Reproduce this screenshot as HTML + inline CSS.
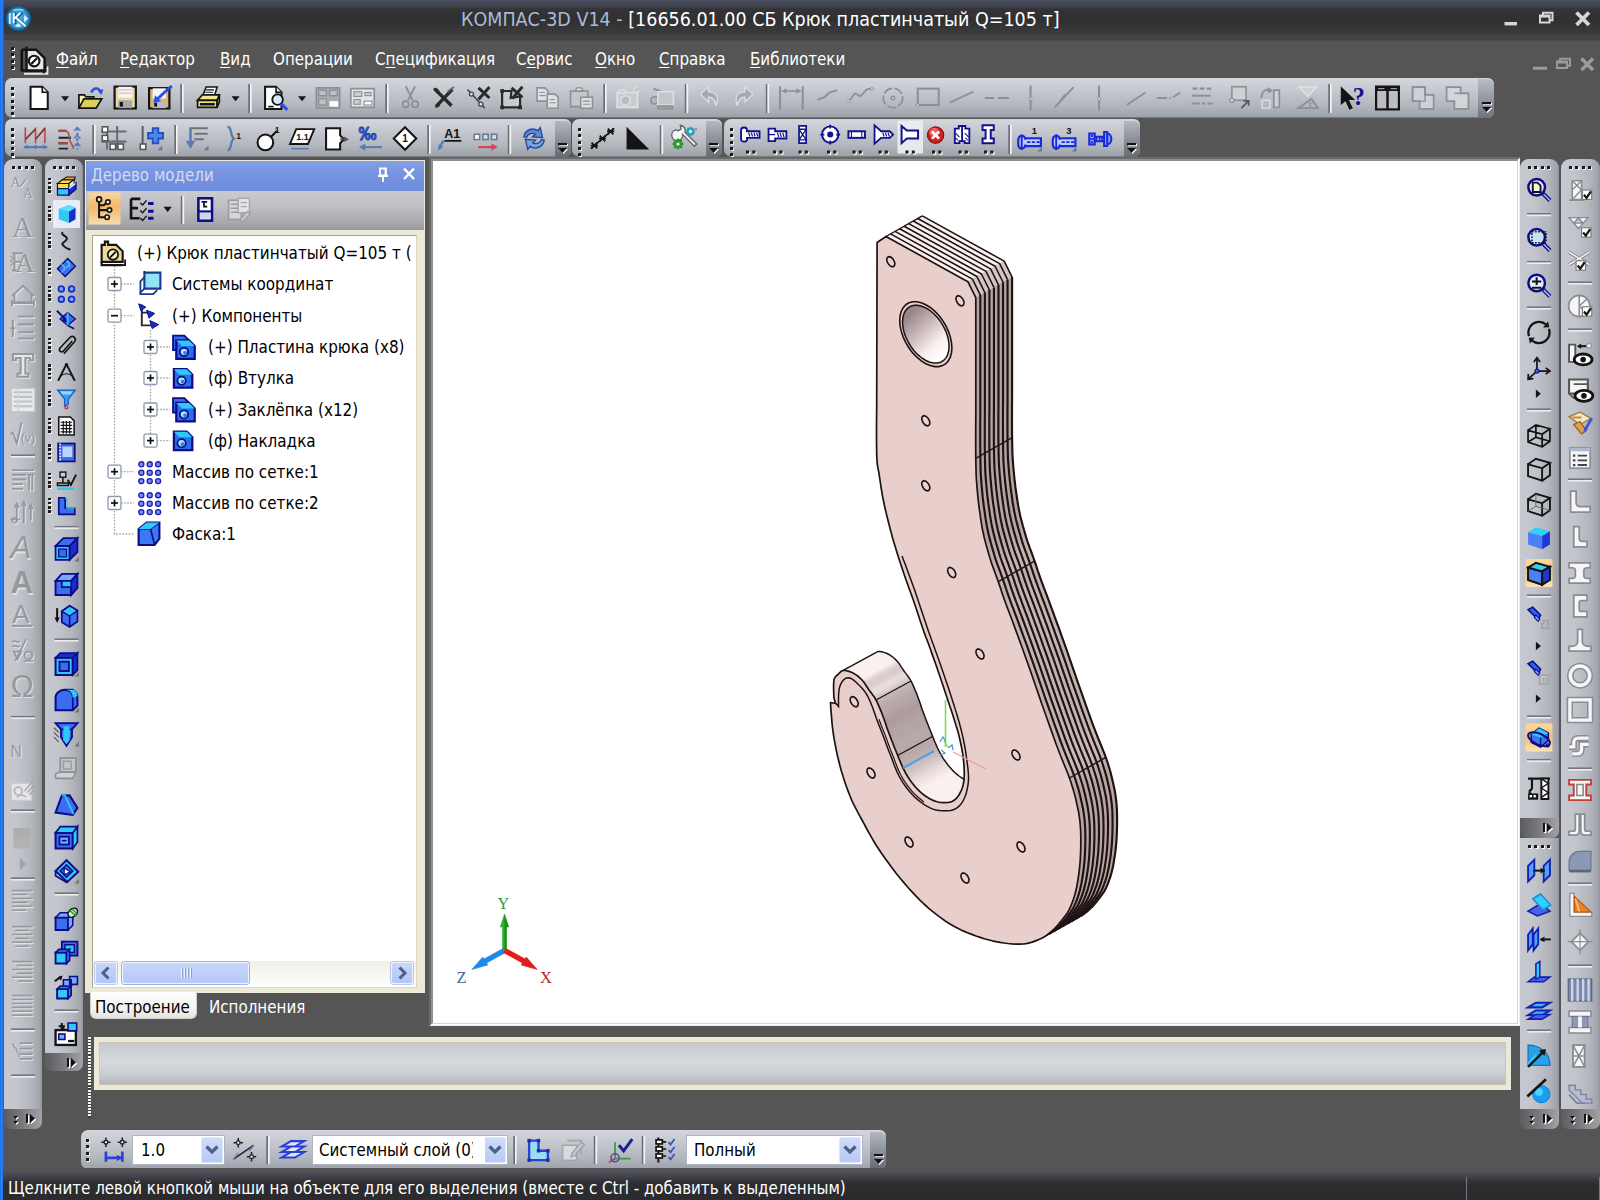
<!DOCTYPE html>
<html lang="ru"><head><meta charset="utf-8"><title>КОМПАС-3D V14</title>
<style>
html,body{margin:0;padding:0;background:#555;}
body{width:1600px;height:1200px;position:relative;overflow:hidden;font-family:'DejaVu Sans Condensed','Liberation Sans',sans-serif;}
div{position:absolute;box-sizing:border-box;}
svg{position:absolute;overflow:visible;}
.t{white-space:nowrap;line-height:1;}
u{text-decoration:underline;text-underline-offset:2px;}
</style></head>
<body>
<div style="left:0px;top:0px;width:1600px;height:1200px;background:#555555"></div>
<div style="left:0px;top:0px;width:1600px;height:41px;background:linear-gradient(to bottom,#4a4e60 0,#40444f 6px,#343436 9px,#303032 20px,#3b3b3c 34px,#474748 37px,#3c3c3c 39px,#555 41px)"></div>
<div style="left:0px;top:0px;width:3.2px;height:1200px;background:linear-gradient(to right,#1a6ae8,#2a86f4 60%,#1e72e6)"></div>
<div style="left:3.2px;top:0px;width:1.6px;height:1200px;background:linear-gradient(to right,#2a5ab0,rgba(60,80,120,0))"></div>
<svg style="left:0;top:0" width="40" height="40" viewBox="0 0 40 40"><defs><radialGradient id="lg" cx="0.5" cy="0.5" r="0.5"><stop offset="0" stop-color="#48b4ec"/><stop offset="0.72" stop-color="#3494d0"/><stop offset="0.9" stop-color="#1f6496"/><stop offset="1" stop-color="#17486e"/></radialGradient></defs><circle cx="18.400" cy="18.400" r="12.700" fill="url(#lg)"/><path d="M13 9.800q5.500-2.200 11 0l-1 1.300q-4.500-1.600-9 0z" fill="#7fdcfa"/><path d="M8.800 13.500l1.900-.8v11.500l-1.900-.8z" fill="#c4f0ff"/><path d="M24 14.800l4.300 3.800-4.300 3.800z" fill="#c4f0ff"/><path d="M14.600 26.300l3.600-3.400 3.400 3.400q-3.500 1.200-7 0z" fill="#d4f4ff"/><path d="M15.500 12.500v11.500M16.500 18.800l6-6M16.500 17l10 9.500" stroke="#185a8c" stroke-width="1.900" fill="none"/><path d="M13.700 13v10.300M14.300 18.600l6.200-5.800M15.500 17.300l10.300 8.900" stroke="#fff" stroke-width="1.800" fill="none"/></svg>
<div class="t" style="left:461px;top:9.5px;font-size:19.5px;color:#fff;letter-spacing:0.0px"><span style="color:#a9bbd6">КОМПАС-3D V14 - </span>[16656.01.00 СБ Крюк пластинчатый Q=105 т]</div>
<svg style="left:0;top:0" width="1600" height="80" viewBox="0 0 1600 80" fill="none"><g stroke="#d6d6da"><path d="M1504.500 23.700h12.500" stroke-width="3.400"/><path d="M1543 15v-2.200h9.500v7.500h-2.500M1540 15.500h9.500v7h-9.500z" stroke-width="2"/><path d="M1540 16.300h9.500" stroke-width="2.600"/><path d="M1576.500 12.500l12.500 12.500M1589 12.500l-12.500 12.500" stroke-width="3.800"/></g><g stroke="#9c9ca0"><path d="M1533 68.200h14" stroke-width="3"/><path d="M1560 61v-2.200h10v7h-2.500M1557 61.500h10v6.500h-10z" stroke-width="1.900"/><path d="M1557 62.300h10" stroke-width="2.400"/><path d="M1581.500 58.500l11.500 11.500M1593 58.500l-11.500 11.500" stroke-width="3.400"/></g></svg>
<div style="left:11.8px;top:48.3px;width:3px;height:3px;background:#f4f4f4"></div><div style="left:10.5px;top:47.0px;width:3px;height:3px;background:#1a1a1a"></div><div style="left:11.8px;top:54.599999999999994px;width:3px;height:3px;background:#f4f4f4"></div><div style="left:10.5px;top:53.3px;width:3px;height:3px;background:#1a1a1a"></div><div style="left:11.8px;top:60.9px;width:3px;height:3px;background:#f4f4f4"></div><div style="left:10.5px;top:59.6px;width:3px;height:3px;background:#1a1a1a"></div><div style="left:11.8px;top:67.2px;width:3px;height:3px;background:#f4f4f4"></div><div style="left:10.5px;top:65.9px;width:3px;height:3px;background:#1a1a1a"></div>
<div class="t" style="left:56px;top:50.5px;font-size:16.8px;color:#fff;"><u>Ф</u>айл</div>
<div class="t" style="left:120px;top:50.5px;font-size:16.8px;color:#fff;"><u>Р</u>едактор</div>
<div class="t" style="left:220px;top:50.5px;font-size:16.8px;color:#fff;"><u>В</u>ид</div>
<div class="t" style="left:273px;top:50.5px;font-size:16.8px;color:#fff;">Операции</div>
<div class="t" style="left:375px;top:50.5px;font-size:16.8px;color:#fff;">С<u>п</u>ецификация</div>
<div class="t" style="left:516px;top:50.5px;font-size:16.8px;color:#fff;">С<u>е</u>рвис</div>
<div class="t" style="left:595px;top:50.5px;font-size:16.8px;color:#fff;"><u>О</u>кно</div>
<div class="t" style="left:659px;top:50.5px;font-size:16.8px;color:#fff;"><u>С</u>правка</div>
<div class="t" style="left:750px;top:50.5px;font-size:16.8px;color:#fff;"><u>Б</u>иблиотеки</div>
<div style="left:4.5px;top:77.5px;width:1489.5px;height:40px;background:linear-gradient(to bottom,#d3d6db 0%,#c6c9cf 30%,#b3b7be 70%,#9da1a9 100%);border-radius:7px 6px 6px 7px;border-bottom:1px solid #77797f"></div>
<div style="left:1478px;top:79px;width:16px;height:38.5px;background:linear-gradient(to bottom,#b9bdc5,#6f737b);border-radius:0 6px 6px 0"></div>
<svg style="left:1481.5px;top:102px" width="12" height="14" viewBox="0 0 12 14"><rect x="1" y="1" width="9" height="2.2" fill="#fff"/><rect x="0" y="0" width="9" height="2.2" fill="#111"/><path d="M1 6h9l-4.5 5z" fill="#fff"/><path d="M0 5h9l-4.5 5z" fill="#111"/></svg>
<div style="left:11.8px;top:88.3px;width:3px;height:3px;background:#f4f4f4"></div><div style="left:10.5px;top:87.0px;width:3px;height:3px;background:#1a1a1a"></div><div style="left:11.8px;top:94.6px;width:3px;height:3px;background:#f4f4f4"></div><div style="left:10.5px;top:93.3px;width:3px;height:3px;background:#1a1a1a"></div><div style="left:11.8px;top:100.89999999999999px;width:3px;height:3px;background:#f4f4f4"></div><div style="left:10.5px;top:99.6px;width:3px;height:3px;background:#1a1a1a"></div><div style="left:11.8px;top:107.2px;width:3px;height:3px;background:#f4f4f4"></div><div style="left:10.5px;top:105.9px;width:3px;height:3px;background:#1a1a1a"></div><div style="left:11.8px;top:113.5px;width:3px;height:3px;background:#f4f4f4"></div><div style="left:10.5px;top:112.2px;width:3px;height:3px;background:#1a1a1a"></div>
<div style="left:4.5px;top:119px;width:566px;height:37.5px;background:linear-gradient(to bottom,#d3d6db 0%,#c6c9cf 30%,#b3b7be 70%,#9da1a9 100%);border-radius:7px 6px 6px 7px;border-bottom:1px solid #77797f"></div>
<div style="left:554.5px;top:120.5px;width:16px;height:36.0px;background:linear-gradient(to bottom,#b3b7bf,#666a72);border-radius:0 6px 6px 0"></div>
<svg style="left:558.0px;top:143px" width="12" height="14" viewBox="0 0 12 14"><rect x="1" y="1" width="9" height="2.2" fill="#fff"/><rect x="0" y="0" width="9" height="2.2" fill="#111"/><path d="M1 6h9l-4.5 5z" fill="#fff"/><path d="M0 5h9l-4.5 5z" fill="#111"/></svg>
<div style="left:11.8px;top:129.3px;width:3px;height:3px;background:#f4f4f4"></div><div style="left:10.5px;top:128.0px;width:3px;height:3px;background:#1a1a1a"></div><div style="left:11.8px;top:135.60000000000002px;width:3px;height:3px;background:#f4f4f4"></div><div style="left:10.5px;top:134.3px;width:3px;height:3px;background:#1a1a1a"></div><div style="left:11.8px;top:141.9px;width:3px;height:3px;background:#f4f4f4"></div><div style="left:10.5px;top:140.6px;width:3px;height:3px;background:#1a1a1a"></div><div style="left:11.8px;top:148.20000000000002px;width:3px;height:3px;background:#f4f4f4"></div><div style="left:10.5px;top:146.9px;width:3px;height:3px;background:#1a1a1a"></div><div style="left:11.8px;top:154.5px;width:3px;height:3px;background:#f4f4f4"></div><div style="left:10.5px;top:153.2px;width:3px;height:3px;background:#1a1a1a"></div>
<div style="left:571.5px;top:119px;width:150px;height:37.5px;background:linear-gradient(to bottom,#d3d6db 0%,#c6c9cf 30%,#b3b7be 70%,#9da1a9 100%);border-radius:7px 6px 6px 7px;border-bottom:1px solid #77797f"></div>
<div style="left:705.5px;top:120.5px;width:16px;height:36.0px;background:linear-gradient(to bottom,#b3b7bf,#666a72);border-radius:0 6px 6px 0"></div>
<svg style="left:709.0px;top:143px" width="12" height="14" viewBox="0 0 12 14"><rect x="1" y="1" width="9" height="2.2" fill="#fff"/><rect x="0" y="0" width="9" height="2.2" fill="#111"/><path d="M1 6h9l-4.5 5z" fill="#fff"/><path d="M0 5h9l-4.5 5z" fill="#111"/></svg>
<div style="left:578.8px;top:129.3px;width:3px;height:3px;background:#f4f4f4"></div><div style="left:577.5px;top:128.0px;width:3px;height:3px;background:#1a1a1a"></div><div style="left:578.8px;top:135.60000000000002px;width:3px;height:3px;background:#f4f4f4"></div><div style="left:577.5px;top:134.3px;width:3px;height:3px;background:#1a1a1a"></div><div style="left:578.8px;top:141.9px;width:3px;height:3px;background:#f4f4f4"></div><div style="left:577.5px;top:140.6px;width:3px;height:3px;background:#1a1a1a"></div><div style="left:578.8px;top:148.20000000000002px;width:3px;height:3px;background:#f4f4f4"></div><div style="left:577.5px;top:146.9px;width:3px;height:3px;background:#1a1a1a"></div><div style="left:578.8px;top:154.5px;width:3px;height:3px;background:#f4f4f4"></div><div style="left:577.5px;top:153.2px;width:3px;height:3px;background:#1a1a1a"></div>
<div style="left:723.5px;top:119px;width:416px;height:37.5px;background:linear-gradient(to bottom,#d3d6db 0%,#c6c9cf 30%,#b3b7be 70%,#9da1a9 100%);border-radius:7px 6px 6px 7px;border-bottom:1px solid #77797f"></div>
<div style="left:1123.5px;top:120.5px;width:16px;height:36.0px;background:linear-gradient(to bottom,#b3b7bf,#666a72);border-radius:0 6px 6px 0"></div>
<svg style="left:1127.0px;top:143px" width="12" height="14" viewBox="0 0 12 14"><rect x="1" y="1" width="9" height="2.2" fill="#fff"/><rect x="0" y="0" width="9" height="2.2" fill="#111"/><path d="M1 6h9l-4.5 5z" fill="#fff"/><path d="M0 5h9l-4.5 5z" fill="#111"/></svg>
<div style="left:730.8px;top:129.3px;width:3px;height:3px;background:#f4f4f4"></div><div style="left:729.5px;top:128.0px;width:3px;height:3px;background:#1a1a1a"></div><div style="left:730.8px;top:135.60000000000002px;width:3px;height:3px;background:#f4f4f4"></div><div style="left:729.5px;top:134.3px;width:3px;height:3px;background:#1a1a1a"></div><div style="left:730.8px;top:141.9px;width:3px;height:3px;background:#f4f4f4"></div><div style="left:729.5px;top:140.6px;width:3px;height:3px;background:#1a1a1a"></div><div style="left:730.8px;top:148.20000000000002px;width:3px;height:3px;background:#f4f4f4"></div><div style="left:729.5px;top:146.9px;width:3px;height:3px;background:#1a1a1a"></div><div style="left:730.8px;top:154.5px;width:3px;height:3px;background:#f4f4f4"></div><div style="left:729.5px;top:153.2px;width:3px;height:3px;background:#1a1a1a"></div>
<svg style="left:0;top:0" width="1600" height="1200" viewBox="0 0 1600 1200" shape-rendering="auto">
<g transform="translate(29.0,85.5) scale(1.5625)"><path d="M1 .8h7.500l3.500 3.500v10.700h-11z" fill="#fff" stroke="#141414" stroke-width="1.3" /><path d="M8.500 .8v3.500h3.500" fill="#dfe0e3" stroke="#141414" stroke-width="1" /></g>
<g transform="translate(78.0,85.5) scale(1.5625)"><path d="M.6 14.500v-8.500h3.500l1 1.300h5v2" fill="#f4f0a8" stroke="#141414" stroke-width="1.1" /><path d="M.6 14.500l3.200-6h11.400l-3.600 6z" fill="#d8d060" stroke="#141414" stroke-width="1.1" /><path d="M8.500 4.500c1.500-3.500 5-3.500 6 .2" fill="none" stroke="#2a50e8" stroke-width="1.7" /><path d="M12.800 3l2.200 3 1.200-3.600z" fill="#2a50e8" /></g>
<g transform="translate(113.5,85.5) scale(1.5625)"><rect x="0.7" y="0.7" width="13.6" height="14" fill="#e6d9a2" stroke="#141414" stroke-width="1.4" /><rect x="3" y="0.8" width="9" height="7" fill="#f4f4f4" /><path d="M3.500 2.800h8M3.500 4.800h8" fill="none" stroke="#e0b8b8" stroke-width="0.8" /><rect x="3" y="9.5" width="9" height="5" fill="#a8a8a8" /><rect x="4" y="10.5" width="2" height="3" fill="#141414" /></g>
<g transform="translate(148.0,85.5) scale(1.5625)"><rect x="0.7" y="1.7" width="13" height="13" fill="#d9b870" stroke="#141414" stroke-width="1.4" /><rect x="3" y="1.8" width="8.5" height="6.5" fill="#f4f4f4" /><rect x="3" y="10" width="8.5" height="4.5" fill="#b8b8c8" /><rect x="4" y="11" width="1.8" height="2.5" fill="#141414" /><path d="M14.500 .8L5 9.500" fill="none" stroke="#2a50e8" stroke-width="1.8" /><path d="M3.500 11l1-4.800 3.800 3.800z" fill="#2a50e8" /><circle cx="14.6" cy="0.9" r="1" fill="#2a50e8" /></g>
<g transform="translate(196.0,85.5) scale(1.5625)"><path d="M4.500 6l2-5h7l-1.500 5z" fill="#fff" stroke="#141414" stroke-width="1" /><path d="M6.500 2.800h5M6 4.300h5" fill="none" stroke="#141414" stroke-width="0.7" /><path d="M1 9.500l3-3.500h11l-1.500 3.500z" fill="#f0e890" stroke="#141414" stroke-width="1" /><path d="M1 9.500h12.500v4.500h-12.500z" fill="#e8e080" stroke="#141414" stroke-width="1.1" /><path d="M13.500 9.500l1.500-3.500v4.500l-1.500 3.500z" fill="#b8b050" stroke="#141414" stroke-width="1" /><path d="M2.500 12h9.500" fill="none" stroke="#141414" stroke-width="1.6" /></g>
<g transform="translate(263.5,85.5) scale(1.5625)"><path d="M1 .8h7l3.500 3.500v10.700h-10.500z" fill="#fff" stroke="#141414" stroke-width="1.3" /><path d="M8 .8v3.500h3.500" fill="#dfe0e3" stroke="#141414" stroke-width="1" /><circle cx="9" cy="9" r="3.4" fill="#d8e8ff" stroke="#141414" stroke-width="1.2" /><path d="M11.300 11.600l4 4" fill="none" stroke="#2a50e8" stroke-width="2" /><path d="M3 13.500h3.500" fill="none" stroke="#141414" stroke-width="1" /></g>
<g transform="translate(315.5,85.5) scale(1.5625)"><rect x="0.5" y="1.5" width="15" height="13" fill="#a9abb0" stroke="#8d8f95" stroke-width="1" /><rect x="2" y="3" width="5" height="3.5" fill="#bdbfc4" stroke="#8d8f95" stroke-width="0.8" /><rect x="9" y="3" width="5" height="3.5" fill="#bdbfc4" stroke="#8d8f95" stroke-width="0.8" /><rect x="2" y="8.5" width="5" height="4" fill="#bdbfc4" stroke="#8d8f95" stroke-width="0.8" /><rect x="9" y="10" width="5.5" height="3.5" fill="#fff" /></g>
<g transform="translate(350.0,85.5) scale(1.5625)"><rect x="0.5" y="2" width="15" height="12" fill="#e4e5e8" stroke="#8d8f95" stroke-width="1.1" /><rect x="2.5" y="4" width="5" height="3" fill="#cfd0d4" stroke="#8d8f95" stroke-width="0.7" /><rect x="9.5" y="4.5" width="4" height="2" fill="#cfd0d4" stroke="#8d8f95" stroke-width="0.7" /><rect x="2.5" y="9" width="4" height="3" fill="#cfd0d4" stroke="#8d8f95" stroke-width="0.7" /><rect x="9" y="10" width="5" height="2.5" fill="#fff" stroke="#8d8f95" stroke-width="0.7" /></g>
<g transform="translate(401.0,85.5) scale(1.5625)"><path d="M3 .5l4.500 9M9 .5l-4.500 9" fill="none" stroke="#8d8f95" stroke-width="1.2" /><circle cx="3" cy="12" r="2" fill="none" stroke="#8d8f95" stroke-width="1.1" /><circle cx="9" cy="12" r="2" fill="none" stroke="#8d8f95" stroke-width="1.1" /></g>
<g transform="translate(432.0,85.5) scale(1.5625)"><path d="M1.500 2l11 11M13 2.500l-10.500 11" fill="none" stroke="#2a2a2a" stroke-width="2.2" /><path d="M.8 1.500l3 .5 1.500 2.500-2 1z" fill="#2a2a2a" /><path d="M2 14.500l1-3 2.500 1.500z" fill="#2a2a2a" /><path d="M10 4l4-3" fill="none" stroke="#666" stroke-width="1.2" /></g>
<g transform="translate(466.0,85.5) scale(1.5625)"><path d="M1 2.500l11 12" fill="none" stroke="#444" stroke-width="1" /><circle cx="3.5" cy="5.5" r="1.3" fill="#dfe0e3" stroke="#444" stroke-width="0.8" /><circle cx="9.5" cy="12" r="1.3" fill="#dfe0e3" stroke="#444" stroke-width="0.8" /><path d="M8 1.500l7 6.500M15 1l-7 8" fill="none" stroke="#2a2a2a" stroke-width="1.9" /></g>
<g transform="translate(499.0,85.5) scale(1.5625)"><path d="M2 3.500h6l-.5 4.500 6-1v7h-11.500z" fill="#c8cad0" stroke="#2a2a2a" stroke-width="1.4" /><rect x="0.8" y="2.3" width="2.4" height="2.4" fill="#2a2a2a" /><rect x="0.8" y="12.8" width="2.4" height="2.4" fill="#2a2a2a" /><rect x="12.3" y="12.8" width="2.4" height="2.4" fill="#2a2a2a" /><path d="M8 1.500l7 6M15 .8l-6.500 7.500" fill="none" stroke="#2a2a2a" stroke-width="1.8" /></g>
<g transform="translate(535.5,85.5) scale(1.5625)"><path d="M1 1.500h5l2 2v6.500h-7z" fill="#dfe0e3" stroke="#8d8f95" stroke-width="1" /><path d="M2.500 4.500h3.500M2.500 6.500h4" fill="none" stroke="#8d8f95" stroke-width="0.7" /><path d="M7.500 5.500h5l2 2v7h-7z" fill="#dfe0e3" stroke="#8d8f95" stroke-width="1" /><path d="M9 9h3.500M9 11h4" fill="none" stroke="#8d8f95" stroke-width="0.7" /></g>
<g transform="translate(569.0,85.5) scale(1.5625)"><path d="M1 3.500h11v10h-11z" fill="#c4c6ca" stroke="#8d8f95" stroke-width="1" /><path d="M4 3.500l1-2h3l1 2z" fill="#dfe0e3" stroke="#8d8f95" stroke-width="0.9" /><path d="M7.500 7.500h7.500v7h-7.500z" fill="#dfe0e3" stroke="#8d8f95" stroke-width="1" /><path d="M9 10h4.500M9 12h4.500" fill="none" stroke="#8d8f95" stroke-width="0.7" /></g>
<g transform="translate(616.0,85.5) scale(1.5625)"><rect x="0.8" y="4.5" width="13" height="9.5" fill="#c9cbd0" stroke="#dfe0e3" stroke-width="1.2" /><circle cx="6" cy="9.5" r="3" fill="#b9bbc0" stroke="#dfe0e3" stroke-width="1" /><path d="M11 3l2-2.500M13 4.500l2.500-.8M10 1l.3-1" fill="none" stroke="#dfe0e3" stroke-width="1" /><rect x="2" y="2.8" width="4" height="2" fill="#c9cbd0" stroke="#dfe0e3" stroke-width="0.8" /></g>
<g transform="translate(650.0,85.5) scale(1.5625)"><path d="M2 2l7 2.500M9 4.500l4 5.500" fill="none" stroke="#8d8f95" stroke-width="1.3" /><circle cx="2.8" cy="9.5" r="2.3" fill="#b4b6bb" stroke="#8d8f95" stroke-width="1" /><rect x="5" y="4" width="10" height="8.5" fill="#c4c6cb" stroke="#dfe0e3" stroke-width="1" /><rect x="5" y="13" width="9.5" height="2" fill="#9c9ea4" stroke="#8d8f95" stroke-width="0.8" /></g>
<g transform="translate(699.0,85.5) scale(1.5625)"><path d="M1 5.500l5-4.500v3c5 0 7 3.500 5 9-.500-4-2-5.500-5-5.500v3z" fill="#a6a8ae" stroke="#dfe0e3" stroke-width="0.8" /></g>
<g transform="translate(731.0,85.5) scale(1.5625)"><path d="M14 5.500l-5-4.500v3c-5 0-7 3.500-5 9 .5-4 2-5.500 5-5.500v3z" fill="#a6a8ae" stroke="#dfe0e3" stroke-width="0.8" /></g>
<g transform="translate(778.5,85.5) scale(1.5625)"><path d="M1 .5v15M15.500 .5v15" fill="none" stroke="#8d8f95" stroke-width="1.3" /><path d="M2.500 3.500h11.500" fill="none" stroke="#8d8f95" stroke-width="1" /><path d="M2 3.500l3-1.800v3.600zM14.500 3.500l-3-1.800v3.600z" fill="#8d8f95" /></g>
<g transform="translate(816.0,85.5) scale(1.5625)"><path d="M1 9l4.500-1.500 3-3 5-1.500" fill="none" stroke="#8d8f95" stroke-width="1.2" /></g>
<g transform="translate(848.0,85.5) scale(1.5625)"><path d="M.5 10l4-5 3.500 2 4-4.500 3.500-.5" fill="none" stroke="#8d8f95" stroke-width="1.1" /><circle cx="0.8" cy="10" r="0.9" fill="#dfe0e3" stroke="#8d8f95" stroke-width="0.6" /><circle cx="15.3" cy="2.2" r="0.9" fill="#dfe0e3" stroke="#8d8f95" stroke-width="0.6" /></g>
<g transform="translate(882.0,85.5) scale(1.5625)"><circle cx="7" cy="8" r="6.2" fill="none" stroke="#8d8f95" stroke-width="1.1" stroke-dasharray="6 1.500"/><circle cx="7" cy="8" r="1.2" fill="none" stroke="#8d8f95" stroke-width="0.8" /></g>
<g transform="translate(916.5,85.5) scale(1.5625)"><rect x="0.8" y="2" width="13.4" height="10.5" fill="none" stroke="#8d8f95" stroke-width="1.3" /><circle cx="0.8" cy="12.5" r="0.9" fill="#dfe0e3" stroke="#8d8f95" stroke-width="0.6" /></g>
<g transform="translate(949.0,85.5) scale(1.5625)"><path d="M.5 11l15-7" fill="none" stroke="#8d8f95" stroke-width="1.2" /></g>
<g transform="translate(984.0,85.5) scale(1.5625)"><path d="M.5 8h6M9 8h7" fill="none" stroke="#8d8f95" stroke-width="1.3" /></g>
<g transform="translate(1029.0,85.5) scale(1.5625)"><path d="M1 0v16" fill="none" stroke="#8d8f95" stroke-width="1.3" /><circle cx="1" cy="8.5" r="1" fill="#dfe0e3" stroke="#8d8f95" stroke-width="0.6" /></g>
<g transform="translate(1054.0,85.5) scale(1.5625)"><path d="M.5 14l12-13" fill="none" stroke="#8d8f95" stroke-width="1.2" /><path d="M7 5.500l-4 6" fill="none" stroke="#8d8f95" stroke-width="0.8" /></g>
<g transform="translate(1097.5,85.5) scale(1.5625)"><path d="M1 0v16" fill="none" stroke="#8d8f95" stroke-width="1.3" /><circle cx="1" cy="8.5" r="1" fill="#dfe0e3" stroke="#8d8f95" stroke-width="0.6" /></g>
<g transform="translate(1126.0,85.5) scale(1.5625)"><path d="M.5 12.500l12-8" fill="none" stroke="#8d8f95" stroke-width="1.2" /></g>
<g transform="translate(1156.0,85.5) scale(1.5625)"><path d="M.5 8h6.500M8.500 8h1M11 7.500l4.500-3" fill="none" stroke="#8d8f95" stroke-width="1.2" /></g>
<g transform="translate(1191.0,85.5) scale(1.5625)"><path d="M1 2h3M5.500 2h3M10 2h3M.5 6.500h12M.5 11.500h5M7 11.500h2M10.500 11.500h3.500" fill="none" stroke="#8d8f95" stroke-width="1.3" /></g>
<g transform="translate(1228.0,85.5) scale(1.5625)"><rect x="2.5" y="0.8" width="9" height="8.5" fill="#cfd1d6" stroke="#8d8f95" stroke-width="1" /><circle cx="2.5" cy="9.5" r="1.3" fill="#dfe0e3" stroke="#8d8f95" stroke-width="0.8" /><path d="M8.500 14.500l4.500-4.500M10 9.800h3.200v3.200" fill="none" stroke="#55575c" stroke-width="1.1" /></g>
<g transform="translate(1259.0,85.5) scale(1.5625)"><path d="M1.500 8c0-4 3-6.500 6-5" fill="none" stroke="#8d8f95" stroke-width="1.2" /><path d="M6 1l3 2.500-3.500 1.500z" fill="#8d8f95" /><rect x="9.5" y="3" width="3.5" height="11" fill="#cfd1d6" stroke="#8d8f95" stroke-width="1.1" /><path d="M2 9.500h5v5h-5z" fill="none" stroke="#dfe0e3" stroke-width="0.9" /></g>
<g transform="translate(1296.0,85.5) scale(1.5625)"><path d="M2 1h11l-5.500 6z" fill="#cfd1d6" stroke="#dfe0e3" stroke-width="1" /><path d="M1.500 14.500h12.500l-4-6z" fill="none" stroke="#8d8f95" stroke-width="1.2" /><path d="M9 14v-3h3" fill="none" stroke="#8d8f95" stroke-width="0.7" /></g>
<g transform="translate(1340.0,85.5) scale(1.5625)"><path d="M.5 .5v12l3-2.500 2.500 5.500 2.200-1-2.500-5.300h4z" fill="#141414" /><text x="8.200" y="12.500" font-size="15.500" font-weight="bold" fill="#12128c" font-family="'Liberation Serif',serif">?</text></g>
<g transform="translate(1375.0,85.5) scale(1.5625)"><rect x="0.7" y="0.7" width="14.6" height="14.6" fill="#bcbec4" stroke="#141414" stroke-width="1.4" /><rect x="0.7" y="0.7" width="14.6" height="2.8" fill="#141414" /><path d="M8 2v13.500" fill="none" stroke="#141414" stroke-width="1.6" /><path d="M2 2h4M10 2h4" fill="none" stroke="#999" stroke-width="0.8" /></g>
<g transform="translate(1411.0,85.5) scale(1.5625)"><path d="M1 1h8v5h5.500v9h-9v-5h-4.500z" fill="#cdd0d5" stroke="#8d8f95" stroke-width="1.1" /><path d="M1 1h8v9h-8z" fill="none" stroke="#8d8f95" stroke-width="0.9" /></g>
<g transform="translate(1445.0,85.5) scale(1.5625)"><path d="M1 1h9v4h5v10h-9v-5h-5z" fill="#d3d5da" stroke="#8d8f95" stroke-width="1.1" /><path d="M6 5h9" fill="none" stroke="#8d8f95" stroke-width="0.9" /></g>
<g transform="translate(61.0,96.3) scale(1.5625)"><path d="M0 0h5.200l-2.600 3.200z" fill="#141414" /></g>
<g transform="translate(231.5,96.3) scale(1.5625)"><path d="M0 0h5.200l-2.600 3.200z" fill="#141414" /></g>
<g transform="translate(298.0,96.3) scale(1.5625)"><path d="M0 0h5.200l-2.600 3.200z" fill="#141414" /></g>
<rect x="180.3" y="84" width="1.700" height="29" fill="#6c6e74"/><rect x="182" y="84" width="1.700" height="29" fill="#f2f3f5"/>
<rect x="248.3" y="84" width="1.700" height="29" fill="#6c6e74"/><rect x="250" y="84" width="1.700" height="29" fill="#f2f3f5"/>
<rect x="385.3" y="84" width="1.700" height="29" fill="#6c6e74"/><rect x="387" y="84" width="1.700" height="29" fill="#f2f3f5"/>
<rect x="603.3" y="84" width="1.700" height="29" fill="#6c6e74"/><rect x="605" y="84" width="1.700" height="29" fill="#f2f3f5"/>
<rect x="684.8" y="84" width="1.700" height="29" fill="#6c6e74"/><rect x="686.5" y="84" width="1.700" height="29" fill="#f2f3f5"/>
<rect x="765.8" y="84" width="1.700" height="29" fill="#6c6e74"/><rect x="767.5" y="84" width="1.700" height="29" fill="#f2f3f5"/>
<rect x="1328.3" y="84" width="1.700" height="29" fill="#6c6e74"/><rect x="1330" y="84" width="1.700" height="29" fill="#f2f3f5"/>
<g transform="translate(23.0,126.0) scale(1.5625)"><path d="M1.500 1v10M8 1v10M14 1v10" fill="none" stroke="#b04a4a" stroke-width="1" /><path d="M1.500 8.500l6.500-6.500M8 8.500l6-7" fill="none" stroke="#8a3030" stroke-width="1.1" /><path d="M.5 13.500h15" fill="none" stroke="#5a78b4" stroke-width="1.4" /><path d="M.5 13.500l2.500-1.600v3.200zM15.500 13.500l-2.500-1.600v3.200zM8 12l1.500 1.500-1.500 1.500-1.500-1.500z" fill="#5a78b4" /></g>
<g transform="translate(57.0,126.0) scale(1.5625)"><path d="M1 3h5M1 7.500h8M1 11h6M1 14.500h6" fill="none" stroke="#222" stroke-width="1.2" /><path d="M1 11h6M1 3.200h4" fill="none" stroke="#c83c3c" stroke-width="1.2" /><path d="M4.500 3c3.500 0 3 3 3.500 5.500s2 3 2.500 6" fill="none" stroke="#b04a4a" stroke-width="1" /><path d="M13 1v14" fill="none" stroke="#5a78b4" stroke-width="1.3" stroke-dasharray="2 1.300"/><path d="M11 3l2-2 2 2M11 8l2-2 2 2M11 13l2-2 2 2" fill="none" stroke="#5a78b4" stroke-width="1" /></g>
<g transform="translate(101.5,126.0) scale(1.5625)"><path d="M3.500 0v15M10 0v15M0 3.500h16M0 10h16" fill="none" stroke="#6a6c72" stroke-width="1.3" /><rect x="0.5" y="0.5" width="3.5" height="3.5" fill="#fff" stroke="#555" stroke-width="1" /><rect x="0.5" y="6" width="3.5" height="3.5" fill="#fff" stroke="#555" stroke-width="1" /><rect x="5.5" y="11.5" width="3.5" height="3.5" fill="#fff" stroke="#555" stroke-width="1" /><rect x="10.5" y="11.5" width="3.5" height="3.5" fill="#fff" stroke="#555" stroke-width="1" /></g>
<g transform="translate(139.5,126.0) scale(1.5625)"><path d="M2 0v12" fill="none" stroke="#555" stroke-width="1.2" /><rect x="0.5" y="11.5" width="3.5" height="3.5" fill="#fff" stroke="#555" stroke-width="1" /><path d="M8.500 1.500h3.500v3h3v3.500h-3v3h-3.500v-3h-3v-3.500h3z" fill="#4a8af0" stroke="#2a50c0" stroke-width="1.3" /><path d="M14.500 15.500v-3l-3 3z" fill="#777" /></g>
<g transform="translate(185.0,126.0) scale(1.5625)"><path d="M3.500 1v11" fill="none" stroke="#5a78b4" stroke-width="1.6" /><path d="M.5 9.500h6l-3 5z" fill="#5a78b4" /><path d="M3.500 1.500h11M6 5h8.500M6 8.500h6" fill="none" stroke="#707278" stroke-width="1.3" /><path d="M15 15.500v-3l-3 3z" fill="#777" /></g>
<g transform="translate(226.0,126.0) scale(1.5625)"><path d="M1 .5c3 0 1.500 6 4 7.500-2.500 1.500-1 7.500-4 7.500" fill="none" stroke="#5a78b4" stroke-width="1.5" /><text x="6.5" y="8" font-size="5.5" fill="#141414" font-family="'Liberation Sans',sans-serif" font-weight="bold" >1</text></g>
<g transform="translate(256.0,126.0) scale(1.5625)"><circle cx="6" cy="10.5" r="5" fill="#fff" stroke="#141414" stroke-width="1.3" /><path d="M9.500 7l4-4" fill="none" stroke="#141414" stroke-width="1.3" /><text x="12" y="4.5" font-size="5.5" fill="#141414" font-family="'Liberation Sans',sans-serif" font-weight="bold" >1</text></g>
<g transform="translate(290.0,126.0) scale(1.5625)"><path d="M4 2h11.500l-4 9.500h-11.500z" fill="#fff" stroke="#141414" stroke-width="1.2" /><text x="4" y="9" font-size="5.8" fill="#141414" font-family="'Liberation Sans',sans-serif" font-weight="bold" >1.1</text><path d="M1 14.500h11" fill="none" stroke="#5a78b4" stroke-width="1" /></g>
<g transform="translate(324.5,126.0) scale(1.5625)"><path d="M1 1.500h9v4.500l2.500 2.500-2.500 2.500v4h-9z" fill="#fff" stroke="#141414" stroke-width="1.3" /><path d="M10 8.500h5" fill="none" stroke="#555" stroke-width="1.1" /><path d="M15.500 8.500l-3-1.800v3.600z" fill="#555" /></g>
<g transform="translate(358.5,126.0) scale(1.5625)"><text x="0" y="9" font-size="11.500" font-weight="bold" fill="#3a6ae0" stroke="#1c3ca8" stroke-width=".5" font-family="'Liberation Sans',sans-serif">‰</text><path d="M2 13.500h13" fill="none" stroke="#5a78b4" stroke-width="1.3" /><path d="M.3 13.500l4-2.300v4.600z" fill="#5a78b4" /></g>
<g transform="translate(392.5,126.0) scale(1.5625)"><path d="M8 .8l7.200 7.200-7.200 7.200-7.200-7.200z" fill="#fff" stroke="#141414" stroke-width="1.3" /><text x="6.3" y="10.3" font-size="6.5" fill="#141414" font-family="'Liberation Sans',sans-serif" font-weight="bold" >1</text></g>
<g transform="translate(438.0,126.0) scale(1.5625)"><text x="4" y="7.5" font-size="8" fill="#141414" font-family="'Liberation Sans',sans-serif" font-weight="bold" >A1</text><path d="M4.500 9.500h10.500" fill="none" stroke="#141414" stroke-width="1.1" /><path d="M4.500 9.500c-1.500 0-2.500 1.500-3 4.500" fill="none" stroke="#5a78b4" stroke-width="1.4" /><path d="M0 16l.5-4.500 2.800 1.800z" fill="#5a78b4" /></g>
<g transform="translate(473.5,126.0) scale(1.5625)"><rect x="0.5" y="5.3" width="3.4" height="3.4" fill="#fff" stroke="#6a7a94" stroke-width="1" /><rect x="6" y="5.3" width="3.4" height="3.4" fill="#c8e0e8" stroke="#6a7a94" stroke-width="1" /><rect x="11.5" y="5.3" width="3.4" height="3.4" fill="#c8e0e8" stroke="#6a7a94" stroke-width="1" /><path d="M3 13.500h10" fill="none" stroke="#d84060" stroke-width="1.4" /><path d="M15.500 13.500l-4-2.300v4.600z" fill="#d84060" /></g>
<g transform="translate(521.5,126.0) scale(1.5625)"><path d="M1.500 7c.5-4 5-6.500 9-4l1.500-2 1.500 6.500-6.500-.5 1.800-1.800c-2.500-1.200-5 0-5.500 2z" fill="#5a8ad8" stroke="#2a4a9a" stroke-width="0.9" /><path d="M14.500 9c-.5 4-5 6.500-9 4l-1.500 2-1.500-6.500 6.500 .5-1.800 1.800c2.500 1.200 5 0 5.500-2z" fill="#7aa6e8" stroke="#2a4a9a" stroke-width="0.9" /></g>
<g transform="translate(590.0,126.0) scale(1.5625)"><path d="M.5 14.500l15-13" fill="none" stroke="#141414" stroke-width="1" /><path d="M0.9999999999999998 10.7l3.600 3.600M4.6 10.7l-3.600 3.600M0.5 12.5h4.600" fill="none" stroke="#141414" stroke-width="1.1" /><path d="M6.2 6.2l3.600 3.600M9.8 6.2l-3.600 3.600M5.7 8h4.600" fill="none" stroke="#141414" stroke-width="1.1" /><path d="M11.399999999999999 1.7l3.600 3.600M15.0 1.7l-3.600 3.600M10.899999999999999 3.5h4.600" fill="none" stroke="#141414" stroke-width="1.1" /></g>
<g transform="translate(625.0,126.0) scale(1.5625)"><path d="M1 .5l14.500 14.500h-14.500z" fill="#141414" /></g>
<g transform="translate(672.5,126.0) scale(1.5625)"><path d="M2 2.500a3.500 3.500 0 1 0 4.500 3l7.500 7.500 1.500-1.500-7.500-7.500a3.500 3.500 0 0 0-3-4.500l.5 2.500-2 1z" fill="#f4f4f4" stroke="#666" stroke-width="0.9" /><g fill="#28b428" stroke="#127a12" stroke-width=".6"><circle cx="3.5" cy="11.5" r="2.6" fill="none" /></g><path d="M3.500 8v7M0 11.500h7M1 9l5 5M6 9l-5 5" fill="none" stroke="#1e9a1e" stroke-width="1.2" /><circle cx="3.5" cy="11.5" r="1" fill="#fff" /><g><circle cx="11.5" cy="3.5" r="2.4" fill="#30b8d8" stroke="#1a7a98" stroke-width="0.6" /></g><path d="M11.500 .5v6M8.500 3.500h6M9.400 1.400l4.200 4.200M13.600 1.400l-4.200 4.200" fill="none" stroke="#30a8c8" stroke-width="1.1" /><circle cx="11.5" cy="3.5" r="0.9" fill="#fff" /><circle cx="15" cy="2" r="0.6" fill="#e04040" /></g>
<rect x="92.3" y="125" width="1.700" height="29" fill="#6c6e74"/><rect x="94" y="125" width="1.700" height="29" fill="#f2f3f5"/>
<rect x="174.3" y="125" width="1.700" height="29" fill="#6c6e74"/><rect x="176" y="125" width="1.700" height="29" fill="#f2f3f5"/>
<rect x="427.3" y="125" width="1.700" height="29" fill="#6c6e74"/><rect x="429" y="125" width="1.700" height="29" fill="#f2f3f5"/>
<rect x="507.8" y="125" width="1.700" height="29" fill="#6c6e74"/><rect x="509.5" y="125" width="1.700" height="29" fill="#f2f3f5"/>
<rect x="659.8" y="125" width="1.700" height="29" fill="#6c6e74"/><rect x="661.5" y="125" width="1.700" height="29" fill="#f2f3f5"/>
<rect x="1008.3" y="125" width="1.700" height="29" fill="#6c6e74"/><rect x="1010" y="125" width="1.700" height="29" fill="#f2f3f5"/>
<rect x="897.5" y="120.500" width="25.500" height="33" fill="#eceef2" opacity=".9"/>
<g transform="translate(740.0,124.0) scale(1.32)"><path d="M.8 4.500c0-2.500 4.500-2.500 4.500 0v1h9.500v5h-9.500v1c0 2.500-4.500 2.500-4.500 0z" fill="#fff" stroke="#12128c" stroke-width="1.4" /><path d="M6.500 6.500l1 3M8.500 6.500l1 3M10.500 6.500l1 3M12.500 6.500l1 3" fill="none" stroke="#12128c" stroke-width="0.9" /></g>
<g transform="translate(767.5,124.0) scale(1.32)"><path d="M.8 3.500h5v2h8.500v5.500h-8.500v2h-5z" fill="#fff" stroke="#12128c" stroke-width="1.4" /><path d="M.8 8h5" fill="none" stroke="#12128c" stroke-width="1" /><path d="M7.500 6.500l1 3.500M9.500 6.500l1 3.500M11.500 6.500l1 3.500" fill="none" stroke="#12128c" stroke-width="0.9" /></g>
<g transform="translate(798.0,124.0) scale(1.32)"><path d="M.8 1.500h5.400v13h-5.400z" fill="#fff" stroke="#12128c" stroke-width="1.3" /><path d="M.8 4h5.400M.8 12h5.400M.8 4l5.400 8M6.200 4l-5.400 8" fill="none" stroke="#12128c" stroke-width="1" /></g>
<g transform="translate(821.0,124.0) scale(1.32)"><circle cx="7" cy="8" r="6.2" fill="#fff" stroke="#12128c" stroke-width="1.5" /><circle cx="7" cy="8" r="2.3" fill="#12128c" /><path d="M7 .5v3M7 12.500v3M-.5 8h3M11.500 8h3" fill="none" stroke="#12128c" stroke-width="1.3" /></g>
<g transform="translate(847.5,124.0) scale(1.32)"><rect x="0.7" y="5.5" width="12.5" height="5" fill="#fff" stroke="#12128c" stroke-width="1.5" /><path d="M3 5.500v5M10.800 5.500v5" fill="none" stroke="#12128c" stroke-width="0.8" /></g>
<g transform="translate(873.5,124.0) scale(1.32)"><path d="M.8 1l5 4.500h6.500l2.500 2.500-2.500 2.500h-6.500l-5 4.500z" fill="#fff" stroke="#12128c" stroke-width="1.4" /><path d="M7 6.500l1 3M9 6.500l1 3M11 6.500l1 3" fill="none" stroke="#12128c" stroke-width="0.9" /></g>
<g transform="translate(900.5,124.0) scale(1.32)"><path d="M.8 1.500l4 3.500h8.500v6h-8.500l-4 3.500z" fill="#fff" stroke="#12128c" stroke-width="1.5" /></g>
<g transform="translate(927.0,124.5) scale(1.32)"><circle cx="6.5" cy="8" r="6.2" fill="#d42020" stroke="#8a0c0c" stroke-width="0.8" /><circle cx="5" cy="5.5" r="3.5" fill="#f06060" /><circle cx="6.5" cy="8" r="6" fill="none" stroke="#a01010" stroke-width="0.6" /><path d="M3.800 5.300l5.400 5.400M9.200 5.300l-5.400 5.400" fill="none" stroke="#fff" stroke-width="2.1" /></g>
<g transform="translate(953.5,124.0) scale(1.32)"><path d="M1 3.500h3v-2h5v2h3v11h-3.500v-1.500h-4v1.500h-3.500z" fill="#fff" stroke="#12128c" stroke-width="1.4" /><path d="M6.500 1.500v11.500" fill="none" stroke="#12128c" stroke-width="1.4" /><path d="M1.500 7l3 3M8.500 7l3 3M1.500 10.500l2 2M9 10.500l2 2" fill="none" stroke="#12128c" stroke-width="0.8" /></g>
<g transform="translate(981.5,124.0) scale(1.32)"><path d="M.8 1h8.500v3.500h-2.300v6.500h2.300v3.500h-8.500v-3.500h2.300v-6.500h-2.300z" fill="#fff" stroke="#12128c" stroke-width="1.5" /></g>
<rect x="747.3" y="151.8" width="3" height="3" fill="#f4f4f4"/><rect x="746.0" y="150.5" width="3" height="3" fill="#1a1a1a"/><rect x="753.5999999999999" y="151.8" width="3" height="3" fill="#f4f4f4"/><rect x="752.3" y="150.5" width="3" height="3" fill="#1a1a1a"/>
<rect x="774.3" y="151.8" width="3" height="3" fill="#f4f4f4"/><rect x="773.0" y="150.5" width="3" height="3" fill="#1a1a1a"/><rect x="780.5999999999999" y="151.8" width="3" height="3" fill="#f4f4f4"/><rect x="779.3" y="150.5" width="3" height="3" fill="#1a1a1a"/>
<rect x="799.8" y="151.8" width="3" height="3" fill="#f4f4f4"/><rect x="798.5" y="150.5" width="3" height="3" fill="#1a1a1a"/><rect x="806.0999999999999" y="151.8" width="3" height="3" fill="#f4f4f4"/><rect x="804.8" y="150.5" width="3" height="3" fill="#1a1a1a"/>
<rect x="828.3" y="151.8" width="3" height="3" fill="#f4f4f4"/><rect x="827.0" y="150.5" width="3" height="3" fill="#1a1a1a"/><rect x="834.5999999999999" y="151.8" width="3" height="3" fill="#f4f4f4"/><rect x="833.3" y="150.5" width="3" height="3" fill="#1a1a1a"/>
<rect x="853.8" y="151.8" width="3" height="3" fill="#f4f4f4"/><rect x="852.5" y="150.5" width="3" height="3" fill="#1a1a1a"/><rect x="860.0999999999999" y="151.8" width="3" height="3" fill="#f4f4f4"/><rect x="858.8" y="150.5" width="3" height="3" fill="#1a1a1a"/>
<rect x="879.8" y="151.8" width="3" height="3" fill="#f4f4f4"/><rect x="878.5" y="150.5" width="3" height="3" fill="#1a1a1a"/><rect x="886.0999999999999" y="151.8" width="3" height="3" fill="#f4f4f4"/><rect x="884.8" y="150.5" width="3" height="3" fill="#1a1a1a"/>
<rect x="906.8" y="151.8" width="3" height="3" fill="#f4f4f4"/><rect x="905.5" y="150.5" width="3" height="3" fill="#1a1a1a"/><rect x="913.0999999999999" y="151.8" width="3" height="3" fill="#f4f4f4"/><rect x="911.8" y="150.5" width="3" height="3" fill="#1a1a1a"/>
<rect x="933.3" y="151.8" width="3" height="3" fill="#f4f4f4"/><rect x="932.0" y="150.5" width="3" height="3" fill="#1a1a1a"/><rect x="939.5999999999999" y="151.8" width="3" height="3" fill="#f4f4f4"/><rect x="938.3" y="150.5" width="3" height="3" fill="#1a1a1a"/>
<rect x="959.8" y="151.8" width="3" height="3" fill="#f4f4f4"/><rect x="958.5" y="150.5" width="3" height="3" fill="#1a1a1a"/><rect x="966.0999999999999" y="151.8" width="3" height="3" fill="#f4f4f4"/><rect x="964.8" y="150.5" width="3" height="3" fill="#1a1a1a"/>
<rect x="985.3" y="151.8" width="3" height="3" fill="#f4f4f4"/><rect x="984.0" y="150.5" width="3" height="3" fill="#1a1a1a"/><rect x="991.5999999999999" y="151.8" width="3" height="3" fill="#f4f4f4"/><rect x="990.3" y="150.5" width="3" height="3" fill="#1a1a1a"/>
<g transform="translate(1017.0,126.5) scale(1.5625)"><path d="M.8 9c0-4 4.500-4 4.500-.5v-1h10v5h-10v-1c0 3.500-4.500 3.500-4.500-.5z" fill="#b8ccf8" stroke="#1a28d8" stroke-width="1.4" /><path d="M3 5v10" fill="none" stroke="#1a28d8" stroke-width="1.2" /><path d="M6.500 10h8" fill="none" stroke="#1a28d8" stroke-width="1" stroke-dasharray="2 1"/><text x="9.5" y="4.5" font-size="6" fill="#141414" font-family="'Liberation Sans',sans-serif" font-weight="bold" >1</text><path d="M16 16v-3l-3 3z" fill="#777" /></g>
<g transform="translate(1051.5,126.5) scale(1.5625)"><path d="M.8 9c0-4 4.500-4 4.500-.5v-1h10v5h-10v-1c0 3.500-4.500 3.500-4.500-.5z" fill="#b8ccf8" stroke="#1a28d8" stroke-width="1.4" /><path d="M3 5v10" fill="none" stroke="#1a28d8" stroke-width="1.2" /><path d="M6.500 10h8" fill="none" stroke="#1a28d8" stroke-width="1" stroke-dasharray="2 1"/><text x="9.5" y="4.5" font-size="6" fill="#141414" font-family="'Liberation Sans',sans-serif" font-weight="bold" >3</text><path d="M16 16v-3l-3 3z" fill="#777" /></g>
<g transform="translate(1088.0,126.5) scale(1.5625)"><path d="M.8 4.500h3.500v7h-3.500zM4.300 6.500h6v3h-6zM10.300 3.500h2v9h-2zM12.300 4.500c3.500 0 3.500 7 0 7z" fill="#88a8f8" stroke="#1a28d8" stroke-width="1.3" /><path d="M.8 8h3.500M5.500 6.500v3M7.500 6.500v3M9 6.500v3" fill="none" stroke="#1a28d8" stroke-width="0.9" /><circle cx="2.5" cy="6" r="0.7" fill="#1a28d8" /><circle cx="2.5" cy="10" r="0.7" fill="#1a28d8" /></g>
</svg>
<div style="left:4px;top:159px;width:38px;height:950px;background:linear-gradient(to right,#c6c9cf 0%,#c2c5cb 35%,#b3b6bd 72%,#a1a4ac 94%,#90939b 100%);border-radius:9px 9px 0 0"></div>
<div style="left:4px;top:1109px;width:38px;height:20px;background:linear-gradient(to right,#5c5c60 0%,#77777c 45%,#a2a2a8 100%);border-radius:0 0 7px 7px"></div>
<div style="left:13.3px;top:167.3px;width:3px;height:3px;background:#f4f4f4"></div><div style="left:12.0px;top:166px;width:3px;height:3px;background:#1a1a1a"></div><div style="left:19.6px;top:167.3px;width:3px;height:3px;background:#f4f4f4"></div><div style="left:18.3px;top:166px;width:3px;height:3px;background:#1a1a1a"></div><div style="left:25.900000000000002px;top:167.3px;width:3px;height:3px;background:#f4f4f4"></div><div style="left:24.6px;top:166px;width:3px;height:3px;background:#1a1a1a"></div><div style="left:32.199999999999996px;top:167.3px;width:3px;height:3px;background:#f4f4f4"></div><div style="left:30.9px;top:166px;width:3px;height:3px;background:#1a1a1a"></div>
<svg style="left:12px;top:1115px" width="8" height="12" viewBox="0 0 8 12"><path d="M1 1h5l-2.500 3zM1 6h5l-2.500 3z" fill="#fff" transform="translate(1,1)"/><path d="M1 1h5l-2.500 3zM1 6h5l-2.500 3z" fill="#111"/></svg>
<svg style="left:26px;top:1114px" width="13" height="12" viewBox="0 0 13 12"><g transform="translate(1.200,1.200)" fill="#fff"><rect x="0" y="0" width="2" height="9"/><path d="M4 0l5 4.500-5 4.500z"/></g><rect x="0" y="0" width="2" height="9" fill="#111"/><path d="M4 0l5 4.500-5 4.500z" fill="#111"/></svg>
<div style="left:45px;top:159px;width:38px;height:894px;background:linear-gradient(to right,#c6c9cf 0%,#c2c5cb 35%,#b3b6bd 72%,#a1a4ac 94%,#90939b 100%);border-radius:9px 9px 0 0"></div>
<div style="left:45px;top:1053px;width:38px;height:18px;background:linear-gradient(to right,#5c5c60 0%,#77777c 45%,#a2a2a8 100%);border-radius:0 0 7px 7px"></div>
<div style="left:54.3px;top:167.3px;width:3px;height:3px;background:#f4f4f4"></div><div style="left:53.0px;top:166px;width:3px;height:3px;background:#1a1a1a"></div><div style="left:60.599999999999994px;top:167.3px;width:3px;height:3px;background:#f4f4f4"></div><div style="left:59.3px;top:166px;width:3px;height:3px;background:#1a1a1a"></div><div style="left:66.89999999999999px;top:167.3px;width:3px;height:3px;background:#f4f4f4"></div><div style="left:65.6px;top:166px;width:3px;height:3px;background:#1a1a1a"></div><div style="left:73.2px;top:167.3px;width:3px;height:3px;background:#f4f4f4"></div><div style="left:71.9px;top:166px;width:3px;height:3px;background:#1a1a1a"></div>
<svg style="left:67px;top:1058px" width="13" height="12" viewBox="0 0 13 12"><g transform="translate(1.200,1.200)" fill="#fff"><rect x="0" y="0" width="2" height="9"/><path d="M4 0l5 4.500-5 4.500z"/></g><rect x="0" y="0" width="2" height="9" fill="#111"/><path d="M4 0l5 4.500-5 4.500z" fill="#111"/></svg>
<div style="left:49.3px;top:178.79999999999998px;width:2.6px;height:2.6px;background:#f6f6f6"></div>
<div style="left:48.2px;top:177.6px;width:2.6px;height:2.6px;background:#1c1c1c"></div>
<div style="left:49.3px;top:183.04999999999998px;width:2.6px;height:2.6px;background:#f6f6f6"></div>
<div style="left:48.2px;top:181.85px;width:2.6px;height:2.6px;background:#1c1c1c"></div>
<div style="left:49.3px;top:187.29999999999998px;width:2.6px;height:2.6px;background:#f6f6f6"></div>
<div style="left:48.2px;top:186.1px;width:2.6px;height:2.6px;background:#1c1c1c"></div>
<div style="left:49.3px;top:191.54999999999998px;width:2.6px;height:2.6px;background:#f6f6f6"></div>
<div style="left:48.2px;top:190.35px;width:2.6px;height:2.6px;background:#1c1c1c"></div>
<div style="left:49.3px;top:206.79999999999998px;width:2.6px;height:2.6px;background:#f6f6f6"></div>
<div style="left:48.2px;top:205.6px;width:2.6px;height:2.6px;background:#1c1c1c"></div>
<div style="left:49.3px;top:211.04999999999998px;width:2.6px;height:2.6px;background:#f6f6f6"></div>
<div style="left:48.2px;top:209.85px;width:2.6px;height:2.6px;background:#1c1c1c"></div>
<div style="left:49.3px;top:215.29999999999998px;width:2.6px;height:2.6px;background:#f6f6f6"></div>
<div style="left:48.2px;top:214.1px;width:2.6px;height:2.6px;background:#1c1c1c"></div>
<div style="left:49.3px;top:219.54999999999998px;width:2.6px;height:2.6px;background:#f6f6f6"></div>
<div style="left:48.2px;top:218.35px;width:2.6px;height:2.6px;background:#1c1c1c"></div>
<div style="left:49.3px;top:233.79999999999998px;width:2.6px;height:2.6px;background:#f6f6f6"></div>
<div style="left:48.2px;top:232.6px;width:2.6px;height:2.6px;background:#1c1c1c"></div>
<div style="left:49.3px;top:238.04999999999998px;width:2.6px;height:2.6px;background:#f6f6f6"></div>
<div style="left:48.2px;top:236.85px;width:2.6px;height:2.6px;background:#1c1c1c"></div>
<div style="left:49.3px;top:242.29999999999998px;width:2.6px;height:2.6px;background:#f6f6f6"></div>
<div style="left:48.2px;top:241.1px;width:2.6px;height:2.6px;background:#1c1c1c"></div>
<div style="left:49.3px;top:246.54999999999998px;width:2.6px;height:2.6px;background:#f6f6f6"></div>
<div style="left:48.2px;top:245.35px;width:2.6px;height:2.6px;background:#1c1c1c"></div>
<div style="left:49.3px;top:260.3px;width:2.6px;height:2.6px;background:#f6f6f6"></div>
<div style="left:48.2px;top:259.1px;width:2.6px;height:2.6px;background:#1c1c1c"></div>
<div style="left:49.3px;top:264.55px;width:2.6px;height:2.6px;background:#f6f6f6"></div>
<div style="left:48.2px;top:263.35px;width:2.6px;height:2.6px;background:#1c1c1c"></div>
<div style="left:49.3px;top:268.8px;width:2.6px;height:2.6px;background:#f6f6f6"></div>
<div style="left:48.2px;top:267.6px;width:2.6px;height:2.6px;background:#1c1c1c"></div>
<div style="left:49.3px;top:273.05px;width:2.6px;height:2.6px;background:#f6f6f6"></div>
<div style="left:48.2px;top:271.85px;width:2.6px;height:2.6px;background:#1c1c1c"></div>
<div style="left:49.3px;top:286.8px;width:2.6px;height:2.6px;background:#f6f6f6"></div>
<div style="left:48.2px;top:285.6px;width:2.6px;height:2.6px;background:#1c1c1c"></div>
<div style="left:49.3px;top:291.05px;width:2.6px;height:2.6px;background:#f6f6f6"></div>
<div style="left:48.2px;top:289.85px;width:2.6px;height:2.6px;background:#1c1c1c"></div>
<div style="left:49.3px;top:295.3px;width:2.6px;height:2.6px;background:#f6f6f6"></div>
<div style="left:48.2px;top:294.1px;width:2.6px;height:2.6px;background:#1c1c1c"></div>
<div style="left:49.3px;top:299.55px;width:2.6px;height:2.6px;background:#f6f6f6"></div>
<div style="left:48.2px;top:298.35px;width:2.6px;height:2.6px;background:#1c1c1c"></div>
<div style="left:49.3px;top:311.8px;width:2.6px;height:2.6px;background:#f6f6f6"></div>
<div style="left:48.2px;top:310.6px;width:2.6px;height:2.6px;background:#1c1c1c"></div>
<div style="left:49.3px;top:316.05px;width:2.6px;height:2.6px;background:#f6f6f6"></div>
<div style="left:48.2px;top:314.85px;width:2.6px;height:2.6px;background:#1c1c1c"></div>
<div style="left:49.3px;top:320.3px;width:2.6px;height:2.6px;background:#f6f6f6"></div>
<div style="left:48.2px;top:319.1px;width:2.6px;height:2.6px;background:#1c1c1c"></div>
<div style="left:49.3px;top:324.55px;width:2.6px;height:2.6px;background:#f6f6f6"></div>
<div style="left:48.2px;top:323.35px;width:2.6px;height:2.6px;background:#1c1c1c"></div>
<div style="left:49.3px;top:338.8px;width:2.6px;height:2.6px;background:#f6f6f6"></div>
<div style="left:48.2px;top:337.6px;width:2.6px;height:2.6px;background:#1c1c1c"></div>
<div style="left:49.3px;top:343.05px;width:2.6px;height:2.6px;background:#f6f6f6"></div>
<div style="left:48.2px;top:341.85px;width:2.6px;height:2.6px;background:#1c1c1c"></div>
<div style="left:49.3px;top:347.3px;width:2.6px;height:2.6px;background:#f6f6f6"></div>
<div style="left:48.2px;top:346.1px;width:2.6px;height:2.6px;background:#1c1c1c"></div>
<div style="left:49.3px;top:351.55px;width:2.6px;height:2.6px;background:#f6f6f6"></div>
<div style="left:48.2px;top:350.35px;width:2.6px;height:2.6px;background:#1c1c1c"></div>
<div style="left:49.3px;top:365.3px;width:2.6px;height:2.6px;background:#f6f6f6"></div>
<div style="left:48.2px;top:364.1px;width:2.6px;height:2.6px;background:#1c1c1c"></div>
<div style="left:49.3px;top:369.55px;width:2.6px;height:2.6px;background:#f6f6f6"></div>
<div style="left:48.2px;top:368.35px;width:2.6px;height:2.6px;background:#1c1c1c"></div>
<div style="left:49.3px;top:373.8px;width:2.6px;height:2.6px;background:#f6f6f6"></div>
<div style="left:48.2px;top:372.6px;width:2.6px;height:2.6px;background:#1c1c1c"></div>
<div style="left:49.3px;top:378.05px;width:2.6px;height:2.6px;background:#f6f6f6"></div>
<div style="left:48.2px;top:376.85px;width:2.6px;height:2.6px;background:#1c1c1c"></div>
<div style="left:49.3px;top:391.8px;width:2.6px;height:2.6px;background:#f6f6f6"></div>
<div style="left:48.2px;top:390.6px;width:2.6px;height:2.6px;background:#1c1c1c"></div>
<div style="left:49.3px;top:396.05px;width:2.6px;height:2.6px;background:#f6f6f6"></div>
<div style="left:48.2px;top:394.85px;width:2.6px;height:2.6px;background:#1c1c1c"></div>
<div style="left:49.3px;top:400.3px;width:2.6px;height:2.6px;background:#f6f6f6"></div>
<div style="left:48.2px;top:399.1px;width:2.6px;height:2.6px;background:#1c1c1c"></div>
<div style="left:49.3px;top:404.55px;width:2.6px;height:2.6px;background:#f6f6f6"></div>
<div style="left:48.2px;top:403.35px;width:2.6px;height:2.6px;background:#1c1c1c"></div>
<div style="left:49.3px;top:418.8px;width:2.6px;height:2.6px;background:#f6f6f6"></div>
<div style="left:48.2px;top:417.6px;width:2.6px;height:2.6px;background:#1c1c1c"></div>
<div style="left:49.3px;top:423.05px;width:2.6px;height:2.6px;background:#f6f6f6"></div>
<div style="left:48.2px;top:421.85px;width:2.6px;height:2.6px;background:#1c1c1c"></div>
<div style="left:49.3px;top:427.3px;width:2.6px;height:2.6px;background:#f6f6f6"></div>
<div style="left:48.2px;top:426.1px;width:2.6px;height:2.6px;background:#1c1c1c"></div>
<div style="left:49.3px;top:431.55px;width:2.6px;height:2.6px;background:#f6f6f6"></div>
<div style="left:48.2px;top:430.35px;width:2.6px;height:2.6px;background:#1c1c1c"></div>
<div style="left:49.3px;top:445.3px;width:2.6px;height:2.6px;background:#f6f6f6"></div>
<div style="left:48.2px;top:444.1px;width:2.6px;height:2.6px;background:#1c1c1c"></div>
<div style="left:49.3px;top:449.55px;width:2.6px;height:2.6px;background:#f6f6f6"></div>
<div style="left:48.2px;top:448.35px;width:2.6px;height:2.6px;background:#1c1c1c"></div>
<div style="left:49.3px;top:453.8px;width:2.6px;height:2.6px;background:#f6f6f6"></div>
<div style="left:48.2px;top:452.6px;width:2.6px;height:2.6px;background:#1c1c1c"></div>
<div style="left:49.3px;top:458.05px;width:2.6px;height:2.6px;background:#f6f6f6"></div>
<div style="left:48.2px;top:456.85px;width:2.6px;height:2.6px;background:#1c1c1c"></div>
<div style="left:49.3px;top:473.8px;width:2.6px;height:2.6px;background:#f6f6f6"></div>
<div style="left:48.2px;top:472.6px;width:2.6px;height:2.6px;background:#1c1c1c"></div>
<div style="left:49.3px;top:478.05px;width:2.6px;height:2.6px;background:#f6f6f6"></div>
<div style="left:48.2px;top:476.85px;width:2.6px;height:2.6px;background:#1c1c1c"></div>
<div style="left:49.3px;top:482.3px;width:2.6px;height:2.6px;background:#f6f6f6"></div>
<div style="left:48.2px;top:481.1px;width:2.6px;height:2.6px;background:#1c1c1c"></div>
<div style="left:49.3px;top:486.55px;width:2.6px;height:2.6px;background:#f6f6f6"></div>
<div style="left:48.2px;top:485.35px;width:2.6px;height:2.6px;background:#1c1c1c"></div>
<div style="left:49.3px;top:498.8px;width:2.6px;height:2.6px;background:#f6f6f6"></div>
<div style="left:48.2px;top:497.6px;width:2.6px;height:2.6px;background:#1c1c1c"></div>
<div style="left:49.3px;top:503.05px;width:2.6px;height:2.6px;background:#f6f6f6"></div>
<div style="left:48.2px;top:501.85px;width:2.6px;height:2.6px;background:#1c1c1c"></div>
<div style="left:49.3px;top:507.3px;width:2.6px;height:2.6px;background:#f6f6f6"></div>
<div style="left:48.2px;top:506.1px;width:2.6px;height:2.6px;background:#1c1c1c"></div>
<div style="left:49.3px;top:511.55px;width:2.6px;height:2.6px;background:#f6f6f6"></div>
<div style="left:48.2px;top:510.35px;width:2.6px;height:2.6px;background:#1c1c1c"></div>
<div style="left:1520px;top:159px;width:39px;height:659px;background:linear-gradient(to right,#c6c9cf 0%,#c2c5cb 35%,#b3b6bd 72%,#a1a4ac 94%,#90939b 100%);border-radius:9px 9px 0 0"></div>
<div style="left:1520px;top:818px;width:39px;height:20px;background:linear-gradient(to right,#5c5c60 0%,#77777c 45%,#a2a2a8 100%);border-radius:0 0 7px 7px"></div>
<div style="left:1529.3px;top:167.3px;width:3px;height:3px;background:#f4f4f4"></div><div style="left:1528.0px;top:166px;width:3px;height:3px;background:#1a1a1a"></div><div style="left:1535.6px;top:167.3px;width:3px;height:3px;background:#f4f4f4"></div><div style="left:1534.3px;top:166px;width:3px;height:3px;background:#1a1a1a"></div><div style="left:1541.8999999999999px;top:167.3px;width:3px;height:3px;background:#f4f4f4"></div><div style="left:1540.6px;top:166px;width:3px;height:3px;background:#1a1a1a"></div><div style="left:1548.2px;top:167.3px;width:3px;height:3px;background:#f4f4f4"></div><div style="left:1546.9px;top:166px;width:3px;height:3px;background:#1a1a1a"></div>
<svg style="left:1543px;top:823px" width="13" height="12" viewBox="0 0 13 12"><g transform="translate(1.200,1.200)" fill="#fff"><rect x="0" y="0" width="2" height="9"/><path d="M4 0l5 4.500-5 4.500z"/></g><rect x="0" y="0" width="2" height="9" fill="#111"/><path d="M4 0l5 4.500-5 4.500z" fill="#111"/></svg>
<div style="left:1520px;top:838px;width:39px;height:271px;background:linear-gradient(to right,#c6c9cf 0%,#c2c5cb 35%,#b3b6bd 72%,#a1a4ac 94%,#90939b 100%);border-radius:0 0 0 0"></div>
<div style="left:1520px;top:1109px;width:39px;height:20px;background:linear-gradient(to right,#5c5c60 0%,#77777c 45%,#a2a2a8 100%);border-radius:0 0 7px 7px"></div>
<div style="left:1529.3px;top:846.3px;width:3px;height:3px;background:#f4f4f4"></div><div style="left:1528.0px;top:845px;width:3px;height:3px;background:#1a1a1a"></div><div style="left:1535.6px;top:846.3px;width:3px;height:3px;background:#f4f4f4"></div><div style="left:1534.3px;top:845px;width:3px;height:3px;background:#1a1a1a"></div><div style="left:1541.8999999999999px;top:846.3px;width:3px;height:3px;background:#f4f4f4"></div><div style="left:1540.6px;top:845px;width:3px;height:3px;background:#1a1a1a"></div><div style="left:1548.2px;top:846.3px;width:3px;height:3px;background:#f4f4f4"></div><div style="left:1546.9px;top:845px;width:3px;height:3px;background:#1a1a1a"></div>
<svg style="left:1528px;top:1115px" width="8" height="12" viewBox="0 0 8 12"><path d="M1 1h5l-2.500 3zM1 6h5l-2.500 3z" fill="#fff" transform="translate(1,1)"/><path d="M1 1h5l-2.500 3zM1 6h5l-2.500 3z" fill="#111"/></svg>
<svg style="left:1543px;top:1114px" width="13" height="12" viewBox="0 0 13 12"><g transform="translate(1.200,1.200)" fill="#fff"><rect x="0" y="0" width="2" height="9"/><path d="M4 0l5 4.500-5 4.500z"/></g><rect x="0" y="0" width="2" height="9" fill="#111"/><path d="M4 0l5 4.500-5 4.500z" fill="#111"/></svg>
<div style="left:1561px;top:159px;width:39px;height:950px;background:linear-gradient(to right,#c6c9cf 0%,#c2c5cb 35%,#b3b6bd 72%,#a1a4ac 94%,#90939b 100%);border-radius:9px 9px 0 0"></div>
<div style="left:1561px;top:1109px;width:39px;height:20px;background:linear-gradient(to right,#5c5c60 0%,#77777c 45%,#a2a2a8 100%);border-radius:0 0 7px 7px"></div>
<div style="left:1570.3px;top:167.3px;width:3px;height:3px;background:#f4f4f4"></div><div style="left:1569.0px;top:166px;width:3px;height:3px;background:#1a1a1a"></div><div style="left:1576.6px;top:167.3px;width:3px;height:3px;background:#f4f4f4"></div><div style="left:1575.3px;top:166px;width:3px;height:3px;background:#1a1a1a"></div><div style="left:1582.8999999999999px;top:167.3px;width:3px;height:3px;background:#f4f4f4"></div><div style="left:1581.6px;top:166px;width:3px;height:3px;background:#1a1a1a"></div><div style="left:1589.2px;top:167.3px;width:3px;height:3px;background:#f4f4f4"></div><div style="left:1587.9px;top:166px;width:3px;height:3px;background:#1a1a1a"></div>
<svg style="left:1569px;top:1115px" width="8" height="12" viewBox="0 0 8 12"><path d="M1 1h5l-2.500 3zM1 6h5l-2.500 3z" fill="#fff" transform="translate(1,1)"/><path d="M1 1h5l-2.500 3zM1 6h5l-2.500 3z" fill="#111"/></svg>
<svg style="left:1584px;top:1114px" width="13" height="12" viewBox="0 0 13 12"><g transform="translate(1.200,1.200)" fill="#fff"><rect x="0" y="0" width="2" height="9"/><path d="M4 0l5 4.500-5 4.500z"/></g><rect x="0" y="0" width="2" height="9" fill="#111"/><path d="M4 0l5 4.500-5 4.500z" fill="#111"/></svg>
<svg style="left:0;top:0" width="1600" height="1200" viewBox="0 0 1600 1200">
<defs><linearGradient id="selg" x1="0" y1="0" x2="0" y2="1"><stop offset="0" stop-color="#fbd9a0"/><stop offset="0.5" stop-color="#f8c070"/><stop offset="1" stop-color="#fbe2b8"/></linearGradient></defs>
<g transform="translate(10.5,174.5) scale(1.5625)"><g transform="translate(.7,.7)" opacity=".9"><text x="0" y="8" font-size="9" fill="#e6e7ea" font-family="'Liberation Serif',serif" >A</text><text x="8" y="15" font-size="9" fill="#e6e7ea" font-family="'Liberation Serif',serif" >A</text><path d="M6 8l4-5" fill="none" stroke="#e6e7ea" stroke-width="0.8" /></g><text x="0" y="8" font-size="9" fill="#96989e" font-family="'Liberation Serif',serif" >A</text><text x="8" y="15" font-size="9" fill="#96989e" font-family="'Liberation Serif',serif" >A</text><path d="M6 8l4-5" fill="none" stroke="#96989e" stroke-width="0.8" /></g>
<g transform="translate(10.5,213.5) scale(1.5625)"><g transform="translate(.7,.7)" opacity=".9"><text x="1" y="15" font-size="19" fill="#e6e7ea" font-family="'Liberation Serif',serif" >A</text></g><text x="1" y="15" font-size="19" fill="#96989e" font-family="'Liberation Serif',serif" >A</text></g>
<g transform="translate(10.5,248.5) scale(1.5625)"><g transform="translate(.7,.7)" opacity=".9"><text x="3" y="15" font-size="17" fill="#e6e7ea" font-family="'Liberation Serif',serif" >A</text><path d="M1 3h7M2.500 3v11M1 14h3M2.500 8.500h4" fill="none" stroke="#e6e7ea" stroke-width="1.3" /><path d="M0 5l2 1.500-2 1.500 2 1.500-2 1.500" fill="none" stroke="#e6e7ea" stroke-width="0.7" /></g><text x="3" y="15" font-size="17" fill="#96989e" font-family="'Liberation Serif',serif" >A</text><path d="M1 3h7M2.500 3v11M1 14h3M2.500 8.500h4" fill="none" stroke="#96989e" stroke-width="1.3" /><path d="M0 5l2 1.500-2 1.500 2 1.500-2 1.500" fill="none" stroke="#96989e" stroke-width="0.7" /></g>
<g transform="translate(10.5,283.5) scale(1.5625)"><g transform="translate(.7,.7)" opacity=".9"><path d="M1 8l7-6.500 7 6.500M2.500 7v5h11v-5M.5 12.500h15M1 10.500v4M15 10.500v4" fill="none" stroke="#e6e7ea" stroke-width="1.2" /></g><path d="M1 8l7-6.500 7 6.500M2.500 7v5h11v-5M.5 12.500h15M1 10.500v4M15 10.500v4" fill="none" stroke="#96989e" stroke-width="1.2" /></g>
<g transform="translate(10.5,315.0) scale(1.5625)"><g transform="translate(.7,.7)" opacity=".9"><path d="M5 1h10M5 6h10M5 11h10M5 15h10M1.500 3v11M0 8.500h3" fill="none" stroke="#e6e7ea" stroke-width="1.3" /></g><path d="M5 1h10M5 6h10M5 11h10M5 15h10M1.500 3v11M0 8.500h3" fill="none" stroke="#96989e" stroke-width="1.3" /></g>
<g transform="translate(10.5,352.5) scale(1.5625)"><g transform="translate(.7,.7)" opacity=".9"><path d="M1.500 1h13v4h-2v-1.500h-3v10h2v2h-7v-2h2v-10h-3v1.500h-2z" fill="#e6e7ea" stroke="#e6e7ea" stroke-width="1.3" /></g><path d="M1.500 1h13v4h-2v-1.500h-3v10h2v2h-7v-2h2v-10h-3v1.500h-2z" fill="#e6e7ea" stroke="#96989e" stroke-width="1.3" /></g>
<g transform="translate(10.5,387.5) scale(1.5625)"><rect x="0.5" y="0.5" width="15" height="15" fill="#e9eaed" stroke="#c4c6ca" stroke-width="0.8" /><path d="M2 3h12M2 6h12M2 9h12M2 12h12" fill="none" stroke="#bfc1c6" stroke-width="1.3" /><path d="M5 1v14" fill="none" stroke="#d4d5d9" stroke-width="1" /></g>
<g transform="translate(10.5,421.5) scale(1.5625)"><g transform="translate(.7,.7)" opacity=".9"><path d="M0 8l1.500-1 2.500 7 3-13" fill="none" stroke="#e6e7ea" stroke-width="1.2" /><text x="6.5" y="13" font-size="8" fill="#e6e7ea" font-family="'Liberation Sans',sans-serif" >(v)</text></g><path d="M0 8l1.500-1 2.500 7 3-13" fill="none" stroke="#96989e" stroke-width="1.2" /><text x="6.5" y="13" font-size="8" fill="#96989e" font-family="'Liberation Sans',sans-serif" >(v)</text></g>
<rect x="11" y="454.4" width="24" height="1.6" fill="#74767c"/><rect x="11" y="456.0" width="24" height="1.6" fill="#ecedf0"/>
<g transform="translate(10.5,468.5) scale(1.5625)"><g transform="translate(.7,.7)" opacity=".9"><path d="M1 1h14M1 4h9M1 7h9M1 10h7M1 13h7" fill="none" stroke="#e6e7ea" stroke-width="1.2" /><path d="M11 4h4M12 4v10M14 4v10" fill="none" stroke="#e6e7ea" stroke-width="1.1" /></g><path d="M1 1h14M1 4h9M1 7h9M1 10h7M1 13h7" fill="none" stroke="#96989e" stroke-width="1.2" /><path d="M11 4h4M12 4v10M14 4v10" fill="none" stroke="#96989e" stroke-width="1.1" /></g>
<g transform="translate(10.5,500.0) scale(1.5625)"><g transform="translate(.7,.7)" opacity=".9"><path d="M4 2v12M8.500 1v14M13 3v10" fill="none" stroke="#e6e7ea" stroke-width="1.2" /><path d="M2.500 5l1.500-3 1.500 3M7 4l1.500-3 1.500 3M11.500 6l1.500-3 1.500 3" fill="none" stroke="#e6e7ea" stroke-width="1" /><path d="M0 12.500h6" fill="none" stroke="#e6e7ea" stroke-width="1" /><circle cx="2.5" cy="13" r="1.6" fill="none" stroke="#e6e7ea" stroke-width="0.9" /></g><path d="M4 2v12M8.500 1v14M13 3v10" fill="none" stroke="#96989e" stroke-width="1.2" /><path d="M2.500 5l1.500-3 1.500 3M7 4l1.500-3 1.500 3M11.500 6l1.500-3 1.500 3" fill="none" stroke="#96989e" stroke-width="1" /><path d="M0 12.500h6" fill="none" stroke="#96989e" stroke-width="1" /><circle cx="2.5" cy="13" r="1.6" fill="none" stroke="#96989e" stroke-width="0.9" /></g>
<g transform="translate(10.5,535.0) scale(1.5625)"><g transform="translate(.7,.7)" opacity=".9"><text x="0" y="15" font-size="20" fill="#e6e7ea" font-family="'Liberation Sans',sans-serif" font-style="italic">A</text></g><text x="0" y="15" font-size="20" fill="#96989e" font-family="'Liberation Sans',sans-serif" font-style="italic">A</text></g>
<g transform="translate(10.5,570.0) scale(1.5625)"><g transform="translate(.7,.7)" opacity=".9"><text x="0" y="15" font-size="20" fill="#e6e7ea" font-family="'Liberation Sans',sans-serif" font-weight="bold">A</text></g><text x="0" y="15" font-size="20" fill="#96989e" font-family="'Liberation Sans',sans-serif" font-weight="bold">A</text></g>
<g transform="translate(10.5,602.5) scale(1.5625)"><g transform="translate(.7,.7)" opacity=".9"><text x="1" y="13" font-size="17" fill="#e6e7ea" font-family="'Liberation Sans',sans-serif" >A</text><path d="M1 15h13" fill="none" stroke="#e6e7ea" stroke-width="1.2" /></g><text x="1" y="13" font-size="17" fill="#96989e" font-family="'Liberation Sans',sans-serif" >A</text><path d="M1 15h13" fill="none" stroke="#96989e" stroke-width="1.2" /></g>
<g transform="translate(10.5,637.5) scale(1.5625)"><g transform="translate(.7,.7)" opacity=".9"><path d="M1 3c2-2 3 1 5-.5M1 6c2-2 3 1 5-.5M10 1l-7 14M2 9h5l-2.500 5z" fill="none" stroke="#e6e7ea" stroke-width="1.1" /><circle cx="11.5" cy="11.5" r="2.5" fill="none" stroke="#e6e7ea" stroke-width="1.1" /><path d="M8.500 15h6" fill="none" stroke="#e6e7ea" stroke-width="1" /></g><path d="M1 3c2-2 3 1 5-.5M1 6c2-2 3 1 5-.5M10 1l-7 14M2 9h5l-2.500 5z" fill="none" stroke="#96989e" stroke-width="1.1" /><circle cx="11.5" cy="11.5" r="2.5" fill="none" stroke="#96989e" stroke-width="1.1" /><path d="M8.500 15h6" fill="none" stroke="#96989e" stroke-width="1" /></g>
<g transform="translate(10.5,673.5) scale(1.5625)"><g transform="translate(.7,.7)" opacity=".9"><text x="0" y="15" font-size="20" fill="#e6e7ea" font-family="'Liberation Sans',sans-serif" >Ω</text></g><text x="0" y="15" font-size="20" fill="#96989e" font-family="'Liberation Sans',sans-serif" >Ω</text></g>
<rect x="11" y="715.9" width="24" height="1.6" fill="#74767c"/><rect x="11" y="717.5" width="24" height="1.6" fill="#ecedf0"/>
<g transform="translate(10.5,741.5) scale(1.5625)"><g transform="translate(.7,.7)" opacity=".9"><text x="0" y="10" font-size="10" fill="#e6e7ea" font-family="'Liberation Sans',sans-serif" >N</text></g><text x="0" y="10" font-size="10" fill="#96989e" font-family="'Liberation Sans',sans-serif" >N</text><path d="M8 3h7M8 6h7M8 9h7" fill="none" stroke="#b8babf" stroke-width="1" /></g>
<g transform="translate(10.5,778.5) scale(1.5625)"><rect x="0.5" y="3" width="13" height="11" fill="#e4e5e8" stroke="#c9cbd0" stroke-width="0.8" /><circle cx="5" cy="8" r="2.5" fill="none" stroke="#b0b2b8" stroke-width="1" /><path d="M4 12c2-2 4-2 6 0" fill="none" stroke="#b0b2b8" stroke-width="1" /><path d="M9 8l6-7M11 9l4-5M12 10.500l3-3" fill="none" stroke="#a4a6ac" stroke-width="0.9" /></g>
<rect x="11" y="809.4" width="24" height="1.6" fill="#74767c"/><rect x="11" y="811.0" width="24" height="1.6" fill="#ecedf0"/>
<g transform="translate(10.5,826.5) scale(1.5625)"><rect x="2" y="1" width="11" height="13" fill="#b4b2ae" stroke="none" stroke-width="1" /><rect x="2" y="1" width="11" height="6" fill="#aeaeb0" /></g>
<g transform="translate(10.5,851.5) scale(1.5625)"><path d="M6 4l4 4-4 4z" fill="#a2a4aa" /></g>
<rect x="11" y="877.4" width="24" height="1.6" fill="#74767c"/><rect x="11" y="879.0" width="24" height="1.6" fill="#ecedf0"/>
<g transform="translate(10.5,887.5) scale(1.5625)"><g transform="translate(.7,.7)" opacity=".9"><path d="M1 2h13M1 4.500h10M1 7h13M1 9.500h10M1 12h13M1 14.500h9" fill="none" stroke="#e6e7ea" stroke-width="1" /></g><path d="M1 2h13M1 4.500h10M1 7h13M1 9.500h10M1 12h13M1 14.500h9" fill="none" stroke="#96989e" stroke-width="1" /></g>
<g transform="translate(10.5,923.5) scale(1.5625)"><g transform="translate(.7,.7)" opacity=".9"><path d="M1 2h13M3 4.500h9M1 7h13M3 9.500h9M1 12h13M3 14.500h9" fill="none" stroke="#e6e7ea" stroke-width="1" /></g><path d="M1 2h13M3 4.500h9M1 7h13M3 9.500h9M1 12h13M3 14.500h9" fill="none" stroke="#96989e" stroke-width="1" /></g>
<g transform="translate(10.5,958.5) scale(1.5625)"><g transform="translate(.7,.7)" opacity=".9"><path d="M1 2h13M4 4.500h10M1 7h13M4 9.500h10M1 12h13M5 14.500h9" fill="none" stroke="#e6e7ea" stroke-width="1" /></g><path d="M1 2h13M4 4.500h10M1 7h13M4 9.500h10M1 12h13M5 14.500h9" fill="none" stroke="#96989e" stroke-width="1" /></g>
<g transform="translate(10.5,992.5) scale(1.5625)"><g transform="translate(.7,.7)" opacity=".9"><path d="M1 2h13M1 4.500h13M1 7h13M1 9.500h13M1 12h13M1 14.500h13" fill="none" stroke="#e6e7ea" stroke-width="1" /></g><path d="M1 2h13M1 4.500h13M1 7h13M1 9.500h13M1 12h13M1 14.500h13" fill="none" stroke="#96989e" stroke-width="1" /></g>
<rect x="11" y="1028.4" width="24" height="1.6" fill="#74767c"/><rect x="11" y="1030.0" width="24" height="1.6" fill="#ecedf0"/>
<g transform="translate(10.5,1038.5) scale(1.5625)"><g transform="translate(.7,.7)" opacity=".9"><path d="M1 3c2 1 0 2 2 3s0 2 2 3-1 2 1 3" fill="none" stroke="#e6e7ea" stroke-width="0.8" /><path d="M6 3h8M6 6.500h8M6 10h8M6 13h8" fill="none" stroke="#e6e7ea" stroke-width="1.1" /></g><path d="M1 3c2 1 0 2 2 3s0 2 2 3-1 2 1 3" fill="none" stroke="#96989e" stroke-width="0.8" /><path d="M6 3h8M6 6.500h8M6 10h8M6 13h8" fill="none" stroke="#96989e" stroke-width="1.1" /></g>
<rect x="11" y="1074.4" width="24" height="1.6" fill="#74767c"/><rect x="11" y="1076.0" width="24" height="1.6" fill="#ecedf0"/>
<g transform="translate(56.2,175.8) scale(1.28125)"><path d="M1 6l4-3h9l-4 3z" fill="#f8e040" stroke="#141414" stroke-width="0.9" /><path d="M5 3l3-2h7l-1 2z" fill="#f8a030" stroke="#141414" stroke-width="0.8" /><path d="M1 6h9v4h-9z" fill="#f8e040" stroke="#141414" stroke-width="0.9" /><path d="M10 6l4-3v4l-4 3z" fill="#f0f0f0" stroke="#141414" stroke-width="0.8" /><path d="M1 10h9v5h-9z" fill="#30c8f8" stroke="#0c0c86" stroke-width="1" /><path d="M10 10l5.500-4.500v5l-5.500 4.500z" fill="#1a2cc8" stroke="#0c0c86" stroke-width="1" /><path d="M10 10l5-4" fill="none" stroke="#fff" stroke-width="1" /></g>
<rect x="53.0" y="200" width="27" height="28" rx="1.500" fill="#e8ecf6"/>
<g transform="translate(56.2,203.8) scale(1.28125)"><path d="M2 4l8-3 5 2v9l-5 3-8-3z" fill="#30c8f8" /><path d="M10 6l5-3v9l-5 3z" fill="#1a2cc8" /><path d="M2 4l8 2 5-3-5-2z" fill="#60dcfc" /></g>
<g transform="translate(56.2,230.8) scale(1.28125)"><path d="M5 1c-2 3 5 3 3 6s-5 2-2 5 3 1 5 3" fill="none" stroke="#141414" stroke-width="1.5" /></g>
<g transform="translate(56.2,257.2) scale(1.28125)"><path d="M1 9l8-8 6 6-8 8z" fill="#3c6cf0" stroke="#0c0c86" stroke-width="1.1" /><path d="M4 6c2 0 3 2 2 4M8 3c2 1 3 3 2 5" fill="none" stroke="#30c8f8" stroke-width="1.4" /><path d="M4 12l7-7" fill="none" stroke="#7aa8fc" stroke-width="1" /></g>
<g transform="translate(56.2,283.8) scale(1.28125)"><circle cx="4" cy="4" r="2.2" fill="#7aa8fc" stroke="#1a2cc8" stroke-width="1.4" /><circle cx="12" cy="4" r="2.2" fill="#7aa8fc" stroke="#1a2cc8" stroke-width="1.4" /><circle cx="4" cy="12" r="2.2" fill="#7aa8fc" stroke="#1a2cc8" stroke-width="1.4" /><circle cx="12" cy="12" r="2.2" fill="#7aa8fc" stroke="#1a2cc8" stroke-width="1.4" /></g>
<g transform="translate(56.2,308.8) scale(1.28125)"><path d="M3 8l6-5 6 5-6 5z" fill="#3c6cf0" stroke="#0c0c86" stroke-width="1" /><path d="M9 3v10" fill="none" stroke="#30c8f8" stroke-width="1.3" /><path d="M.5 1.500l7 7" fill="none" stroke="#0c0c86" stroke-width="1.5" /><path d="M9 10.500l-4-.5.5-3.500z" fill="#0c0c86" /><path d="M9 13l5 2.500" fill="none" stroke="#0c0c86" stroke-width="1.3" /></g>
<g transform="translate(56.2,335.8) scale(1.28125)"><path d="M12.500 4l-7 8c-1.500 1.500-4-.5-2.500-2.500l7.500-8c2.500-2.500 6 .5 3.500 3.500l-8 9" fill="none" stroke="#141414" stroke-width="1.3" /></g>
<g transform="translate(56.2,362.2) scale(1.28125)"><path d="M8 1.500l-6.500 13M8 1.500l6.500 13" fill="none" stroke="#141414" stroke-width="1.5" /><path d="M3 11c3-2.500 7-2.500 10 0" fill="none" stroke="#141414" stroke-width="1.1" /><circle cx="8" cy="2" r="1.3" fill="#141414" /></g>
<g transform="translate(56.2,388.8) scale(1.28125)"><path d="M1 1h14l-5.500 7v4l-3 1.500v-5.500z" fill="#38a0f0" stroke="#1a5cc0" stroke-width="0.9" /><path d="M3 2h10l-2 2.500h-6z" fill="#90d8fc" /><circle cx="8" cy="14.5" r="1.1" fill="none" stroke="#e02020" stroke-width="0.9" /></g>
<g transform="translate(56.2,415.8) scale(1.28125)"><path d="M2 1h9l3 3v11h-12z" fill="#fff" stroke="#141414" stroke-width="1.2" /><path d="M3.500 5h9M3.500 7.500h9M3.500 10h9M3.500 12.500h9M5.500 4v10M8 4v10M10.500 4v10" fill="none" stroke="#141414" stroke-width="0.9" /></g>
<g transform="translate(56.2,442.2) scale(1.28125)"><rect x="1.5" y="1" width="13" height="14" fill="#3c6cf0" stroke="#0c0c86" stroke-width="1.3" /><rect x="4.5" y="3" width="8.5" height="9" fill="#b8d4fc" stroke="#4a6ad0" stroke-width="0.8" /><path d="M3 1v14" fill="none" stroke="#fff" stroke-width="1.2" stroke-dasharray="1.200 1.200"/></g>
<g transform="translate(56.2,470.8) scale(1.28125)"><rect x="3" y="1" width="4.5" height="4" fill="#b8d4fc" stroke="#141414" stroke-width="1.1" /><path d="M5.200 5v4M1 9.500h8.500v2h-8.500z" fill="none" stroke="#141414" stroke-width="1.2" /><path d="M9 7l2.500 4 4-8" fill="none" stroke="#141414" stroke-width="1.5" /><path d="M1 14h13" fill="none" stroke="#30c8f8" stroke-width="2" /></g>
<g transform="translate(56.2,495.8) scale(1.28125)"><path d="M2 1.500h5v8h7.500v5h-12.500z" fill="#3c6cf0" stroke="#0c0c86" stroke-width="1.3" /><path d="M7 1.500l1.500 1v7h6v0" fill="none" stroke="#30c8f8" stroke-width="1.1" /></g>
<rect x="54.5" y="525.9" width="24" height="1.6" fill="#74767c"/><rect x="54.5" y="527.5" width="24" height="1.6" fill="#ecedf0"/>
<g transform="translate(54.0,536.5) scale(1.5625)"><path d="M1 6h9v9h-9z" fill="#30c8f8" stroke="#0c0c86" stroke-width="1.1" /><path d="M1 6l5-5h9l-5 5z" fill="#3c6cf0" stroke="#0c0c86" stroke-width="1.1" /><path d="M10 6l5-5v9l-5 5z" fill="#1a2cc8" stroke="#0c0c86" stroke-width="1.1" /><path d="M3 8h5v5h-5z" fill="#3c6cf0" stroke="#0c0c86" stroke-width="0.8" /><path d="M16 16v-3l-3 3z" fill="#777" /></g>
<g transform="translate(54.0,571.5) scale(1.5625)"><path d="M1 6h10v9h-10z" fill="#3c6cf0" stroke="#0c0c86" stroke-width="1.2" /><path d="M1 6l4-4.500h10l-4 4.500z" fill="#7aa8fc" stroke="#0c0c86" stroke-width="1.2" /><path d="M11 6l4-4.500v9l-4 4.500z" fill="#1a2cc8" stroke="#0c0c86" stroke-width="1.2" /><path d="M5 6h6v4h-6z" fill="#30c8f8" stroke="#0c0c86" stroke-width="1" /></g>
<g transform="translate(54.0,603.5) scale(1.5625)"><path d="M5 5l5-3.500 5 3v7l-5 3.500-5-3z" fill="#3c6cf0" stroke="#0c0c86" stroke-width="1.1" /><path d="M5 5l5 3 5-3.500-5-3z" fill="#30c8f8" stroke="#0c0c86" stroke-width="0.9" /><path d="M10 8v7" fill="none" stroke="#0c0c86" stroke-width="1" /><path d="M2 3v8" fill="none" stroke="#141414" stroke-width="1.3" /><path d="M.3 9l1.700 3.500 1.700-3.500z" fill="#141414" /></g>
<rect x="54.5" y="638.4" width="24" height="1.6" fill="#74767c"/><rect x="54.5" y="640.0" width="24" height="1.6" fill="#ecedf0"/>
<g transform="translate(54.0,651.5) scale(1.5625)"><path d="M1 4h11v11h-11z" fill="#30c8f8" stroke="#0c0c86" stroke-width="1.3" /><path d="M1 4l3-3h11l-3 3zM12 4l3-3v11l-3 3z" fill="#1a2cc8" stroke="#0c0c86" stroke-width="1.1" /><rect x="3.5" y="6.5" width="6" height="6" fill="#3c6cf0" stroke="#0c0c86" stroke-width="1.2" /><path d="M16 16v-3l-3 3z" fill="#777" /></g>
<g transform="translate(54.0,687.5) scale(1.5625)"><path d="M1 14.500v-8c0-3 3-5 6-5l5 0c2 1 3 3 3 5v5l-3 3z" fill="#3c6cf0" stroke="#0c0c86" stroke-width="1.3" /><path d="M7 1.500c3 0 5 2 5 5v8" fill="none" stroke="#0c0c86" stroke-width="1.1" /><path d="M7 1.500c2.500 0 5 1.500 5 5l3-1c0-2-1-4-3-4z" fill="#30c8f8" /><path d="M16 16v-3l-3 3z" fill="#777" /></g>
<g transform="translate(54.0,721.5) scale(1.5625)"><path d="M1 1h14l-3.500 4v5l-3.500 5.500-3.500-5.500v-5z" fill="#3c6cf0" stroke="#0c0c86" stroke-width="1.2" /><path d="M4.500 5h7" fill="none" stroke="#0c0c86" stroke-width="1" /><path d="M6 3h4v9l-2 2.500-2-2.500z" fill="#30c8f8" /><path d="M0 4l3 3M0 7l3 3M0 10l3 3" fill="none" stroke="#555" stroke-width="0.7" /><path d="M16 16v-3l-3 3z" fill="#777" /></g>
<g transform="translate(54.0,756.5) scale(1.5625)"><path d="M4 1h10v9h-10z" fill="#c4c6ca" stroke="#8e9096" stroke-width="1.1" /><path d="M1 11l3-1h10l-2 4h-11z" fill="#d0d2d6" stroke="#8e9096" stroke-width="1" /><path d="M6 3h5v5h-5z" fill="none" stroke="#9a9ca2" stroke-width="0.9" /></g>
<g transform="translate(54.0,791.5) scale(1.5625)"><path d="M1 13.500l4-11h5l5 8-3 4.500z" fill="#3c6cf0" stroke="#0c0c86" stroke-width="1.3" /><path d="M5 2.500h5l5 8" fill="none" stroke="#0c0c86" stroke-width="1" /><path d="M5 2.500l2 0 5.500 12" fill="none" stroke="#30c8f8" stroke-width="1.2" /></g>
<g transform="translate(54.0,825.0) scale(1.5625)"><path d="M1 5h11v10h-11z" fill="#3c6cf0" stroke="#0c0c86" stroke-width="1.3" /><path d="M1 5l3-4h11l-3 4zM12 5l3-4v10l-3 4z" fill="#30c8f8" stroke="#0c0c86" stroke-width="1.1" /><rect x="3.5" y="7.5" width="6" height="5" fill="#7aa8fc" stroke="#0c0c86" stroke-width="1.1" /><path d="M5 10h3" fill="none" stroke="#0c0c86" stroke-width="1" /></g>
<g transform="translate(54.0,858.5) scale(1.5625)"><path d="M1 8l7-7 7.500 7.500-7 6.500z" fill="#30c8f8" stroke="#0c0c86" stroke-width="1.3" /><path d="M4 8l4-4 4 4-4 4z" fill="#3c6cf0" stroke="#0c0c86" stroke-width="1" /><path d="M6.500 6v4.500l4-2z" fill="#fff" stroke="#0c0c86" stroke-width="0.8" /><path d="M1 8v3l7.500 4.500" fill="none" stroke="#0c0c86" stroke-width="1.1" /><path d="M16 16v-3l-3 3z" fill="#777" /></g>
<rect x="54.5" y="892.4" width="24" height="1.6" fill="#74767c"/><rect x="54.5" y="894.0" width="24" height="1.6" fill="#ecedf0"/>
<g transform="translate(54.0,906.5) scale(1.5625)"><path d="M1 7h8v8h-8z" fill="#3c6cf0" stroke="#0c0c86" stroke-width="1.2" /><path d="M1 7l3-3h8l-3 3zM9 7l3-3v8l-3 3z" fill="#7aa8fc" stroke="#0c0c86" stroke-width="1" /><ellipse cx="12" cy="4" rx="3.4" ry="2.4" fill="#d8f0d8" stroke="#141414" stroke-width="1" transform="rotate(-40 12 4)"/><path d="M10 2.500l4 3.500M11.500 1.500l3 3" fill="none" stroke="#30a040" stroke-width="1" /></g>
<g transform="translate(54.0,940.0) scale(1.5625)"><path d="M5 1h10v9h-10z" fill="#3c6cf0" stroke="#0c0c86" stroke-width="1.2" /><path d="M5 1l2-0M7 3h6v5h-6z" fill="#30c8f8" stroke="#0c0c86" stroke-width="0.9" /><path d="M1 8h7v7h-7z" fill="#30c8f8" stroke="#0c0c86" stroke-width="1.2" /><path d="M1 8l2-2h7l-2 2zM8 8l2-2v7l-2 2z" fill="#3c6cf0" stroke="#0c0c86" stroke-width="1" /></g>
<g transform="translate(54.0,975.0) scale(1.5625)"><path d="M6 3h5v5h-5zM10 1h5v5h-5z" fill="#7aa8fc" stroke="#0c0c86" stroke-width="1" /><path d="M2 9h7v6h-7z" fill="#30c8f8" stroke="#0c0c86" stroke-width="1.2" /><path d="M2 9l2-2h7l-2 2zM9 9l2-2v6l-2 2z" fill="#3c6cf0" stroke="#0c0c86" stroke-width="1" /><path d="M.5 4l4-3" fill="none" stroke="#141414" stroke-width="1.3" /><path d="M5.500 .3l-1 3.200-2.200-2z" fill="#141414" /></g>
<rect x="54.5" y="1009.4" width="24" height="1.6" fill="#74767c"/><rect x="54.5" y="1011.0" width="24" height="1.6" fill="#ecedf0"/>
<g transform="translate(54.0,1021.5) scale(1.5625)"><rect x="1" y="5.5" width="13" height="9.5" fill="#fff" stroke="#141414" stroke-width="1.5" /><rect x="3" y="8" width="4" height="3.5" fill="#7aa8fc" stroke="#0c0c86" stroke-width="1" /><path d="M9 12.500h4" fill="none" stroke="#141414" stroke-width="1.5" /><path d="M9 1h5.500v5h-5.500z" fill="#30c8f8" stroke="#0c0c86" stroke-width="1" /><path d="M3 3h4M5 1v4" fill="none" stroke="#141414" stroke-width="1.3" /><path d="M7 5l-3-0 2-2z" fill="#141414" /></g>
<g transform="translate(1526.5,177.1) scale(1.5625)"><circle cx="6.5" cy="6.5" r="5.3" fill="#e8eeff" stroke="#0c0c86" stroke-width="1.6" /><path d="M4 3.500h3l2 2v4h-5z" fill="#f8f8e8" stroke="#141414" stroke-width="1.2" /><path d="M10.500 10.500l4.500 4.500" fill="none" stroke="#0c0c86" stroke-width="2.6" /><path d="M11 11l4 4" fill="none" stroke="#a8b8f0" stroke-width="1" /></g>
<rect x="1527" y="213.0" width="24" height="1.6" fill="#74767c"/><rect x="1527" y="214.6" width="24" height="1.6" fill="#ecedf0"/>
<g transform="translate(1526.5,227.1) scale(1.5625)"><circle cx="6.5" cy="6.5" r="5.3" fill="#c8e4f4" stroke="#0c0c86" stroke-width="1.6" /><rect x="3.5" y="3" width="9" height="7" fill="none" stroke="#141414" stroke-width="1" stroke-dasharray="1 1"/><path d="M10.500 10.500l4.500 4.500" fill="none" stroke="#0c0c86" stroke-width="2.6" /><path d="M11 11l4 4" fill="none" stroke="#a8b8f0" stroke-width="1" /></g>
<rect x="1527" y="260.9" width="24" height="1.6" fill="#74767c"/><rect x="1527" y="262.5" width="24" height="1.6" fill="#ecedf0"/>
<g transform="translate(1526.5,272.9) scale(1.5625)"><circle cx="6.5" cy="6.5" r="5.3" fill="#e8eeff" stroke="#0c0c86" stroke-width="1.6" /><path d="M3.500 5.500h6M6.500 2.800v5M3.500 9.500h6" fill="none" stroke="#141414" stroke-width="1.3" /><path d="M10.500 10.500l4.500 4.500" fill="none" stroke="#0c0c86" stroke-width="2.6" /><path d="M11 11l4 4" fill="none" stroke="#a8b8f0" stroke-width="1" /></g>
<rect x="1527" y="306.4" width="24" height="1.6" fill="#74767c"/><rect x="1527" y="308.0" width="24" height="1.6" fill="#ecedf0"/>
<g transform="translate(1526.5,320.0) scale(1.5625)"><path d="M1.600 10.300A6.800 6.800 0 0 1 12.400 2.800M14.400 5.700A6.800 6.800 0 0 1 3.600 13.200" fill="none" stroke="#141414" stroke-width="1.5" /><path d="M14.600 4.600L10.600 4.800 13.800 .8zM1.400 11.400L5.400 11.200 2.200 15.200z" fill="#141414" /></g>
<g transform="translate(1526.5,356.2) scale(1.5625)"><path d="M6.700 9.500V1.200M6.700 9.500H14.800M6.700 9.500L1.300 14.400" fill="none" stroke="#141414" stroke-width="1.1" /><path d="M4.700 3.700l2-2.700 2 2.700M12.300 7.500l2.700 2-2.700 2M1.200 11.300l-.2 3.400 3.400-.4" fill="none" stroke="#141414" stroke-width="1.1" /><circle cx="6.7" cy="9.5" r="1.3" fill="#4060ff" stroke="#0c0c86" stroke-width="0.7" /></g>
<g transform="translate(1526.5,381.2) scale(1.5625)"><path d="M6 5.300l3.200 2.700-3.200 2.700z" fill="#141414" /></g>
<rect x="1527" y="408.4" width="24" height="1.6" fill="#74767c"/><rect x="1527" y="410.0" width="24" height="1.6" fill="#ecedf0"/>
<g transform="translate(1526.5,422.5) scale(1.5625)"><path d="M1 5l9 2.500v8l-9-3zM1 5l5-3.500 9 2.500-5 3.500M15 4v8l-5 3.500M6 1.500v8l9 2.500M6 9.500l-5 3" fill="none" stroke="#141414" stroke-width="1.1" /></g>
<g transform="translate(1526.5,456.5) scale(1.5625)"><path d="M1 5l9 2.500v8l-9-3zM1 5l5-3.500 9 2.500-5 3.500M15 4v8l-5 3.500" fill="none" stroke="#141414" stroke-width="1.2" /></g>
<g transform="translate(1526.5,491.5) scale(1.5625)"><path d="M1 5l9 2.500v8l-9-3zM1 5l5-3.500 9 2.500-5 3.500M15 4v8l-5 3.500" fill="none" stroke="#141414" stroke-width="1.2" /><path d="M6 1.500v8l9 2.500M6 9.500l-5 3" fill="none" stroke="#666" stroke-width="0.6" /></g>
<g transform="translate(1526.5,525.0) scale(1.5625)"><path d="M1 4.500l9 2.500v8.500l-9-3z" fill="#4a80f8" /><path d="M1 4.500l5-3 9 2.500-5 3z" fill="#30d0f8" /><path d="M10 7l5-3v8.500l-5 3z" fill="#1c38d8" /></g>
<rect x="1525.5" y="559" width="27" height="28" rx="1.500" fill="url(#selg)"/>
<g transform="translate(1526.5,560.5) scale(1.5625)"><path d="M1 4.500l9 2.500v8.500l-9-3z" fill="#4a80f8" stroke="#141414" stroke-width="1.3" /><path d="M1 4.500l5-3 9 2.500-5 3z" fill="#30d0f8" stroke="#141414" stroke-width="1.3" /><path d="M10 7l5-3v8.500l-5 3z" fill="#1c38d8" stroke="#141414" stroke-width="1.3" /></g>
<rect x="1527" y="594.4" width="24" height="1.6" fill="#74767c"/><rect x="1527" y="596.0" width="24" height="1.6" fill="#ecedf0"/>
<g transform="translate(1526.5,606.5) scale(1.5625)"><path d="M1 2l3-1.500 5 5-1.500 3z" fill="#3060e8" stroke="#0c0c86" stroke-width="1" /><path d="M6 5.500l2.500 2.500-1 1.500-2.500-2.500z" fill="#80b0f8" stroke="#0c0c86" stroke-width="0.7" /><path d="M9 11h2v-2h3v2M10 11v3M14 11v3M9 14h6" fill="none" stroke="#a0a2a8" stroke-width="1" /></g>
<g transform="translate(1526.5,633.5) scale(1.5625)"><path d="M6 5.300l3.200 2.700-3.200 2.700z" fill="#141414" /></g>
<g transform="translate(1526.5,660.5) scale(1.5625)"><path d="M1 2l3-1.500 5 5-1.500 3z" fill="#3060e8" stroke="#0c0c86" stroke-width="1" /><path d="M6 5.500l2.500 2.500-1 1.500-2.500-2.500z" fill="#80b0f8" stroke="#0c0c86" stroke-width="0.7" /><rect x="8.5" y="9.5" width="5.5" height="5.5" fill="#c8cace" stroke="#a0a2a8" stroke-width="1" /><rect x="10.5" y="11.5" width="2" height="2" fill="none" stroke="#a0a2a8" stroke-width="0.8" /></g>
<g transform="translate(1526.5,686.1) scale(1.5625)"><path d="M6 5.300l3.200 2.700-3.200 2.700z" fill="#141414" /></g>
<rect x="1527" y="715.4" width="24" height="1.6" fill="#74767c"/><rect x="1527" y="717.0" width="24" height="1.6" fill="#ecedf0"/>
<rect x="1525.5" y="723.6" width="27" height="28" rx="1.500" fill="url(#selg)"/>
<g transform="translate(1526.5,725.1) scale(1.5625)"><path d="M3 6l5-4 6 3v5l-5 4-6-3z" fill="#3878f0" stroke="#0c0c86" stroke-width="1" /><path d="M8 2l6 3-5 3-6-2z" fill="#30c8f8" /><path d="M9 8v6" fill="none" stroke="#0c0c86" stroke-width="0.8" /><ellipse cx="8" cy="9" rx="7.5" ry="3.5" fill="none" stroke="#0c0c86" stroke-width="1.3" transform="rotate(25 8 9)"/><circle cx="13.5" cy="13" r="1" fill="none" stroke="#0c0c86" stroke-width="0.8" /></g>
<rect x="1527" y="758.9" width="24" height="1.6" fill="#74767c"/><rect x="1527" y="760.5" width="24" height="1.6" fill="#ecedf0"/>
<g transform="translate(1526.5,775.5) scale(1.5625)"><path d="M1 2h14M3.500 2v7M3.500 9c-2 0-2 3 0 3" fill="none" stroke="#141414" stroke-width="1.4" /><path d="M9.500 2h4.500v13h-4.500z" fill="#fff" stroke="#141414" stroke-width="1.2" /><path d="M9.500 2l4.500 3-4.500 3 4.500 3-4.500 3" fill="none" stroke="#141414" stroke-width="0.9" /><rect x="1" y="11.5" width="6.5" height="4" fill="#141414" /><rect x="2" y="12.5" width="1.5" height="1.5" fill="#fff" /><rect x="4.5" y="12.5" width="1.5" height="1.5" fill="#fff" /></g>
<g transform="translate(1526.5,858.1) scale(1.5625)"><path d="M1 5l4-4v10l-4 4zM11 5l4-4v10l-4 4z" fill="#50a0f8" stroke="#1420b4" stroke-width="1.2" /><path d="M4.500 8h7" fill="none" stroke="#141414" stroke-width="1.3" /><path d="M12 8l-3-1.800v3.600z" fill="#141414" /></g>
<g transform="translate(1526.5,892.5) scale(1.5625)"><path d="M1 12l8-5 6 5-8 3z" fill="#4860e8" stroke="#1420b4" stroke-width="1" /><path d="M4 4l5-3 6.500 7-5 3z" fill="#30d0f8" stroke="#1890d8" stroke-width="1" /></g>
<g transform="translate(1526.5,926.9) scale(1.5625)"><path d="M1 5l3-4v10l-3 4zM4.500 5l3-4v10l-3 4z" fill="#50a0f8" stroke="#1420b4" stroke-width="1.2" /><path d="M9 8h6.500" fill="none" stroke="#141414" stroke-width="1.3" /><path d="M8.500 8l3-1.800v3.600z" fill="#141414" /></g>
<g transform="translate(1526.5,961.5) scale(1.5625)"><path d="M1 13l4-3h10l-4 3z" fill="#4860e8" stroke="#1420b4" stroke-width="1" /><path d="M6 11.500v-10l2.500-1.500v10z" fill="#30d0f8" stroke="#1420b4" stroke-width="1" /></g>
<g transform="translate(1526.5,998.0) scale(1.5625)"><path d="M1 6l5-3h9l-5 3zM1 11l5-3h9l-5 3z" fill="#30c0f8" stroke="#1420b4" stroke-width="1.3" /><path d="M1 13.500l5-3h9l-5 3z" fill="#4860e8" stroke="#1420b4" stroke-width="1" /></g>
<rect x="1527" y="1029.4" width="24" height="1.6" fill="#74767c"/><rect x="1527" y="1031.0" width="24" height="1.6" fill="#ecedf0"/>
<g transform="translate(1526.5,1043.5) scale(1.5625)"><path d="M1 1c8 0 14 5 14 13h-14z" fill="#2aa0e8" stroke="#1870c8" stroke-width="0.8" /><path d="M1 14l6-6" fill="none" stroke="#30d0f8" stroke-width="3" /><path d="M1 15l10-10" fill="none" stroke="#141414" stroke-width="1.6" /><path d="M12.500 3.500l-4.500 1 3.500 3.500z" fill="#141414" /></g>
<g transform="translate(1526.5,1078.5) scale(1.5625)"><circle cx="9.5" cy="10" r="5.5" fill="#18a0f0" stroke="#1078d0" stroke-width="0.6" /><circle cx="8" cy="8.5" r="2.5" fill="#50d0fc" /><path d="M.5 11.500l12-11" fill="none" stroke="#141414" stroke-width="1.7" /></g>
<g transform="translate(1567.5,179.1) scale(1.5625)"><path d="M3 1h6v12h-6z" fill="#f6f6f8" stroke="#8a8c92" stroke-width="1" /><path d="M3 1l6 6-6 6M9 1l-6 6" fill="none" stroke="#8a8c92" stroke-width="0.9" /><path d="M1 13.500h10" fill="none" stroke="#8a8c92" stroke-width="1" /><rect x="9.5" y="7" width="6" height="6" fill="#fff" stroke="#777" stroke-width="0.7" /><path d="M10.5 10l1.700 2 2.800-4.200" fill="none" stroke="#141414" stroke-width="1.4" /></g>
<g transform="translate(1567.5,214.5) scale(1.5625)"><path d="M1 2h6l-3 3.500zM7 2h6l-3 3.500zM4 5.500h6l-3 3.500z" fill="#f6f6f8" stroke="#8a8c92" stroke-width="0.9" /><rect x="9" y="8.5" width="6" height="6" fill="#fff" stroke="#777" stroke-width="0.7" /><path d="M10 11.5l1.700 2 2.800-4.200" fill="none" stroke="#141414" stroke-width="1.4" /></g>
<g transform="translate(1567.5,247.5) scale(1.5625)"><path d="M1 3l13 8M14 3l-13 8" fill="none" stroke="#8a8c92" stroke-width="2.2" /><path d="M1 3l13 8M14 3l-13 8" fill="none" stroke="#f6f6f8" stroke-width="0.9" /><rect x="5.5" y="8.5" width="6" height="6" fill="#fff" stroke="#777" stroke-width="0.7" /><path d="M6.5 11.5l1.700 2 2.800-4.200" fill="none" stroke="#141414" stroke-width="1.4" /></g>
<rect x="1568" y="281.4" width="24" height="1.6" fill="#74767c"/><rect x="1568" y="283.0" width="24" height="1.6" fill="#ecedf0"/>
<g transform="translate(1567.5,293.5) scale(1.5625)"><circle cx="7.5" cy="8" r="6.8" fill="#f6f6f8" stroke="#8a8c92" stroke-width="1.1" /><path d="M7.500 1.200v13.600M7.500 8l5-4.500M7.500 8l5 4.500" fill="none" stroke="#8a8c92" stroke-width="1" /><rect x="9.5" y="8.5" width="6" height="6" fill="#fff" stroke="#777" stroke-width="0.7" /><path d="M10.5 11.5l1.700 2 2.800-4.200" fill="none" stroke="#141414" stroke-width="1.4" /></g>
<rect x="1568" y="328.4" width="24" height="1.6" fill="#74767c"/><rect x="1568" y="330.0" width="24" height="1.6" fill="#ecedf0"/>
<g transform="translate(1567.5,341.5) scale(1.5625)"><path d="M1 2h4v11h-4z" fill="#f6f6f8" stroke="#555" stroke-width="1.2" /><path d="M12 3h-5" fill="none" stroke="#141414" stroke-width="1.3" /><path d="M6 3l2.800-1.700v3.400z" fill="#141414" /><rect x="12.5" y="1.5" width="2.5" height="2.5" fill="#fff" stroke="#888" stroke-width="0.6" /><ellipse cx="10" cy="11.5" rx="5.7" ry="3.5" fill="#fff" stroke="#141414" stroke-width="1.8" /><circle cx="10" cy="11.5" r="1.8" fill="#141414" /></g>
<g transform="translate(1567.5,377.1) scale(1.5625)"><path d="M1 1.500h12v9h-12z" fill="#f6f6f8" stroke="#555" stroke-width="1.3" /><path d="M4 4.500h9v6" fill="none" stroke="#555" stroke-width="1.1" /><path d="M1 10.500l3 3h5" fill="none" stroke="#555" stroke-width="1.1" /><ellipse cx="10.5" cy="12" rx="5.7" ry="3.5" fill="#fff" stroke="#141414" stroke-width="1.8" /><circle cx="10.5" cy="12" r="1.8" fill="#141414" /></g>
<g transform="translate(1567.5,410.5) scale(1.5625)"><path d="M1 4l7-3 7 4-7 4z" fill="#f4e8c8" stroke="#a08040" stroke-width="0.9" /><path d="M3 4.500h6" fill="none" stroke="#c09048" stroke-width="1.3" /><path d="M4 9l5 6 3-2-4-6z" fill="#e0a050" stroke="#906020" stroke-width="0.8" /><path d="M15.500 5l-4 7" fill="none" stroke="#3858d8" stroke-width="1.8" /><path d="M10 14l1-3.500 2 1.500z" fill="#3858d8" /></g>
<g transform="translate(1567.5,445.5) scale(1.5625)"><rect x="1.5" y="1.5" width="13" height="13" fill="#f6f6f8" stroke="#8890a8" stroke-width="1.1" /><rect x="1.5" y="1.5" width="13" height="2.2" fill="#b0b8d0" /><path d="M6.500 6.500h6M6.500 9.500h6M6.500 12.500h6" fill="none" stroke="#444" stroke-width="1.2" /><path d="M3.500 6.500h1.500M3.500 9.500h1.500M3.500 12.500h1.500" fill="none" stroke="#444" stroke-width="1.4" /></g>
<rect x="1568" y="478.4" width="24" height="1.6" fill="#74767c"/><rect x="1568" y="480.0" width="24" height="1.6" fill="#ecedf0"/>
<g transform="translate(1567.5,489.5) scale(1.5625)"><path d="M2 1h3.500v7c0 2 1 3 3 3h6v3.500h-12.500z" fill="#f6f6f8" stroke="#8a8c92" stroke-width="1.1" /></g>
<g transform="translate(1567.5,525.0) scale(1.5625)"><path d="M4 1h3.500v7.500c0 1.500 .5 2 2 2h3v3.500h-8.500z" fill="#f6f6f8" stroke="#8a8c92" stroke-width="1.1" /></g>
<g transform="translate(1567.5,560.5) scale(1.5625)"><path d="M1 1.500h13.500v3c-3 0-4 .5-4 1.500v4c0 1 1 1.500 4 1.500v3h-13.500v-3c3 0 4-.5 4-1.500v-4c0-1-1-1.500-4-1.500z" fill="#f6f6f8" stroke="#8a8c92" stroke-width="1.1" /></g>
<g transform="translate(1567.5,593.5) scale(1.5625)"><path d="M4 1h8.500v3.500h-3.500c-1 0-1.500 .5-1.500 1.500v4c0 1 .5 1.500 1.500 1.500h3.500v3.500h-8.500z" fill="#f6f6f8" stroke="#8a8c92" stroke-width="1.1" /></g>
<g transform="translate(1567.5,628.5) scale(1.5625)"><path d="M6.500 .5h3v8c0 2 1 3 5.500 3v3h-14v-3c4.500 0 5.500-1 5.500-3z" fill="#f6f6f8" stroke="#8a8c92" stroke-width="1.1" /></g>
<g transform="translate(1567.5,663.2) scale(1.5625)"><circle cx="8" cy="8" r="6.2" fill="none" stroke="#8a8c92" stroke-width="4.2" /><circle cx="8" cy="8" r="6.2" fill="none" stroke="#f6f6f8" stroke-width="2.3" /></g>
<g transform="translate(1567.5,697.5) scale(1.5625)"><path d="M1.500 1.500h13v13h-13z" fill="none" stroke="#8a8c92" stroke-width="4" /><path d="M1.500 1.500h13v13h-13z" fill="none" stroke="#f6f6f8" stroke-width="2.1" /></g>
<g transform="translate(1567.5,734.3) scale(1.5625)"><path d="M1 8h3v-2.500c0-2 1-3 3-3h6.500M13.500 6.500h-4.500v3c0 2-1 3-3 3h-3" fill="none" stroke="#8a8c92" stroke-width="4" /><path d="M1 8h3v-2.500c0-2 1-3 3-3h6.500M13.500 6.500h-4.500v3c0 2-1 3-3 3h-3" fill="none" stroke="#f6f6f8" stroke-width="2.1" /></g>
<rect x="1568" y="767.4" width="24" height="1.6" fill="#74767c"/><rect x="1568" y="769.0" width="24" height="1.6" fill="#ecedf0"/>
<g transform="translate(1567.5,777.5) scale(1.5625)"><path d="M1 1.500h14v3h-3v7h3v3h-14v-3h3v-7h-3z" fill="#f6f6f8" stroke="#c04038" stroke-width="1.2" /><path d="M6 4.500h4v7h-4z" fill="none" stroke="#888" stroke-width="1" /></g>
<g transform="translate(1567.5,812.5) scale(1.5625)"><path d="M5 1h2.500v10.500c0 1.500-.5 3-2.500 3h-4v-2.500h2.500c1 0 1.500-.5 1.500-1.500z" fill="#f6f6f8" stroke="#8a8c92" stroke-width="1.1" /><path d="M11 1h-2.500v10.500c0 1.500 .5 3 2.500 3h4v-2.500h-2.500c-1 0-1.500-.5-1.500-1.500z" fill="#f6f6f8" stroke="#8a8c92" stroke-width="1.1" /></g>
<g transform="translate(1567.5,849.0) scale(1.5625)"><path d="M1 13.500v-5c0-4 3-7 7-7h7v12z" fill="#8c98b8" stroke="#70788c" stroke-width="0.8" /><path d="M1 13.500h14v1.500h-14z" fill="#5c6478" /></g>
<rect x="1568" y="882.4" width="24" height="1.6" fill="#74767c"/><rect x="1568" y="884.0" width="24" height="1.6" fill="#ecedf0"/>
<g transform="translate(1567.5,892.5) scale(1.5625)"><path d="M1.500 .5h2.600v12h11.400v2.800h-14z" fill="#f6f6f8" stroke="#8a8c92" stroke-width="0.8" /><path d="M4.500 2.500v10h10.500z" fill="#f08020" stroke="#b85808" stroke-width="0.7" /><path d="M5 4l2.500 8" fill="none" stroke="#f8c080" stroke-width="1.1" /></g>
<g transform="translate(1567.5,929.2) scale(1.5625)"><path d="M8 2.500l5.500 5.500-5.500 5.500-5.500-5.500z" fill="#f6f6f8" stroke="#8a8c92" stroke-width="1.1" /><path d="M8 0v16M0 8h16" fill="none" stroke="#8a8c92" stroke-width="0.8" /></g>
<rect x="1568" y="964.4" width="24" height="1.6" fill="#74767c"/><rect x="1568" y="966.0" width="24" height="1.6" fill="#ecedf0"/>
<g transform="translate(1567.5,977.5) scale(1.5625)"><rect x="0.5" y="1" width="15" height="14" fill="#7c88a8" stroke="#5c6480" stroke-width="0.8" /><path d="M3 1v14M6.500 1v14M10 1v14M13.500 1v14" fill="none" stroke="#d0d6e8" stroke-width="1.5" /></g>
<g transform="translate(1567.5,1009.5) scale(1.5625)"><path d="M1 1h14v3.500h-14zM1 11.500h14v3.500h-14z" fill="#f6f6f8" stroke="#8a8c92" stroke-width="1" /><rect x="3" y="4.5" width="10" height="7" fill="#8c98b8" stroke="#70788c" stroke-width="0.7" /><rect x="6.8" y="4.5" width="2.4" height="7" fill="#f6f6f8" /></g>
<g transform="translate(1567.5,1043.5) scale(1.5625)"><rect x="3.5" y="1" width="7.5" height="14" fill="#f6f6f8" stroke="#8a8c92" stroke-width="1.2" /><path d="M3.500 1l7.500 14M11 1l-7.500 14M3.500 8h7.500" fill="none" stroke="#8a8c92" stroke-width="1" /></g>
<g transform="translate(1567.5,1080.5) scale(1.5625)"><path d="M1 3h4v3h3.500v3h3.500v3h3.500v2.500h-6l-8.500-8.500z" fill="#b4bcd0" stroke="#7c86a0" stroke-width="0.9" /><path d="M1 9l5 5.500h5" fill="none" stroke="#7c86a0" stroke-width="1.2" /></g>
</svg>
<div style="left:85px;top:160px;width:340px;height:833px;background:#ece9d8"></div>
<div style="left:86px;top:161px;width:338px;height:30px;background:linear-gradient(to bottom,#839fe5,#7593e0 45%,#6d8cdc);"></div>
<div class="t" style="left:91px;top:167px;font-size:16.8px;color:#d4dcf2;">Дерево модели</div>
<div style="left:86px;top:191px;width:338px;height:39px;background:linear-gradient(to bottom,#c9cbd0,#bdbfc5 40%,#a4a6ac 85%,#96989e)"></div>
<div style="left:92px;top:235px;width:325px;height:753px;background:#fff;border:1px solid #a9a593;border-right-color:#d9d6c6;border-bottom-color:#d9d6c6"></div>
<div style="left:93px;top:961px;width:323px;height:24px;background:linear-gradient(to bottom,#f1efe6,#fdfdfb)"></div>
<div style="left:95px;top:962px;width:22px;height:22px;background:linear-gradient(to bottom,#c8d6fb,#b3c6f5);border:1px solid #eef2fd;border-radius:3px;box-shadow:0 0 0 1px #b9c9ee"></div>
<div style="left:391px;top:962px;width:22px;height:22px;background:linear-gradient(to bottom,#c8d6fb,#b3c6f5);border:1px solid #eef2fd;border-radius:3px;box-shadow:0 0 0 1px #b9c9ee"></div>
<div style="left:122px;top:962px;width:127px;height:22px;background:linear-gradient(to bottom,#c8d6fb,#b6c8f6);border:1px solid #eef2fd;border-radius:3px;box-shadow:0 0 0 1px #9fb4e6"></div>
<svg style="left:95px;top:962px" width="22" height="22" viewBox="0 0 22 22"><path d="M13.5 5.5L8 11l5.500 5.500" fill="none" stroke="#4d6185" stroke-width="3"/></svg>
<svg style="left:391px;top:962px" width="22" height="22" viewBox="0 0 22 22"><path d="M8.5 5.5L14 11l-5.500 5.500" fill="none" stroke="#4d6185" stroke-width="3"/></svg>
<div style="left:180.5px;top:968px;width:1.4px;height:10px;background:#eef3ff"></div>
<div style="left:181.6px;top:968px;width:1.2px;height:10px;background:#8ca0d0"></div>
<div style="left:183.6px;top:968px;width:1.4px;height:10px;background:#eef3ff"></div>
<div style="left:184.7px;top:968px;width:1.2px;height:10px;background:#8ca0d0"></div>
<div style="left:186.7px;top:968px;width:1.4px;height:10px;background:#eef3ff"></div>
<div style="left:187.79999999999998px;top:968px;width:1.2px;height:10px;background:#8ca0d0"></div>
<div style="left:189.8px;top:968px;width:1.4px;height:10px;background:#eef3ff"></div>
<div style="left:190.9px;top:968px;width:1.2px;height:10px;background:#8ca0d0"></div>
<div style="left:90px;top:992px;width:107px;height:27px;background:linear-gradient(to bottom,#fdfdfd,#f1f1ef 70%,#e2e2de);border-radius:0 0 6px 6px;border:1px solid #cfcfcb;border-top:none"></div>
<div class="t" style="left:95px;top:999px;font-size:16.8px;color:#000;">Построение</div>
<div class="t" style="left:209px;top:999px;font-size:16.8px;color:#fff;">Исполнения</div>
<svg style="left:0;top:0" width="1600" height="1200" viewBox="0 0 1600 1200">
<defs><linearGradient id="selo" x1="0" y1="0" x2="0" y2="1"><stop offset="0" stop-color="#f8d8a0"/><stop offset="0.45" stop-color="#f4b868"/><stop offset="1" stop-color="#f8dcae"/></linearGradient></defs>
<rect x="88.500" y="192.500" width="32" height="32" fill="url(#selo)"/>
<g transform="translate(93.5,196.5) scale(1.6)"><path d="M3.500 2.500v10.500h3.500M3.500 5.500h3l1.500-1.500M3.500 8.500h5" fill="none" stroke="#141414" stroke-width="1.3" /><circle cx="3.5" cy="1.8" r="1.5" fill="#f8e8c0" stroke="#141414" stroke-width="1.1" /><circle cx="9" cy="3.5" r="1.4" fill="#f8e8c0" stroke="#141414" stroke-width="1" /><circle cx="10" cy="8.5" r="1.4" fill="#f8e8c0" stroke="#141414" stroke-width="1" /><circle cx="8.5" cy="13" r="1.4" fill="#f8e8c0" stroke="#141414" stroke-width="1" /></g>
<g transform="translate(129.5,196.5) scale(1.55)"><path d="M1 1.500h6M1 1.500v12.500h5.500M1 7.500h4.500" fill="none" stroke="#141414" stroke-width="1.7" /><path d="M7 4l1.500 1.500 2.500-3M7 9l1.500 1.500 2.500-3M7 14l1.500 1.500 2.500-3" fill="none" stroke="#141414" stroke-width="0.9" /><path d="M12 4.500h3.500M12 9.500h3.500M12 14h3.500" fill="none" stroke="#0c0c86" stroke-width="2" /></g>
<g transform="translate(163.5,206.8) scale(1.6)"><path d="M0 0h5.200l-2.600 3.200z" fill="#141414" /></g>
<rect x="180.8" y="196" width="1.700" height="28" fill="#6c6e74"/><rect x="182.5" y="196" width="1.700" height="28" fill="#f2f3f5"/>
<g transform="translate(196.0,197.0) scale(1.6)"><rect x="1.5" y="0.8" width="8.5" height="14" fill="#fff" stroke="#0c0c86" stroke-width="1.6" /><path d="M3.500 3h3.500M5 3v3h2" fill="none" stroke="#141414" stroke-width="1.1" /><rect x="2.5" y="9.5" width="6.5" height="4" fill="#d0d4f0" /><path d="M1.500 9h8.500" fill="none" stroke="#0c0c86" stroke-width="1.3" /></g>
<g transform="translate(227.0,197.0) scale(1.6)"><rect x="1" y="2" width="8" height="12" fill="#d4d6da" stroke="#9a9ca2" stroke-width="1" /><path d="M2.500 4.500h5M2.500 7h5M2.500 9.500h5" fill="none" stroke="#9a9ca2" stroke-width="0.9" /><rect x="7" y="0.8" width="7" height="9" fill="#e2e3e6" stroke="#a6a8ae" stroke-width="0.9" /><path d="M8.500 3.500h4M8.500 6h4" fill="none" stroke="#a6a8ae" stroke-width="0.8" /><path d="M8 14l5-5 1.500 1.500-5 5z" fill="#c8cace" stroke="#9a9ca2" stroke-width="0.7" /></g>
<g fill="none" stroke="#fff" stroke-width="1.800"><path d="M380 168.500h6v7h-6zM378 176h10M383 176v6M385.500 169v6.500"/><path d="M404 168.500l10 10.500M414 168.500l-10 10.500" stroke-width="2.400"/></g>
<path d="M114.500 266V534H134 M121 284H134 M121 315.700H134 M121 471.700H134 M121 503H134" stroke="#a0a0a0" stroke-width="1.300" stroke-dasharray="1.500 1.600" fill="none"/>
<path d="M150.500 330V440.600 M157 347H170 M157 378H170 M157 409.500H170 M157 440.600H170" stroke="#a0a0a0" stroke-width="1.300" stroke-dasharray="1.500 1.600" fill="none"/>
<rect x="108.0" y="277.5" width="13" height="13" rx="1.500" fill="#fff" stroke="#8c98ac" stroke-width="1.300"/><path d="M111.0 284h7" stroke="#111" stroke-width="1.700"/><path d="M114.5 280.5v7" stroke="#111" stroke-width="1.700"/>
<rect x="108.0" y="309.2" width="13" height="13" rx="1.500" fill="#fff" stroke="#8c98ac" stroke-width="1.300"/><path d="M111.0 315.7h7" stroke="#111" stroke-width="1.700"/>
<rect x="108.0" y="465.2" width="13" height="13" rx="1.500" fill="#fff" stroke="#8c98ac" stroke-width="1.300"/><path d="M111.0 471.7h7" stroke="#111" stroke-width="1.700"/><path d="M114.5 468.2v7" stroke="#111" stroke-width="1.700"/>
<rect x="108.0" y="496.5" width="13" height="13" rx="1.500" fill="#fff" stroke="#8c98ac" stroke-width="1.300"/><path d="M111.0 503h7" stroke="#111" stroke-width="1.700"/><path d="M114.5 499.5v7" stroke="#111" stroke-width="1.700"/>
<rect x="144.0" y="340.5" width="13" height="13" rx="1.500" fill="#fff" stroke="#8c98ac" stroke-width="1.300"/><path d="M147.0 347h7" stroke="#111" stroke-width="1.700"/><path d="M150.5 343.5v7" stroke="#111" stroke-width="1.700"/>
<rect x="144.0" y="371.5" width="13" height="13" rx="1.500" fill="#fff" stroke="#8c98ac" stroke-width="1.300"/><path d="M147.0 378h7" stroke="#111" stroke-width="1.700"/><path d="M150.5 374.5v7" stroke="#111" stroke-width="1.700"/>
<rect x="144.0" y="403.0" width="13" height="13" rx="1.500" fill="#fff" stroke="#8c98ac" stroke-width="1.300"/><path d="M147.0 409.5h7" stroke="#111" stroke-width="1.700"/><path d="M150.5 406.0v7" stroke="#111" stroke-width="1.700"/>
<rect x="144.0" y="434.1" width="13" height="13" rx="1.500" fill="#fff" stroke="#8c98ac" stroke-width="1.300"/><path d="M147.0 440.6h7" stroke="#111" stroke-width="1.700"/><path d="M150.5 437.1v7" stroke="#111" stroke-width="1.700"/>
<g transform="translate(100.0,240.0) scale(1.62)"><path d="M1 3h2v-2h2v2h5l4 4v6.500h-13z" fill="#f0d898" stroke="#141414" stroke-width="1.3" /><path d="M1 13.500v2h13" fill="none" stroke="#141414" stroke-width="1.3" /><circle cx="8" cy="9" r="3.2" fill="#fbf0c8" stroke="#141414" stroke-width="1.1" /><path d="M6.300 10.700l3.400-3.400" fill="none" stroke="#141414" stroke-width="1.2" /><path d="M15.500 12v3.500h-2" fill="none" stroke="#141414" stroke-width="1.1" /></g>
<g transform="translate(138.0,271.0) scale(1.6)"><path d="M4 1h10v10h-10z" fill="#90e4f4" stroke="#1a3c8a" stroke-width="1.3" /><path d="M4 11l-3 3M4 4l-2.500 2.500v8h8l2.500-2.500" fill="none" stroke="#1a3c8a" stroke-width="1.1" /><path d="M4 1v-1" fill="none" stroke="#141414" stroke-width="1" /></g>
<g transform="translate(137.0,303.0) scale(1.6)"><path d="M3 1v13h6M3 6h5" fill="none" stroke="#2a2a2a" stroke-width="1.2" /><path d="M1 .5l4.500 2-3 2.500zM6 4.500l5 2-3.500 3zM8 11l5.500 2.500-4 2.500z" fill="#1a2cc8" stroke="#0c0c86" stroke-width="0.6" /></g>
<g transform="translate(171.5,334.0) scale(1.6)"><path d="M1 1h7l3 3v6h-10z" fill="#3c6cf0" stroke="#0c0c86" stroke-width="1.2" /><g transform="translate(3,4)"><path d="M0 0h8l3.500 3.500v8h-11.500z" fill="#2c6cf0" stroke="#0c0c86" stroke-width="1.4" /><path d="M0 0h8l3.500 3.500h-8z" fill="#30c8f8" /><circle cx="4.8" cy="7.2" r="2.6" fill="#a8e8fc" stroke="#0c0c86" stroke-width="1.1" /><circle cx="5.5" cy="7.8" r="1.2" fill="#3878f0" /></g></g>
<g transform="translate(171.5,366.0) scale(1.6)"><g transform="translate(1.5,2)"><path d="M0 0h8l3.500 3.500v8h-11.500z" fill="#2c6cf0" stroke="#0c0c86" stroke-width="1.4" /><path d="M0 0h8l3.500 3.500h-8z" fill="#30c8f8" /><circle cx="4.8" cy="7.2" r="2.6" fill="#a8e8fc" stroke="#0c0c86" stroke-width="1.1" /><circle cx="5.5" cy="7.8" r="1.2" fill="#3878f0" /></g></g>
<g transform="translate(171.5,396.5) scale(1.6)"><path d="M1 1h7l3 3v6h-10z" fill="#3c6cf0" stroke="#0c0c86" stroke-width="1.2" /><g transform="translate(3,4)"><path d="M0 0h8l3.500 3.500v8h-11.500z" fill="#2c6cf0" stroke="#0c0c86" stroke-width="1.4" /><path d="M0 0h8l3.500 3.500h-8z" fill="#30c8f8" /><circle cx="4.8" cy="7.2" r="2.6" fill="#a8e8fc" stroke="#0c0c86" stroke-width="1.1" /><circle cx="5.5" cy="7.8" r="1.2" fill="#3878f0" /></g></g>
<g transform="translate(171.5,428.5) scale(1.6)"><g transform="translate(1.5,2)"><path d="M0 0h8l3.500 3.500v8h-11.500z" fill="#2c6cf0" stroke="#0c0c86" stroke-width="1.4" /><path d="M0 0h8l3.500 3.500h-8z" fill="#30c8f8" /><circle cx="4.8" cy="7.2" r="2.6" fill="#a8e8fc" stroke="#0c0c86" stroke-width="1.1" /><circle cx="5.5" cy="7.8" r="1.2" fill="#3878f0" /></g></g>
<g transform="translate(138.0,461.0) scale(1.5)"><circle cx="2.2" cy="2.2" r="1.7" fill="#7a8cf8" stroke="#2020b0" stroke-width="0.9" /><circle cx="2.2" cy="7.8" r="1.7" fill="#7a8cf8" stroke="#2020b0" stroke-width="0.9" /><circle cx="2.2" cy="13.399999999999999" r="1.7" fill="#7a8cf8" stroke="#2020b0" stroke-width="0.9" /><circle cx="7.8" cy="2.2" r="1.7" fill="#7a8cf8" stroke="#2020b0" stroke-width="0.9" /><circle cx="7.8" cy="7.8" r="1.7" fill="#7a8cf8" stroke="#2020b0" stroke-width="0.9" /><circle cx="7.8" cy="13.399999999999999" r="1.7" fill="#7a8cf8" stroke="#2020b0" stroke-width="0.9" /><circle cx="13.399999999999999" cy="2.2" r="1.7" fill="#7a8cf8" stroke="#2020b0" stroke-width="0.9" /><circle cx="13.399999999999999" cy="7.8" r="1.7" fill="#7a8cf8" stroke="#2020b0" stroke-width="0.9" /><circle cx="13.399999999999999" cy="13.399999999999999" r="1.7" fill="#7a8cf8" stroke="#2020b0" stroke-width="0.9" /></g>
<g transform="translate(138.0,492.0) scale(1.5)"><circle cx="2.2" cy="2.2" r="1.7" fill="#7a8cf8" stroke="#2020b0" stroke-width="0.9" /><circle cx="2.2" cy="7.8" r="1.7" fill="#7a8cf8" stroke="#2020b0" stroke-width="0.9" /><circle cx="2.2" cy="13.399999999999999" r="1.7" fill="#7a8cf8" stroke="#2020b0" stroke-width="0.9" /><circle cx="7.8" cy="2.2" r="1.7" fill="#7a8cf8" stroke="#2020b0" stroke-width="0.9" /><circle cx="7.8" cy="7.8" r="1.7" fill="#7a8cf8" stroke="#2020b0" stroke-width="0.9" /><circle cx="7.8" cy="13.399999999999999" r="1.7" fill="#7a8cf8" stroke="#2020b0" stroke-width="0.9" /><circle cx="13.399999999999999" cy="2.2" r="1.7" fill="#7a8cf8" stroke="#2020b0" stroke-width="0.9" /><circle cx="13.399999999999999" cy="7.8" r="1.7" fill="#7a8cf8" stroke="#2020b0" stroke-width="0.9" /><circle cx="13.399999999999999" cy="13.399999999999999" r="1.7" fill="#7a8cf8" stroke="#2020b0" stroke-width="0.9" /></g>
<g transform="translate(137.0,521.0) scale(1.6)"><path d="M1 5l5-4h8v10l-3 4h-10z" fill="#3c78f4" stroke="#0c0c86" stroke-width="1.3" /><path d="M1 5h7.500l5.500-4M8.500 5l2.500 10" fill="none" stroke="#0c0c86" stroke-width="1" /><path d="M1 5l5-4h8l-5.500 4z" fill="#30c8f8" /></g>
<text x="137" y="259" font-size="16.900" fill="#000" font-family="'DejaVu Sans Condensed','Liberation Sans',sans-serif">(+) Крюк пластинчатый Q=105 т (</text>
<text x="172" y="290" font-size="16.900" fill="#000" font-family="'DejaVu Sans Condensed','Liberation Sans',sans-serif">Системы координат</text>
<text x="172" y="321.7" font-size="16.900" fill="#000" font-family="'DejaVu Sans Condensed','Liberation Sans',sans-serif">(+) Компоненты</text>
<text x="208" y="353" font-size="16.900" fill="#000" font-family="'DejaVu Sans Condensed','Liberation Sans',sans-serif">(+) Пластина крюка (x8)</text>
<text x="208" y="384" font-size="16.900" fill="#000" font-family="'DejaVu Sans Condensed','Liberation Sans',sans-serif">(ф) Втулка</text>
<text x="208" y="415.5" font-size="16.900" fill="#000" font-family="'DejaVu Sans Condensed','Liberation Sans',sans-serif">(+) Заклёпка (x12)</text>
<text x="208" y="446.6" font-size="16.900" fill="#000" font-family="'DejaVu Sans Condensed','Liberation Sans',sans-serif">(ф) Накладка</text>
<text x="172" y="477.7" font-size="16.900" fill="#000" font-family="'DejaVu Sans Condensed','Liberation Sans',sans-serif">Массив по сетке:1</text>
<text x="172" y="509" font-size="16.900" fill="#000" font-family="'DejaVu Sans Condensed','Liberation Sans',sans-serif">Массив по сетке:2</text>
<text x="172" y="540" font-size="16.900" fill="#000" font-family="'DejaVu Sans Condensed','Liberation Sans',sans-serif">Фаска:1</text>
</svg>
<div style="left:428.5px;top:156.8px;width:1091px;height:869px;background:#fff;border:2.5px solid #6a6a68;border-right:1.5px solid #f0f0f0;border-bottom:1.5px solid #f0f0f0"></div>
<div style="left:431px;top:159.3px;width:1087px;height:865px;border:2.5px solid #8f8f8d;border-right:1px solid #d6d6d6;border-bottom:1px solid #d6d6d6"></div>
<svg style="left:0;top:0" width="1600" height="1200" viewBox="0 0 1600 1200">
<defs><linearGradient id="hg1" x1="0.2" y1="0.1" x2="0.8" y2="0.9"><stop offset="0" stop-color="#96858a"/><stop offset="0.4" stop-color="#cdb9bc"/><stop offset="0.75" stop-color="#f6eeee"/><stop offset="1" stop-color="#fff"/></linearGradient></defs>
<path d="M886.0,236.5L967.9,281.7L1004.2,261.1L922.3,215.9Z" fill="#faf0ee" stroke="#faf0ee" stroke-width="0.8"/>
<path d="M967.9,281.7L975.8,297.7L1012.1,277.1L1004.2,261.1Z" fill="#d3c5c3" stroke="#d3c5c3" stroke-width="0.8"/>
<path d="M975.8,297.7L975.8,400.0L1012.1,379.4L1012.1,277.1Z" fill="#b6a4a2" stroke="#b6a4a2" stroke-width="0.8"/>
<path d="M975.8,400.0L975.8,406.7L1012.1,386.1L1012.1,379.4Z" fill="#b6a4a2" stroke="#b6a4a2" stroke-width="0.8"/>
<path d="M975.8,406.7L975.8,416.3L1012.1,395.7L1012.1,386.1Z" fill="#b6a4a2" stroke="#b6a4a2" stroke-width="0.8"/>
<path d="M975.8,416.3L975.7,427.6L1012.0,407.0L1012.1,395.7Z" fill="#b6a4a2" stroke="#b6a4a2" stroke-width="0.8"/>
<path d="M975.7,427.6L975.7,439.2L1012.0,418.6L1012.0,407.0Z" fill="#b6a4a2" stroke="#b6a4a2" stroke-width="0.8"/>
<path d="M975.7,439.2L975.7,449.8L1012.0,429.2L1012.0,418.6Z" fill="#b6a4a2" stroke="#b6a4a2" stroke-width="0.8"/>
<path d="M975.7,449.8L975.8,458.3L1012.1,437.7L1012.0,429.2Z" fill="#b6a4a2" stroke="#b6a4a2" stroke-width="0.8"/>
<path d="M975.8,458.3L975.9,464.4L1012.2,443.8L1012.1,437.7Z" fill="#b6a4a2" stroke="#b6a4a2" stroke-width="0.8"/>
<path d="M975.9,464.4L976.0,469.1L1012.3,448.5L1012.2,443.8Z" fill="#b6a4a2" stroke="#b6a4a2" stroke-width="0.8"/>
<path d="M976.0,469.1L976.1,472.9L1012.4,452.3L1012.3,448.5Z" fill="#b6a4a2" stroke="#b6a4a2" stroke-width="0.8"/>
<path d="M976.1,472.9L976.2,476.2L1012.5,455.6L1012.4,452.3Z" fill="#b6a4a2" stroke="#b6a4a2" stroke-width="0.8"/>
<path d="M976.2,476.2L976.4,479.5L1012.7,458.9L1012.5,455.6Z" fill="#b6a4a2" stroke="#b6a4a2" stroke-width="0.8"/>
<path d="M976.4,479.5L976.7,483.3L1013.0,462.7L1012.7,458.9Z" fill="#b6a4a2" stroke="#b6a4a2" stroke-width="0.8"/>
<path d="M976.7,483.3L977.0,487.5L1013.3,466.9L1013.0,462.7Z" fill="#b6a4a2" stroke="#b6a4a2" stroke-width="0.8"/>
<path d="M977.0,487.5L977.4,491.6L1013.7,471.0L1013.3,466.9Z" fill="#b6a4a2" stroke="#b6a4a2" stroke-width="0.8"/>
<path d="M977.4,491.6L977.8,495.8L1014.1,475.2L1013.7,471.0Z" fill="#b6a4a2" stroke="#b6a4a2" stroke-width="0.8"/>
<path d="M977.8,495.8L978.2,500.0L1014.5,479.4L1014.1,475.2Z" fill="#b6a4a2" stroke="#b6a4a2" stroke-width="0.8"/>
<path d="M978.2,500.0L978.7,504.1L1015.0,483.5L1014.5,479.4Z" fill="#b6a4a2" stroke="#b6a4a2" stroke-width="0.8"/>
<path d="M978.7,504.1L979.2,508.3L1015.5,487.7L1015.0,483.5Z" fill="#b6a4a2" stroke="#b6a4a2" stroke-width="0.8"/>
<path d="M979.2,508.3L979.8,512.5L1016.1,491.9L1015.5,487.7Z" fill="#b6a4a2" stroke="#b6a4a2" stroke-width="0.8"/>
<path d="M979.8,512.5L980.4,516.6L1016.7,496.0L1016.1,491.9Z" fill="#b6a4a2" stroke="#b6a4a2" stroke-width="0.8"/>
<path d="M980.4,516.6L981.0,520.8L1017.3,500.2L1016.7,496.0Z" fill="#b6a4a2" stroke="#b6a4a2" stroke-width="0.8"/>
<path d="M981.0,520.8L981.7,525.0L1018.0,504.4L1017.3,500.2Z" fill="#b6a4a2" stroke="#b6a4a2" stroke-width="0.8"/>
<path d="M981.7,525.0L982.4,529.1L1018.7,508.5L1018.0,504.4Z" fill="#b6a4a2" stroke="#b6a4a2" stroke-width="0.8"/>
<path d="M982.4,529.1L983.3,533.3L1019.6,512.7L1018.7,508.5Z" fill="#b6a4a2" stroke="#b6a4a2" stroke-width="0.8"/>
<path d="M983.3,533.3L984.2,537.5L1020.5,516.9L1019.6,512.7Z" fill="#b6a4a2" stroke="#b6a4a2" stroke-width="0.8"/>
<path d="M984.2,537.5L985.3,541.7L1021.6,521.1L1020.5,516.9Z" fill="#b6a4a2" stroke="#b6a4a2" stroke-width="0.8"/>
<path d="M985.3,541.7L986.4,545.9L1022.7,525.3L1021.6,521.1Z" fill="#b7a5a3" stroke="#b7a5a3" stroke-width="0.8"/>
<path d="M986.4,545.9L987.6,550.1L1023.9,529.5L1022.7,525.3Z" fill="#b9a7a5" stroke="#b9a7a5" stroke-width="0.8"/>
<path d="M987.6,550.1L988.8,554.2L1025.1,533.6L1023.9,529.5Z" fill="#bba9a7" stroke="#bba9a7" stroke-width="0.8"/>
<path d="M988.8,554.2L990.0,558.3L1026.3,537.7L1025.1,533.6Z" fill="#bcaba9" stroke="#bcaba9" stroke-width="0.8"/>
<path d="M990.0,558.3L991.3,562.4L1027.6,541.8L1026.3,537.7Z" fill="#bfaeac" stroke="#bfaeac" stroke-width="0.8"/>
<path d="M991.3,562.4L992.7,566.4L1029.0,545.8L1027.6,541.8Z" fill="#c2b1af" stroke="#c2b1af" stroke-width="0.8"/>
<path d="M992.7,566.4L994.2,570.4L1030.5,549.8L1029.0,545.8Z" fill="#c4b3b1" stroke="#c4b3b1" stroke-width="0.8"/>
<path d="M994.2,570.4L995.6,574.3L1031.9,553.7L1030.5,549.8Z" fill="#c5b4b2" stroke="#c5b4b2" stroke-width="0.8"/>
<path d="M995.6,574.3L997.0,578.1L1033.3,557.5L1031.9,553.7Z" fill="#c4b4b2" stroke="#c4b4b2" stroke-width="0.8"/>
<path d="M997.0,578.1L998.3,581.7L1034.6,561.1L1033.3,557.5Z" fill="#c3b3b1" stroke="#c3b3b1" stroke-width="0.8"/>
<path d="M998.3,581.7L999.4,585.0L1035.7,564.4L1034.6,561.1Z" fill="#c1b1af" stroke="#c1b1af" stroke-width="0.8"/>
<path d="M999.4,585.0L1000.5,588.1L1036.8,567.5L1035.7,564.4Z" fill="#c0afad" stroke="#c0afad" stroke-width="0.8"/>
<path d="M1000.5,588.1L1001.4,591.1L1037.8,570.5L1036.8,567.5Z" fill="#c0afad" stroke="#c0afad" stroke-width="0.8"/>
<path d="M1001.4,591.1L1002.4,594.0L1038.7,573.4L1037.8,570.5Z" fill="#c0afad" stroke="#c0afad" stroke-width="0.8"/>
<path d="M1002.4,594.0L1003.4,596.9L1039.7,576.3L1038.7,573.4Z" fill="#c1b0ae" stroke="#c1b0ae" stroke-width="0.8"/>
<path d="M1003.4,596.9L1004.5,600.0L1040.8,579.4L1039.7,576.3Z" fill="#c2b2b0" stroke="#c2b2b0" stroke-width="0.8"/>
<path d="M1004.5,600.0L1005.6,603.0L1041.9,582.4L1040.8,579.4Z" fill="#c4b4b2" stroke="#c4b4b2" stroke-width="0.8"/>
<path d="M1005.6,603.0L1006.6,605.7L1042.9,585.1L1041.9,582.4Z" fill="#c5b5b3" stroke="#c5b5b3" stroke-width="0.8"/>
<path d="M1006.6,605.7L1007.6,608.4L1043.9,587.8L1042.9,585.1Z" fill="#c6b6b4" stroke="#c6b6b4" stroke-width="0.8"/>
<path d="M1007.6,608.4L1008.8,611.5L1045.1,590.9L1043.9,587.8Z" fill="#c6b6b4" stroke="#c6b6b4" stroke-width="0.8"/>
<path d="M1008.8,611.5L1010.2,615.3L1046.5,594.7L1045.1,590.9Z" fill="#c6b5b3" stroke="#c6b5b3" stroke-width="0.8"/>
<path d="M1010.2,615.3L1012.0,620.0L1048.3,599.4L1046.5,594.7Z" fill="#c5b4b2" stroke="#c5b4b2" stroke-width="0.8"/>
<path d="M1012.0,620.0L1014.2,625.9L1050.5,605.3L1048.3,599.4Z" fill="#c4b4b2" stroke="#c4b4b2" stroke-width="0.8"/>
<path d="M1014.2,625.9L1016.7,632.8L1053.0,612.2L1050.5,605.3Z" fill="#c4b4b2" stroke="#c4b4b2" stroke-width="0.8"/>
<path d="M1016.7,632.8L1019.5,640.4L1055.8,619.8L1053.0,612.2Z" fill="#c4b4b2" stroke="#c4b4b2" stroke-width="0.8"/>
<path d="M1019.5,640.4L1022.4,648.3L1058.7,627.7L1055.8,619.8Z" fill="#c4b4b2" stroke="#c4b4b2" stroke-width="0.8"/>
<path d="M1022.4,648.3L1025.2,656.3L1061.5,635.7L1058.7,627.7Z" fill="#c4b3b1" stroke="#c4b3b1" stroke-width="0.8"/>
<path d="M1025.2,656.3L1028.0,664.0L1064.3,643.4L1061.5,635.7Z" fill="#c3b3b1" stroke="#c3b3b1" stroke-width="0.8"/>
<path d="M1028.0,664.0L1030.7,671.6L1067.0,651.0L1064.3,643.4Z" fill="#c2b2b0" stroke="#c2b2b0" stroke-width="0.8"/>
<path d="M1030.7,671.6L1033.4,679.4L1069.7,658.8L1067.0,651.0Z" fill="#c2b1af" stroke="#c2b1af" stroke-width="0.8"/>
<path d="M1033.4,679.4L1036.1,687.3L1072.4,666.7L1069.7,658.8Z" fill="#c2b1af" stroke="#c2b1af" stroke-width="0.8"/>
<path d="M1036.1,687.3L1038.8,695.1L1075.1,674.5L1072.4,666.7Z" fill="#c1b1af" stroke="#c1b1af" stroke-width="0.8"/>
<path d="M1038.8,695.1L1041.4,702.7L1077.7,682.1L1075.1,674.5Z" fill="#c2b1af" stroke="#c2b1af" stroke-width="0.8"/>
<path d="M1041.4,702.7L1044.0,710.0L1080.3,689.4L1077.7,682.1Z" fill="#c2b2b0" stroke="#c2b2b0" stroke-width="0.8"/>
<path d="M1044.0,710.0L1046.5,717.0L1082.8,696.4L1080.3,689.4Z" fill="#c3b2b0" stroke="#c3b2b0" stroke-width="0.8"/>
<path d="M1046.5,717.0L1048.9,723.9L1085.2,703.3L1082.8,696.4Z" fill="#c3b2b0" stroke="#c3b2b0" stroke-width="0.8"/>
<path d="M1048.9,723.9L1051.3,730.6L1087.6,710.0L1085.2,703.3Z" fill="#c3b2b0" stroke="#c3b2b0" stroke-width="0.8"/>
<path d="M1051.3,730.6L1053.6,737.0L1089.9,716.4L1087.6,710.0Z" fill="#c3b3b1" stroke="#c3b3b1" stroke-width="0.8"/>
<path d="M1053.6,737.0L1055.8,743.2L1092.1,722.6L1089.9,716.4Z" fill="#c4b4b2" stroke="#c4b4b2" stroke-width="0.8"/>
<path d="M1055.8,743.2L1058.0,749.0L1094.3,728.4L1092.1,722.6Z" fill="#c5b4b2" stroke="#c5b4b2" stroke-width="0.8"/>
<path d="M1058.0,749.0L1060.1,754.5L1096.4,733.9L1094.3,728.4Z" fill="#c7b7b5" stroke="#c7b7b5" stroke-width="0.8"/>
<path d="M1060.1,754.5L1062.2,759.7L1098.5,739.1L1096.4,733.9Z" fill="#c9b9b7" stroke="#c9b9b7" stroke-width="0.8"/>
<path d="M1062.2,759.7L1064.2,764.6L1100.5,744.0L1098.5,739.1Z" fill="#cabab8" stroke="#cabab8" stroke-width="0.8"/>
<path d="M1064.2,764.6L1066.1,769.2L1102.4,748.6L1100.5,744.0Z" fill="#cabab8" stroke="#cabab8" stroke-width="0.8"/>
<path d="M1066.1,769.2L1067.9,773.7L1104.2,753.1L1102.4,748.6Z" fill="#c8b8b6" stroke="#c8b8b6" stroke-width="0.8"/>
<path d="M1067.9,773.7L1069.5,778.0L1105.8,757.4L1104.2,753.1Z" fill="#c5b4b2" stroke="#c5b4b2" stroke-width="0.8"/>
<path d="M1069.5,778.0L1070.9,782.1L1107.2,761.5L1105.8,757.4Z" fill="#c1b1af" stroke="#c1b1af" stroke-width="0.8"/>
<path d="M1070.9,782.1L1072.1,785.9L1108.4,765.3L1107.2,761.5Z" fill="#bfaeac" stroke="#bfaeac" stroke-width="0.8"/>
<path d="M1072.1,785.9L1073.2,789.4L1109.5,768.8L1108.4,765.3Z" fill="#bcaba9" stroke="#bcaba9" stroke-width="0.8"/>
<path d="M1073.2,789.4L1074.2,792.9L1110.5,772.3L1109.5,768.8Z" fill="#b9a8a6" stroke="#b9a8a6" stroke-width="0.8"/>
<path d="M1074.2,792.9L1075.1,796.4L1111.4,775.8L1110.5,772.3Z" fill="#b7a5a3" stroke="#b7a5a3" stroke-width="0.8"/>
<path d="M1075.1,796.4L1076.0,800.0L1112.3,779.4L1111.4,775.8Z" fill="#b6a4a2" stroke="#b6a4a2" stroke-width="0.8"/>
<path d="M1076.0,800.0L1076.8,803.7L1113.1,783.1L1112.3,779.4Z" fill="#b6a4a2" stroke="#b6a4a2" stroke-width="0.8"/>
<path d="M1076.8,803.7L1077.6,807.3L1113.9,786.7L1113.1,783.1Z" fill="#b6a4a2" stroke="#b6a4a2" stroke-width="0.8"/>
<path d="M1077.6,807.3L1078.4,810.9L1114.7,790.3L1113.9,786.7Z" fill="#b6a4a2" stroke="#b6a4a2" stroke-width="0.8"/>
<path d="M1078.4,810.9L1079.0,814.6L1115.3,794.0L1114.7,790.3Z" fill="#b6a4a2" stroke="#b6a4a2" stroke-width="0.8"/>
<path d="M1079.0,814.6L1079.5,818.3L1115.8,797.7L1115.3,794.0Z" fill="#b6a4a2" stroke="#b6a4a2" stroke-width="0.8"/>
<path d="M1079.5,818.3L1080.0,822.0L1116.3,801.4L1115.8,797.7Z" fill="#b6a4a2" stroke="#b6a4a2" stroke-width="0.8"/>
<path d="M1080.0,822.0L1080.3,825.8L1116.6,805.2L1116.3,801.4Z" fill="#b6a4a2" stroke="#b6a4a2" stroke-width="0.8"/>
<path d="M1080.3,825.8L1080.6,829.6L1116.9,809.0L1116.6,805.2Z" fill="#b6a4a2" stroke="#b6a4a2" stroke-width="0.8"/>
<path d="M1080.6,829.6L1080.7,833.4L1117.0,812.8L1116.9,809.0Z" fill="#b6a4a2" stroke="#b6a4a2" stroke-width="0.8"/>
<path d="M1080.7,833.4L1080.8,837.3L1117.1,816.7L1117.0,812.8Z" fill="#b6a4a2" stroke="#b6a4a2" stroke-width="0.8"/>
<path d="M1080.8,837.3L1080.8,841.2L1117.1,820.6L1117.1,816.7Z" fill="#b6a4a2" stroke="#b6a4a2" stroke-width="0.8"/>
<path d="M1080.8,841.2L1080.8,845.0L1117.1,824.4L1117.1,820.6Z" fill="#b6a4a2" stroke="#b6a4a2" stroke-width="0.8"/>
<path d="M1080.8,845.0L1080.7,848.8L1117.0,828.2L1117.1,824.4Z" fill="#b6a4a2" stroke="#b6a4a2" stroke-width="0.8"/>
<path d="M1080.7,848.8L1080.6,852.7L1116.9,832.1L1117.0,828.2Z" fill="#b6a4a2" stroke="#b6a4a2" stroke-width="0.8"/>
<path d="M1080.6,852.7L1080.4,856.6L1116.7,836.0L1116.9,832.1Z" fill="#b6a4a2" stroke="#b6a4a2" stroke-width="0.8"/>
<path d="M1080.4,856.6L1080.2,860.4L1116.5,839.8L1116.7,836.0Z" fill="#b6a4a2" stroke="#b6a4a2" stroke-width="0.8"/>
<path d="M1080.2,860.4L1079.9,864.2L1116.2,843.6L1116.5,839.8Z" fill="#b6a4a2" stroke="#b6a4a2" stroke-width="0.8"/>
<path d="M1079.9,864.2L1079.5,868.0L1115.8,847.4L1116.2,843.6Z" fill="#b6a4a2" stroke="#b6a4a2" stroke-width="0.8"/>
<path d="M1079.5,868.0L1079.1,871.8L1115.4,851.2L1115.8,847.4Z" fill="#b6a4a2" stroke="#b6a4a2" stroke-width="0.8"/>
<path d="M1079.1,871.8L1078.6,875.6L1114.9,855.0L1115.4,851.2Z" fill="#b6a4a2" stroke="#b6a4a2" stroke-width="0.8"/>
<path d="M1078.6,875.6L1078.0,879.3L1114.3,858.7L1114.9,855.0Z" fill="#b6a4a2" stroke="#b6a4a2" stroke-width="0.8"/>
<path d="M1078.0,879.3L1077.4,883.0L1113.7,862.4L1114.3,858.7Z" fill="#b6a4a2" stroke="#b6a4a2" stroke-width="0.8"/>
<path d="M1077.4,883.0L1076.8,886.6L1113.1,866.0L1113.7,862.4Z" fill="#b6a4a2" stroke="#b6a4a2" stroke-width="0.8"/>
<path d="M1076.8,886.6L1076.0,890.0L1112.3,869.4L1113.1,866.0Z" fill="#b6a4a2" stroke="#b6a4a2" stroke-width="0.8"/>
<path d="M1076.0,890.0L1075.2,893.3L1111.5,872.7L1112.3,869.4Z" fill="#b6a4a2" stroke="#b6a4a2" stroke-width="0.8"/>
<path d="M1075.2,893.3L1074.3,896.5L1110.6,875.9L1111.5,872.7Z" fill="#b6a4a2" stroke="#b6a4a2" stroke-width="0.8"/>
<path d="M1074.3,896.5L1073.3,899.6L1109.6,879.0L1110.6,875.9Z" fill="#b6a4a2" stroke="#b6a4a2" stroke-width="0.8"/>
<path d="M1073.3,899.6L1072.2,902.6L1108.5,882.0L1109.6,879.0Z" fill="#b6a4a2" stroke="#b6a4a2" stroke-width="0.8"/>
<path d="M1072.2,902.6L1071.1,905.4L1107.4,884.8L1108.5,882.0Z" fill="#b6a4a2" stroke="#b6a4a2" stroke-width="0.8"/>
<path d="M1071.1,905.4L1070.0,908.0L1106.3,887.4L1107.4,884.8Z" fill="#b6a4a2" stroke="#b6a4a2" stroke-width="0.8"/>
<path d="M1070.0,908.0L1068.8,910.4L1105.1,889.8L1106.3,887.4Z" fill="#b6a4a2" stroke="#b6a4a2" stroke-width="0.8"/>
<path d="M1068.8,910.4L1067.6,912.5L1103.9,891.9L1105.1,889.8Z" fill="#b6a4a2" stroke="#b6a4a2" stroke-width="0.8"/>
<path d="M1067.6,912.5L1066.2,914.4L1102.5,893.8L1103.9,891.9Z" fill="#b6a4a2" stroke="#b6a4a2" stroke-width="0.8"/>
<path d="M1066.2,914.4L1064.9,916.3L1101.2,895.7L1102.5,893.8Z" fill="#b6a4a2" stroke="#b6a4a2" stroke-width="0.8"/>
<path d="M1064.9,916.3L1063.5,918.1L1099.8,897.5L1101.2,895.7Z" fill="#b6a4a2" stroke="#b6a4a2" stroke-width="0.8"/>
<path d="M1063.5,918.1L1062.0,920.0L1098.3,899.4L1099.8,897.5Z" fill="#b6a4a2" stroke="#b6a4a2" stroke-width="0.8"/>
<path d="M1062.0,920.0L1060.5,921.9L1096.8,901.3L1098.3,899.4Z" fill="#b6a4a2" stroke="#b6a4a2" stroke-width="0.8"/>
<path d="M1060.5,921.9L1058.9,923.9L1095.2,903.3L1096.8,901.3Z" fill="#b6a4a2" stroke="#b6a4a2" stroke-width="0.8"/>
<path d="M1058.9,923.9L1057.2,925.8L1093.5,905.1L1095.2,903.3Z" fill="#b6a4a2" stroke="#b6a4a2" stroke-width="0.8"/>
<path d="M1057.2,925.8L1055.6,927.6L1091.9,907.0L1093.5,905.1Z" fill="#b6a4a2" stroke="#b6a4a2" stroke-width="0.8"/>
<path d="M1055.6,927.6L1053.8,929.4L1090.1,908.8L1091.9,907.0Z" fill="#b6a4a2" stroke="#b6a4a2" stroke-width="0.8"/>
<path d="M1053.8,929.4L1052.0,931.0L1088.3,910.4L1090.1,908.8Z" fill="#b6a4a2" stroke="#b6a4a2" stroke-width="0.8"/>
<path d="M1052.0,931.0L1050.2,932.5L1086.5,911.9L1088.3,910.4Z" fill="#b6a4a2" stroke="#b6a4a2" stroke-width="0.8"/>
<path d="M1050.2,932.5L1048.3,934.0L1084.6,913.4L1086.5,911.9Z" fill="#b6a4a2" stroke="#b6a4a2" stroke-width="0.8"/>
<path d="M1048.3,934.0L1046.4,935.4L1082.7,914.8L1084.6,913.4Z" fill="#b6a4a2" stroke="#b6a4a2" stroke-width="0.8"/>
<path d="M1046.4,935.4L1044.4,936.7L1080.7,916.1L1082.7,914.8Z" fill="#b6a4a2" stroke="#b6a4a2" stroke-width="0.8"/>
<path d="M841.3,671.3L842.3,670.8L877.3,651.8L876.3,652.3Z" fill="#faf0ee" stroke="#faf0ee" stroke-width="0.8"/>
<path d="M842.3,670.8L843.5,670.5L878.5,651.5L877.3,651.8Z" fill="#faf0ee" stroke="#faf0ee" stroke-width="0.8"/>
<path d="M843.5,670.5L844.9,670.5L879.9,651.5L878.5,651.5Z" fill="#faf0ee" stroke="#faf0ee" stroke-width="0.8"/>
<path d="M844.9,670.5L846.4,670.7L881.4,651.7L879.9,651.5Z" fill="#faf0ee" stroke="#faf0ee" stroke-width="0.8"/>
<path d="M846.4,670.7L848.0,671.1L883.0,652.1L881.4,651.7Z" fill="#faf0ee" stroke="#faf0ee" stroke-width="0.8"/>
<path d="M848.0,671.1L849.7,671.6L884.7,652.6L883.0,652.1Z" fill="#faf0ee" stroke="#faf0ee" stroke-width="0.8"/>
<path d="M849.7,671.6L851.4,672.2L886.4,653.2L884.7,652.6Z" fill="#faf0ee" stroke="#faf0ee" stroke-width="0.8"/>
<path d="M851.4,672.2L853.0,673.0L888.0,654.0L886.4,653.2Z" fill="#faf0ee" stroke="#faf0ee" stroke-width="0.8"/>
<path d="M853.0,673.0L854.6,673.9L889.6,654.9L888.0,654.0Z" fill="#faf0ee" stroke="#faf0ee" stroke-width="0.8"/>
<path d="M854.6,673.9L856.1,674.9L891.1,655.9L889.6,654.9Z" fill="#faf0ee" stroke="#faf0ee" stroke-width="0.8"/>
<path d="M856.1,674.9L857.7,676.0L892.7,657.0L891.1,655.9Z" fill="#faf0ee" stroke="#faf0ee" stroke-width="0.8"/>
<path d="M857.7,676.0L859.2,677.3L894.2,658.3L892.7,657.0Z" fill="#faf0ee" stroke="#faf0ee" stroke-width="0.8"/>
<path d="M859.2,677.3L860.6,678.6L895.6,659.6L894.2,658.3Z" fill="#faf0ee" stroke="#faf0ee" stroke-width="0.8"/>
<path d="M860.6,678.6L862.0,680.0L897.0,661.0L895.6,659.6Z" fill="#faf0ee" stroke="#faf0ee" stroke-width="0.8"/>
<path d="M862.0,680.0L863.3,681.5L898.3,662.5L897.0,661.0Z" fill="#f0e5e4" stroke="#f0e5e4" stroke-width="0.8"/>
<path d="M863.3,681.5L864.5,683.1L899.5,664.1L898.3,662.5Z" fill="#e5d9d8" stroke="#e5d9d8" stroke-width="0.8"/>
<path d="M864.5,683.1L865.6,684.8L900.6,665.8L899.5,664.1Z" fill="#ddd0d0" stroke="#ddd0d0" stroke-width="0.8"/>
<path d="M865.6,684.8L866.7,686.6L901.7,667.6L900.6,665.8Z" fill="#d9cccc" stroke="#d9cccc" stroke-width="0.8"/>
<path d="M866.7,686.6L867.9,688.3L902.9,669.3L901.7,667.6Z" fill="#d9cccc" stroke="#d9cccc" stroke-width="0.8"/>
<path d="M867.9,688.3L869.0,690.0L904.0,671.0L902.9,669.3Z" fill="#ddd0d0" stroke="#ddd0d0" stroke-width="0.8"/>
<path d="M869.0,690.0L870.2,691.6L905.2,672.6L904.0,671.0Z" fill="#e3d7d7" stroke="#e3d7d7" stroke-width="0.8"/>
<path d="M870.2,691.6L871.4,693.1L906.4,674.1L905.2,672.6Z" fill="#e7dcdb" stroke="#e7dcdb" stroke-width="0.8"/>
<path d="M871.4,693.1L872.5,694.7L907.5,675.7L906.4,674.1Z" fill="#e7dcdb" stroke="#e7dcdb" stroke-width="0.8"/>
<path d="M872.5,694.7L873.7,696.3L908.7,677.3L907.5,675.7Z" fill="#e3d7d7" stroke="#e3d7d7" stroke-width="0.8"/>
<path d="M873.7,696.3L874.9,698.0L909.9,679.0L908.7,677.3Z" fill="#dccfcf" stroke="#dccfcf" stroke-width="0.8"/>
<path d="M874.9,698.0L876.0,700.0L911.0,681.0L909.9,679.0Z" fill="#d2c4c4" stroke="#d2c4c4" stroke-width="0.8"/>
<path d="M876.0,700.0L877.1,702.2L912.1,683.2L911.0,681.0Z" fill="#c8baba" stroke="#c8baba" stroke-width="0.8"/>
<path d="M877.1,702.2L878.2,704.6L913.2,685.6L912.1,683.2Z" fill="#c1b2b3" stroke="#c1b2b3" stroke-width="0.8"/>
<path d="M878.2,704.6L879.3,707.1L914.3,688.1L913.2,685.6Z" fill="#bcadae" stroke="#bcadae" stroke-width="0.8"/>
<path d="M879.3,707.1L880.4,709.7L915.4,690.7L914.3,688.1Z" fill="#b9a9ab" stroke="#b9a9ab" stroke-width="0.8"/>
<path d="M880.4,709.7L881.5,712.3L916.5,693.3L915.4,690.7Z" fill="#b7a7a9" stroke="#b7a7a9" stroke-width="0.8"/>
<path d="M881.5,712.3L882.5,715.0L917.5,696.0L916.5,693.3Z" fill="#b6a6a7" stroke="#b6a6a7" stroke-width="0.8"/>
<path d="M882.5,715.0L883.5,717.7L918.5,698.7L917.5,696.0Z" fill="#b3a3a5" stroke="#b3a3a5" stroke-width="0.8"/>
<path d="M883.5,717.7L884.5,720.5L919.5,701.5L918.5,698.7Z" fill="#af9fa1" stroke="#af9fa1" stroke-width="0.8"/>
<path d="M884.5,720.5L885.5,723.3L920.5,704.3L919.5,701.5Z" fill="#ad9c9f" stroke="#ad9c9f" stroke-width="0.8"/>
<path d="M885.5,723.3L886.4,726.2L921.4,707.2L920.5,704.3Z" fill="#ad9c9e" stroke="#ad9c9e" stroke-width="0.8"/>
<path d="M886.4,726.2L887.4,729.1L922.4,710.1L921.4,707.2Z" fill="#ae9d9f" stroke="#ae9d9f" stroke-width="0.8"/>
<path d="M887.4,729.1L888.5,732.0L923.5,713.0L922.4,710.1Z" fill="#b0a0a2" stroke="#b0a0a2" stroke-width="0.8"/>
<path d="M888.5,732.0L889.6,734.9L924.6,715.9L923.5,713.0Z" fill="#b2a2a4" stroke="#b2a2a4" stroke-width="0.8"/>
<path d="M889.6,734.9L890.7,737.9L925.7,718.9L924.6,715.9Z" fill="#b3a3a5" stroke="#b3a3a5" stroke-width="0.8"/>
<path d="M890.7,737.9L891.8,740.8L926.8,721.8L925.7,718.9Z" fill="#b4a4a6" stroke="#b4a4a6" stroke-width="0.8"/>
<path d="M891.8,740.8L893.0,743.8L928.0,724.8L926.8,721.8Z" fill="#b5a5a7" stroke="#b5a5a7" stroke-width="0.8"/>
<path d="M893.0,743.8L894.2,746.9L929.2,727.9L928.0,724.8Z" fill="#b6a7a8" stroke="#b6a7a8" stroke-width="0.8"/>
<path d="M894.2,746.9L895.5,750.0L930.5,731.0L929.2,727.9Z" fill="#b8a8a9" stroke="#b8a8a9" stroke-width="0.8"/>
<path d="M895.5,750.0L896.8,753.3L931.8,734.3L930.5,731.0Z" fill="#b7a7a9" stroke="#b7a7a9" stroke-width="0.8"/>
<path d="M896.8,753.3L898.2,756.7L933.2,737.7L931.8,734.3Z" fill="#b7a7a9" stroke="#b7a7a9" stroke-width="0.8"/>
<path d="M898.2,756.7L899.6,760.2L934.6,741.2L933.2,737.7Z" fill="#b8a8a9" stroke="#b8a8a9" stroke-width="0.8"/>
<path d="M899.6,760.2L901.1,763.7L936.1,744.7L934.6,741.2Z" fill="#baaaac" stroke="#baaaac" stroke-width="0.8"/>
<path d="M901.1,763.7L902.5,767.0L937.5,748.0L936.1,744.7Z" fill="#beafb0" stroke="#beafb0" stroke-width="0.8"/>
<path d="M902.5,767.0L904.0,770.0L939.0,751.0L937.5,748.0Z" fill="#c4b6b7" stroke="#c4b6b7" stroke-width="0.8"/>
<path d="M904.0,770.0L905.4,772.7L940.4,753.7L939.0,751.0Z" fill="#cbbdbe" stroke="#cbbdbe" stroke-width="0.8"/>
<path d="M905.4,772.7L906.9,775.2L941.9,756.2L940.4,753.7Z" fill="#d1c3c3" stroke="#d1c3c3" stroke-width="0.8"/>
<path d="M906.9,775.2L908.3,777.6L943.3,758.6L941.9,756.2Z" fill="#d7caca" stroke="#d7caca" stroke-width="0.8"/>
<path d="M908.3,777.6L909.8,779.8L944.8,760.8L943.3,758.6Z" fill="#ddd0d0" stroke="#ddd0d0" stroke-width="0.8"/>
<path d="M909.8,779.8L911.4,781.9L946.4,762.9L944.8,760.8Z" fill="#e3d7d6" stroke="#e3d7d6" stroke-width="0.8"/>
<path d="M911.4,781.9L913.0,784.0L948.0,765.0L946.4,762.9Z" fill="#e8dddc" stroke="#e8dddc" stroke-width="0.8"/>
<path d="M913.0,784.0L914.7,786.1L949.7,767.1L948.0,765.0Z" fill="#ece1e0" stroke="#ece1e0" stroke-width="0.8"/>
<path d="M914.7,786.1L916.4,788.0L951.4,769.0L949.7,767.1Z" fill="#f1e6e5" stroke="#f1e6e5" stroke-width="0.8"/>
<path d="M916.4,788.0L918.2,789.9L953.2,770.9L951.4,769.0Z" fill="#f7eceb" stroke="#f7eceb" stroke-width="0.8"/>
<path d="M918.2,789.9L920.0,791.7L955.0,772.7L953.2,770.9Z" fill="#faf0ee" stroke="#faf0ee" stroke-width="0.8"/>
<path d="M920.0,791.7L922.0,793.4L957.0,774.4L955.0,772.7Z" fill="#faf0ee" stroke="#faf0ee" stroke-width="0.8"/>
<path d="M922.0,793.4L924.0,795.0L959.0,776.0L957.0,774.4Z" fill="#faf0ee" stroke="#faf0ee" stroke-width="0.8"/>
<path d="M924.0,795.0L926.2,796.5L961.2,777.5L959.0,776.0Z" fill="#faf0ee" stroke="#faf0ee" stroke-width="0.8"/>
<path d="M926.2,796.5L928.4,797.9L963.4,778.9L961.2,777.5Z" fill="#faf0ee" stroke="#faf0ee" stroke-width="0.8"/>
<path d="M928.4,797.9L930.8,799.2L965.8,780.2L963.4,778.9Z" fill="#faf0ee" stroke="#faf0ee" stroke-width="0.8"/>
<path d="M930.8,799.2L933.2,800.4L968.2,781.4L965.8,780.2Z" fill="#faf0ee" stroke="#faf0ee" stroke-width="0.8"/>
<path d="M933.2,800.4L935.6,801.3L970.6,782.3L968.2,781.4Z" fill="#faf0ee" stroke="#faf0ee" stroke-width="0.8"/>
<path d="M935.6,801.3L938.0,802.0L973.0,783.0L970.6,782.3Z" fill="#faf0ee" stroke="#faf0ee" stroke-width="0.8"/>
<path d="M938.0,802.0L940.4,802.4L975.4,783.4L973.0,783.0Z" fill="#faf0ee" stroke="#faf0ee" stroke-width="0.8"/>
<path d="M940.4,802.4L942.9,802.7L977.9,783.7L975.4,783.4Z" fill="#faf0ee" stroke="#faf0ee" stroke-width="0.8"/>
<path d="M942.9,802.7L945.4,802.7L980.4,783.7L977.9,783.7Z" fill="#faf0ee" stroke="#faf0ee" stroke-width="0.8"/>
<path d="M945.4,802.7L947.8,802.5L982.8,783.5L980.4,783.7Z" fill="#faf0ee" stroke="#faf0ee" stroke-width="0.8"/>
<path d="M947.8,802.5L950.0,802.1L985.0,783.1L982.8,783.5Z" fill="#faf0ee" stroke="#faf0ee" stroke-width="0.8"/>
<path d="M950.0,802.1L952.0,801.5L987.0,782.5L985.0,783.1Z" fill="#faf0ee" stroke="#faf0ee" stroke-width="0.8"/>
<path d="M952.0,801.5L953.7,800.6L988.7,781.6L987.0,782.5Z" fill="#faf0ee" stroke="#faf0ee" stroke-width="0.8"/>
<defs><path id="hkA" d="M886.0,236.5L967.9,281.7L975.8,297.7"/><path id="hkB" d="M975.8,297.7L975.8,400.0L975.8,406.7L975.8,416.3L975.7,427.6L975.7,439.2L975.7,449.8L975.8,458.3L975.9,464.4L976.0,469.1L976.1,472.9L976.2,476.2L976.4,479.5L976.7,483.3L977.0,487.5L977.4,491.6L977.8,495.8L978.2,500.0L978.7,504.1L979.2,508.3L979.8,512.5L980.4,516.6L981.0,520.8L981.7,525.0L982.4,529.1L983.3,533.3L984.2,537.5L985.3,541.7L986.4,545.9L987.6,550.1L988.8,554.2L990.0,558.3L991.3,562.4L992.7,566.4L994.2,570.4L995.6,574.3L997.0,578.1L998.3,581.7L999.4,585.0L1000.5,588.1L1001.4,591.1L1002.4,594.0L1003.4,596.9L1004.5,600.0L1005.6,603.0L1006.6,605.7L1007.6,608.4L1008.8,611.5L1010.2,615.3L1012.0,620.0L1014.2,625.9L1016.7,632.8L1019.5,640.4L1022.4,648.3L1025.2,656.3L1028.0,664.0L1030.7,671.6L1033.4,679.4L1036.1,687.3L1038.8,695.1L1041.4,702.7L1044.0,710.0L1046.5,717.0L1048.9,723.9L1051.3,730.6L1053.6,737.0L1055.8,743.2L1058.0,749.0L1060.1,754.5L1062.2,759.7L1064.2,764.6L1066.1,769.2L1067.9,773.7L1069.5,778.0L1070.9,782.1L1072.1,785.9L1073.2,789.4L1074.2,792.9L1075.1,796.4L1076.0,800.0L1076.8,803.7L1077.6,807.3L1078.4,810.9L1079.0,814.6L1079.5,818.3L1080.0,822.0L1080.3,825.8L1080.6,829.6L1080.7,833.4L1080.8,837.3L1080.8,841.2L1080.8,845.0L1080.7,848.8L1080.6,852.7L1080.4,856.6L1080.2,860.4L1079.9,864.2L1079.5,868.0L1079.1,871.8L1078.6,875.6L1078.0,879.3L1077.4,883.0L1076.8,886.6L1076.0,890.0L1075.2,893.3L1074.3,896.5L1073.3,899.6L1072.2,902.6L1071.1,905.4L1070.0,908.0L1068.8,910.4L1067.6,912.5L1066.2,914.4L1064.9,916.3L1063.5,918.1L1062.0,920.0L1060.5,921.9L1058.9,923.9L1057.2,925.8L1055.6,927.6L1053.8,929.4L1052.0,931.0L1050.2,932.5L1048.3,934.0L1046.4,935.4L1044.4,936.7"/><path id="hkT" d="M841.3,671.3L842.3,670.8L843.5,670.5L844.9,670.5L846.4,670.7L848.0,671.1L849.7,671.6L851.4,672.2L853.0,673.0L854.6,673.9L856.1,674.9L857.7,676.0L859.2,677.3L860.6,678.6L862.0,680.0L863.3,681.5L864.5,683.1L865.6,684.8L866.7,686.6L867.9,688.3L869.0,690.0L870.2,691.6L871.4,693.1L872.5,694.7L873.7,696.3L874.9,698.0L876.0,700.0L877.1,702.2L878.2,704.6L879.3,707.1L880.4,709.7L881.5,712.3L882.5,715.0L883.5,717.7L884.5,720.5L885.5,723.3L886.4,726.2L887.4,729.1L888.5,732.0L889.6,734.9L890.7,737.9L891.8,740.8L893.0,743.8L894.2,746.9L895.5,750.0L896.8,753.3L898.2,756.7L899.6,760.2L901.1,763.7L902.5,767.0L904.0,770.0L905.4,772.7L906.9,775.2L908.3,777.6L909.8,779.8L911.4,781.9L913.0,784.0L914.7,786.1L916.4,788.0L918.2,789.9L920.0,791.7L922.0,793.4L924.0,795.0L926.2,796.5L928.4,797.9L930.8,799.2L933.2,800.4L935.6,801.3L938.0,802.0L940.4,802.4L942.9,802.7L945.4,802.7L947.8,802.5L950.0,802.1L952.0,801.5L953.7,800.6"/></defs>
<g fill="none" stroke="#1e1212" stroke-linejoin="round">
<use href="#hkA" transform="translate(4.54,-2.58)" stroke-width="1.550"/><use href="#hkB" transform="translate(4.54,-2.58)" stroke-width="2.150"/>
<use href="#hkA" transform="translate(9.07,-5.15)" stroke-width="1.550"/><use href="#hkB" transform="translate(9.07,-5.15)" stroke-width="2.150"/>
<use href="#hkA" transform="translate(13.61,-7.73)" stroke-width="1.550"/><use href="#hkB" transform="translate(13.61,-7.73)" stroke-width="2.150"/>
<use href="#hkA" transform="translate(18.15,-10.30)" stroke-width="1.550"/><use href="#hkB" transform="translate(18.15,-10.30)" stroke-width="2.150"/>
<use href="#hkA" transform="translate(22.69,-12.88)" stroke-width="1.550"/><use href="#hkB" transform="translate(22.69,-12.88)" stroke-width="2.150"/>
<use href="#hkA" transform="translate(27.22,-15.45)" stroke-width="1.550"/><use href="#hkB" transform="translate(27.22,-15.45)" stroke-width="2.150"/>
<use href="#hkA" transform="translate(31.76,-18.03)" stroke-width="1.550"/><use href="#hkB" transform="translate(31.76,-18.03)" stroke-width="2.150"/>
<use href="#hkA" transform="translate(36.30,-20.60)" stroke-width="1.550"/><use href="#hkB" transform="translate(36.30,-20.60)" stroke-width="2.150"/>
<use href="#hkT" transform="translate(35.0,-19.0)" stroke-width="1.5"/>
</g>
<path d="M886.0,236.5l36.3,-20.6" stroke="#1e1212" stroke-width="1.4" fill="none"/>
<path d="M1044.4,936.7l36.3,-20.6" stroke="#1e1212" stroke-width="1.4" fill="none"/>
<path d="M841.3,671.3l35.0,-19.0" stroke="#1e1212" stroke-width="1.4" fill="none"/>
<path d="M953.7,800.6l35.0,-19.0" stroke="#1e1212" stroke-width="1.4" fill="none"/>
<path d="M975.8,458.3l36.3,-20.6" stroke="#1e1212" stroke-width="1.4" fill="none"/>
<path d="M998.3,581.7l36.3,-20.6" stroke="#1e1212" stroke-width="1.4" fill="none"/>
<path d="M1069.5,778.0l36.3,-20.6" stroke="#1e1212" stroke-width="1.4" fill="none"/>
<path d="M876.0,700.0l35.0,-19.0" stroke="#1e1212" stroke-width="1.4" fill="none"/>
<path d="M897.5,755.5l35.0,-19.0" stroke="#1e1212" stroke-width="1.4" fill="none"/>
<path d="M877.1,242.5L886.0,236.5L967.9,281.7L975.8,297.7L975.8,400.0L975.8,406.7L975.8,416.3L975.7,427.6L975.7,439.2L975.7,449.8L975.8,458.3L975.9,464.4L976.0,469.1L976.1,472.9L976.2,476.2L976.4,479.5L976.7,483.3L977.0,487.5L977.4,491.6L977.8,495.8L978.2,500.0L978.7,504.1L979.2,508.3L979.8,512.5L980.4,516.6L981.0,520.8L981.7,525.0L982.4,529.1L983.3,533.3L984.2,537.5L985.3,541.7L986.4,545.9L987.6,550.1L988.8,554.2L990.0,558.3L991.3,562.4L992.7,566.4L994.2,570.4L995.6,574.3L997.0,578.1L998.3,581.7L999.4,585.0L1000.5,588.1L1001.4,591.1L1002.4,594.0L1003.4,596.9L1004.5,600.0L1005.6,603.0L1006.6,605.7L1007.6,608.4L1008.8,611.5L1010.2,615.3L1012.0,620.0L1014.2,625.9L1016.7,632.8L1019.5,640.4L1022.4,648.3L1025.2,656.3L1028.0,664.0L1030.7,671.6L1033.4,679.4L1036.1,687.3L1038.8,695.1L1041.4,702.7L1044.0,710.0L1046.5,717.0L1048.9,723.9L1051.3,730.6L1053.6,737.0L1055.8,743.2L1058.0,749.0L1060.1,754.5L1062.2,759.7L1064.2,764.6L1066.1,769.2L1067.9,773.7L1069.5,778.0L1070.9,782.1L1072.1,785.9L1073.2,789.4L1074.2,792.9L1075.1,796.4L1076.0,800.0L1076.8,803.7L1077.6,807.3L1078.4,810.9L1079.0,814.6L1079.5,818.3L1080.0,822.0L1080.3,825.8L1080.6,829.6L1080.7,833.4L1080.8,837.3L1080.8,841.2L1080.8,845.0L1080.7,848.8L1080.6,852.7L1080.4,856.6L1080.2,860.4L1079.9,864.2L1079.5,868.0L1079.1,871.8L1078.6,875.6L1078.0,879.3L1077.4,883.0L1076.8,886.6L1076.0,890.0L1075.2,893.3L1074.3,896.5L1073.3,899.6L1072.2,902.6L1071.1,905.4L1070.0,908.0L1068.8,910.4L1067.6,912.5L1066.2,914.4L1064.9,916.3L1063.5,918.1L1062.0,920.0L1060.5,921.9L1058.9,923.9L1057.2,925.8L1055.6,927.6L1053.8,929.4L1052.0,931.0L1050.2,932.5L1048.3,934.0L1046.4,935.4L1044.4,936.7L1042.3,937.9L1040.0,939.0L1037.5,940.1L1034.9,941.1L1032.2,942.1L1029.3,942.9L1026.2,943.6L1023.0,944.0L1019.5,944.2L1015.8,944.1L1011.9,943.9L1008.0,943.5L1004.0,943.0L1000.0,942.4L996.1,941.7L992.1,940.8L988.2,939.8L984.2,938.7L980.1,937.4L976.0,936.0L971.8,934.4L967.5,932.7L963.1,930.9L958.7,928.8L954.4,926.5L950.0,924.0L945.6,921.2L941.3,918.1L936.9,914.9L932.5,911.4L928.2,907.8L924.0,904.0L919.9,900.1L915.8,895.9L911.8,891.6L907.8,887.2L903.9,882.6L900.0,878.0L896.1,873.2L892.3,868.2L888.5,863.1L884.8,858.0L881.3,852.9L878.0,848.0L874.9,843.2L872.1,838.4L869.4,833.6L866.8,829.0L864.4,824.4L862.0,820.0L859.7,815.8L857.6,811.9L855.6,808.1L853.7,804.3L851.8,800.3L850.0,796.0L848.2,791.4L846.4,786.5L844.7,781.4L843.0,776.3L841.4,771.1L840.0,766.0L838.7,760.8L837.4,755.6L836.3,750.3L835.3,745.1L834.3,739.9L833.5,735.0L832.8,730.0L832.2,724.8L831.7,719.7L831.4,715.1L831.0,711.2L830.8,708.3L830.5,702.5L835.5,703.5L833.8,697.0L833.8,695.0L833.7,692.2L833.6,688.8L833.6,685.4L833.7,682.4L834.0,680.0L834.4,678.4L835.0,677.3L835.7,676.4L836.4,675.8L837.2,675.2L838.0,674.5L838.8,673.7L839.6,672.8L840.4,672.0L841.3,671.3L842.3,670.8L843.5,670.5L844.9,670.5L846.4,670.7L848.0,671.1L849.7,671.6L851.4,672.2L853.0,673.0L854.6,673.9L856.1,674.9L857.7,676.0L859.2,677.3L860.6,678.6L862.0,680.0L863.3,681.5L864.5,683.1L865.6,684.8L866.7,686.6L867.9,688.3L869.0,690.0L870.2,691.6L871.4,693.1L872.5,694.7L873.7,696.3L874.9,698.0L876.0,700.0L877.1,702.2L878.2,704.6L879.3,707.1L880.4,709.7L881.5,712.3L882.5,715.0L883.5,717.7L884.5,720.5L885.5,723.3L886.4,726.2L887.4,729.1L888.5,732.0L889.6,734.9L890.7,737.9L891.8,740.8L893.0,743.8L894.2,746.9L895.5,750.0L896.8,753.3L898.2,756.7L899.6,760.2L901.1,763.7L902.5,767.0L904.0,770.0L905.4,772.7L906.9,775.2L908.3,777.6L909.8,779.8L911.4,781.9L913.0,784.0L914.7,786.1L916.4,788.0L918.2,789.9L920.0,791.7L922.0,793.4L924.0,795.0L926.2,796.5L928.4,797.9L930.8,799.2L933.2,800.4L935.6,801.3L938.0,802.0L940.4,802.4L942.9,802.7L945.4,802.7L947.8,802.5L950.0,802.1L952.0,801.5L953.7,800.6L955.3,799.4L956.6,798.0L957.9,796.5L959.0,794.8L960.0,793.0L961.0,791.2L961.8,789.3L962.5,787.2L963.1,785.0L963.6,782.6L964.0,780.0L964.2,777.1L964.3,773.9L964.2,770.4L964.1,766.9L963.8,763.4L963.5,760.0L963.1,756.6L962.6,753.3L962.0,749.9L961.4,746.5L960.7,743.2L960.0,740.0L959.3,737.0L958.6,734.1L957.8,731.3L957.0,728.5L956.0,725.4L955.0,722.0L953.8,718.2L952.5,714.1L951.1,709.8L949.6,705.4L948.1,701.0L946.7,696.7L945.3,692.5L943.9,688.3L942.5,684.1L941.1,679.9L939.7,675.8L938.3,671.7L936.9,667.6L935.5,663.5L934.0,659.4L932.6,655.4L931.3,651.6L930.0,648.0L928.8,644.8L927.8,642.0L926.8,639.4L925.7,636.7L924.6,633.6L923.3,630.0L921.8,625.6L920.1,620.5L918.3,615.0L916.5,609.6L914.8,604.5L913.3,600.0L912.0,596.4L910.9,593.3L909.9,590.5L908.9,587.9L907.9,585.0L906.7,581.7L905.4,578.0L904.0,574.0L902.6,569.8L901.2,565.5L899.7,561.1L898.3,556.7L896.9,552.2L895.5,547.5L894.0,542.7L892.6,537.9L891.3,533.1L890.0,528.3L888.8,523.5L887.6,518.7L886.4,513.9L885.3,509.2L884.2,504.5L883.3,500.0L882.4,495.6L881.7,491.2L881.0,487.0L880.4,482.8L879.8,478.8L879.2,475.0L878.7,471.8L878.2,469.3L877.7,466.9L877.3,464.1L877.0,460.3L876.7,455.0L876.6,447.2L876.5,437.2L876.5,426.2L876.6,415.6L876.7,406.4L876.7,400.0Z" fill="#e9cfcb" stroke="#1e1212" stroke-width="1.7" stroke-linejoin="round"/>
<path d="M836.0,703.5L838.5,706.5L838.5,704.1L838.5,700.8L838.5,696.9L838.7,693.1L839.0,690.0L839.5,687.5L840.2,685.4L841.0,683.5L842.0,681.8L843.0,680.5L844.2,679.4L845.4,678.5L846.8,677.9L848.4,677.7L850.0,678.0L851.9,678.9L853.9,680.4L856.1,682.2L858.1,684.2L860.0,686.0L861.6,687.7L863.1,689.4L864.5,691.2L865.8,693.1L867.0,695.0L868.1,697.0L869.1,699.1L870.1,701.3L871.0,703.6L872.0,706.0L873.0,708.5L873.9,711.2L874.9,714.0L875.9,716.9L877.0,720.0L878.3,723.4L879.7,727.0L881.2,730.8L882.6,734.5L884.0,738.0L885.2,741.2L886.3,744.3L887.4,747.3L888.6,750.4L890.0,754.0L891.6,758.1L893.3,762.7L895.1,767.3L897.0,771.9L899.0,776.0L901.1,779.7L903.2,783.1L905.4,786.2L907.7,789.2L910.0,792.0L912.3,794.6L914.6,797.0L917.0,799.1L919.5,801.1L922.0,803.0L924.6,804.8L927.3,806.4L930.0,807.9L932.9,809.1L936.0,810.0L939.5,810.5L943.3,810.8L947.2,810.8L950.8,810.4L954.0,809.5L956.6,808.2L958.8,806.4L960.8,804.3L962.5,801.8L964.0,799.0L965.4,795.8L966.5,792.2L967.4,788.2L968.1,784.1L968.5,780.0L968.5,775.7L968.2,771.2L967.7,766.7L967.1,762.2L966.5,758.0L966.0,754.2L965.5,750.6L964.9,747.2L964.2,743.7L963.5,740.0L962.7,736.2L961.8,732.4L960.8,728.5L959.7,724.4L958.5,720.0L957.1,715.3L955.6,710.4L954.0,705.2L952.3,700.1L950.7,695.0L949.1,690.0L947.4,684.9L945.7,679.9L944.0,674.9L942.3,670.0L940.6,665.1L938.9,660.2L937.2,655.4L935.5,650.8L934.0,646.5L932.6,642.7L931.4,639.5L930.3,636.3L929.0,632.8L927.5,628.5L925.7,623.1L923.6,616.8L921.4,610.2L919.3,604.0L917.5,598.5L916.0,594.2L914.8,590.5L913.6,587.2L912.4,583.9L911.0,580.0L909.2,575.2L907.1,569.6L905.1,564.1L903.3,559.4L902.0,556.0" fill="none" stroke="#1e1212" stroke-width="1.5"/>
<path d="M878.9,719.2L879.9,721.7L881.2,725.2L882.8,729.3L884.5,733.4L885.9,737.2L887.1,740.4L888.2,743.5L889.3,746.5L890.5,749.6L891.9,753.2L893.5,757.3L895.2,761.9L897.0,766.5L898.9,771.1L900.9,775.2L903.0,778.9L905.1,782.3L907.3,785.4L909.6,788.4L911.9,791.2L914.4,793.9L917.2,796.5L919.9,798.8L922.3,800.8L923.9,802.2" fill="none" stroke="#1e1212" stroke-width="1.2"/>
<path d="M951.9,347.9L951.5,352.8L950.3,357.2L948.4,360.8L945.8,363.7L942.6,365.6L938.9,366.6L934.7,366.6L930.3,365.6L925.8,363.7L921.3,360.9L916.9,357.2L912.7,352.9L909.0,348.0L905.8,342.7L903.2,337.1L901.3,331.4L900.1,325.8L899.7,320.5L900.1,315.6L901.3,311.2L903.2,307.6L905.8,304.7L909.0,302.8L912.7,301.8L916.9,301.8L921.3,302.8L925.8,304.7L930.3,307.5L934.7,311.2L938.9,315.5L942.6,320.4L945.8,325.7L948.4,331.3L950.3,337.0L951.5,342.6Z" fill="#e9cfcb" stroke="#1e1212" stroke-width="1.6"/>
<path d="M949.1,346.4L948.7,350.8L947.7,354.7L946.0,357.9L943.6,360.5L940.8,362.2L937.4,363.1L933.8,363.1L929.8,362.2L925.8,360.5L921.8,358.0L917.8,354.7L914.2,350.9L910.8,346.5L908.0,341.7L905.6,336.8L903.9,331.7L902.9,326.7L902.5,322.0L902.9,317.6L903.9,313.7L905.6,310.5L908.0,307.9L910.8,306.2L914.2,305.3L917.8,305.3L921.8,306.2L925.8,307.9L929.8,310.4L933.8,313.7L937.4,317.5L940.8,321.9L943.6,326.7L946.0,331.6L947.7,336.7L948.7,341.7Z" fill="url(#hg1)" stroke="#1e1212" stroke-width="1.5"/>
<path d="M894.9,263.8L894.3,265.9L892.8,266.8L890.8,266.3L888.8,264.6L887.3,262.1L886.7,259.6L887.3,257.5L888.8,256.6L890.8,257.1L892.8,258.8L894.3,261.3Z" fill="#ead2ce" stroke="#1e1212" stroke-width="1.6"/>
<path d="M964.1,302.9L963.5,305.0L962.0,305.9L960.0,305.4L958.0,303.7L956.5,301.2L955.9,298.7L956.5,296.6L958.0,295.7L960.0,296.2L962.0,297.9L963.5,300.4Z" fill="#ead2ce" stroke="#1e1212" stroke-width="1.6"/>
<path d="M929.9,422.9L929.3,425.0L927.8,425.9L925.8,425.4L923.8,423.7L922.3,421.2L921.7,418.7L922.3,416.6L923.8,415.7L925.8,416.2L927.8,417.9L929.3,420.4Z" fill="#ead2ce" stroke="#1e1212" stroke-width="1.6"/>
<path d="M929.9,487.9L929.3,490.0L927.8,490.9L925.8,490.4L923.8,488.7L922.3,486.2L921.7,483.7L922.3,481.6L923.8,480.7L925.8,481.2L927.8,482.9L929.3,485.4Z" fill="#ead2ce" stroke="#1e1212" stroke-width="1.6"/>
<path d="M955.8,574.6L955.2,576.7L953.7,577.6L951.7,577.1L949.7,575.4L948.2,572.9L947.6,570.4L948.2,568.3L949.7,567.4L951.7,567.9L953.7,569.6L955.2,572.1Z" fill="#ead2ce" stroke="#1e1212" stroke-width="1.6"/>
<path d="M984.1,656.1L983.5,658.2L982.0,659.1L980.0,658.6L978.0,656.9L976.5,654.4L975.9,651.9L976.5,649.8L978.0,648.9L980.0,649.4L982.0,651.1L983.5,653.6Z" fill="#ead2ce" stroke="#1e1212" stroke-width="1.6"/>
<path d="M1020.1,757.1L1019.5,759.2L1018.0,760.1L1016.0,759.6L1014.0,757.9L1012.5,755.4L1011.9,752.9L1012.5,750.8L1014.0,749.9L1016.0,750.4L1018.0,752.1L1019.5,754.6Z" fill="#ead2ce" stroke="#1e1212" stroke-width="1.6"/>
<path d="M1025.1,849.1L1024.5,851.2L1023.0,852.1L1021.0,851.6L1019.0,849.9L1017.5,847.4L1016.9,844.9L1017.5,842.8L1019.0,841.9L1021.0,842.4L1023.0,844.1L1024.5,846.6Z" fill="#ead2ce" stroke="#1e1212" stroke-width="1.6"/>
<path d="M969.1,880.1L968.5,882.2L967.0,883.1L965.0,882.6L963.0,880.9L961.5,878.4L960.9,875.9L961.5,873.8L963.0,872.9L965.0,873.4L967.0,875.1L968.5,877.6Z" fill="#ead2ce" stroke="#1e1212" stroke-width="1.6"/>
<path d="M913.1,844.1L912.5,846.2L911.0,847.1L909.0,846.6L907.0,844.9L905.5,842.4L904.9,839.9L905.5,837.8L907.0,836.9L909.0,837.4L911.0,839.1L912.5,841.6Z" fill="#ead2ce" stroke="#1e1212" stroke-width="1.6"/>
<path d="M875.1,775.1L874.5,777.2L873.0,778.1L871.0,777.6L869.0,775.9L867.5,773.4L866.9,770.9L867.5,768.8L869.0,767.9L871.0,768.4L873.0,770.1L874.5,772.6Z" fill="#ead2ce" stroke="#1e1212" stroke-width="1.6"/>
<path d="M858.3,703.8L857.7,705.9L856.2,706.8L854.2,706.3L852.2,704.6L850.7,702.1L850.1,699.6L850.7,697.5L852.2,696.6L854.2,697.1L856.2,698.8L857.7,701.3Z" fill="#ead2ce" stroke="#1e1212" stroke-width="1.6"/>
<path d="M945.5 747V700" stroke="#7fdc4a" stroke-width="1.6"/><path d="M934 751L903 768" stroke="#4aa0e0" stroke-width="2"/><path d="M953 752L986 769" stroke="#e9a0a8" stroke-width="1.2"/>
<path d="M940 742l3-5 3 5M948 748l4-3 1 5M941 750l4 3-5 2" fill="none" stroke="#4a9ad8" stroke-width="1.3"/><path d="M944 741l4 6" stroke="#7fdc4a" stroke-width="1.3"/>
<g stroke-linejoin="round"><path d="M502.500 950v-23h-2.200l4.200-13 4.200 13h-2.200v23z" fill="#2fb02f" stroke="#2fb02f" stroke-width=".6"/><path d="M504.500 950v-36l4.200 13h-2.200v23z" fill="#1e8a1e"/><path d="M503 948.500l-19 10.500-1.200-2-11 12.500 16-4.500-1.200-2 19-10.500z" fill="#1e88e8" stroke="#1e88e8" stroke-width=".6"/><path d="M506 948.500l19 10.500 1.200-2 11 12.500-16-4.500 1.200-2-19-10.500z" fill="#e01c1c" stroke="#e01c1c" stroke-width=".6"/></g>
<text x="497.500" y="909" font-size="16" fill="#2a9a4a" font-family="'Liberation Serif',serif">Y</text><text x="456.500" y="982.500" font-size="16.500" fill="#3a6a9a" font-family="'Liberation Serif',serif">Z</text><text x="540" y="982.500" font-size="16.500" fill="#b02a2a" font-family="'Liberation Serif',serif">X</text>
</svg>
<div style="left:87.7px;top:1037px;width:3px;height:81px;background:repeating-linear-gradient(to bottom,#f2f2f2 0,#f2f2f2 1.9px,#3c3c3c 1.9px,#3c3c3c 3.1px)"></div>
<div style="left:93.5px;top:1036.5px;width:1417.5px;height:53.5px;background:#ece9d8"></div>
<div style="left:98.5px;top:1041.5px;width:1407.5px;height:43.5px;background:linear-gradient(to bottom,#c6cad0,#d5d8dc 45%,#cbced3 75%,#b4b8bd);border:1px solid #c9c6b6"></div>
<div style="left:80.5px;top:1130px;width:805.5px;height:38.5px;background:linear-gradient(to bottom,#d3d6db 0%,#c6c9cf 30%,#b3b7be 70%,#9da1a9 100%);border-radius:7px 6px 6px 7px"></div>
<div style="left:870px;top:1131.5px;width:16px;height:37px;background:linear-gradient(to bottom,#b3b7bf,#666a72);border-radius:0 6px 6px 0"></div>
<svg style="left:873.5px;top:1154px" width="12" height="14" viewBox="0 0 12 14"><rect x="1" y="1" width="9" height="2.2" fill="#fff"/><rect x="0" y="0" width="9" height="2.2" fill="#111"/><path d="M1 6h9l-4.5 5z" fill="#fff"/><path d="M0 5h9l-4.5 5z" fill="#111"/></svg>
<div style="left:87.3px;top:1140.3px;width:3px;height:3px;background:#f4f4f4"></div><div style="left:86px;top:1139.0px;width:3px;height:3px;background:#1a1a1a"></div><div style="left:87.3px;top:1146.6px;width:3px;height:3px;background:#f4f4f4"></div><div style="left:86px;top:1145.3px;width:3px;height:3px;background:#1a1a1a"></div><div style="left:87.3px;top:1152.8999999999999px;width:3px;height:3px;background:#f4f4f4"></div><div style="left:86px;top:1151.6px;width:3px;height:3px;background:#1a1a1a"></div><div style="left:87.3px;top:1159.2px;width:3px;height:3px;background:#f4f4f4"></div><div style="left:86px;top:1157.9px;width:3px;height:3px;background:#1a1a1a"></div>
<div style="left:132px;top:1135px;width:93px;height:30px;background:#fff;border:1px solid #b0b4c0"></div>
<div style="left:201px;top:1137px;width:22px;height:26px;background:linear-gradient(to bottom,#cfdcfb,#b7c8f4);border-radius:2px;border:1px solid #dfe7fb"></div>
<svg style="left:201px;top:1137px" width="22" height="26" viewBox="0 0 22 26"><path d="M5.500 9.500L11 15l5.500-5.500" fill="none" stroke="#4d6185" stroke-width="3.2"/></svg>
<div class="t" style="left:141px;top:1142px;font-size:16.8px;color:#000;">1.0</div>
<div style="left:312px;top:1135px;width:196px;height:30px;background:#fff;border:1px solid #b0b4c0"></div>
<div style="left:484px;top:1137px;width:22px;height:26px;background:linear-gradient(to bottom,#cfdcfb,#b7c8f4);border-radius:2px;border:1px solid #dfe7fb"></div>
<svg style="left:484px;top:1137px" width="22" height="26" viewBox="0 0 22 26"><path d="M5.500 9.500L11 15l5.500-5.500" fill="none" stroke="#4d6185" stroke-width="3.2"/></svg>
<div class="t" style="left:319px;top:1142px;font-size:16.8px;color:#000;">Системный слой (0)</div>
<div style="left:472.5px;top:1136px;width:12px;height:28px;background:#fff"></div>
<div style="left:686px;top:1135px;width:177px;height:30px;background:#fff;border:1px solid #b0b4c0"></div>
<div style="left:839px;top:1137px;width:22px;height:26px;background:linear-gradient(to bottom,#cfdcfb,#b7c8f4);border-radius:2px;border:1px solid #dfe7fb"></div>
<svg style="left:839px;top:1137px" width="22" height="26" viewBox="0 0 22 26"><path d="M5.500 9.500L11 15l5.500-5.500" fill="none" stroke="#4d6185" stroke-width="3.2"/></svg>
<div class="t" style="left:694px;top:1142px;font-size:16.8px;color:#000;">Полный</div>
<svg style="left:0;top:0" width="1600" height="1200" viewBox="0 0 1600 1200">
<g transform="translate(102.0,1137.5) scale(1.5625)"><path d="M2.500 9v6.500M13 9v6.500M2.500 13h10.500" fill="none" stroke="#2840d8" stroke-width="1.7" /><path d="M9.500 11l3.500 2-3.500 2z" fill="#2840d8" /><path d="M2.500 0v6M-.5 3h6M13 0v6M10 3h6" fill="none" stroke="#223" stroke-width="1" /><rect x="1.5" y="2" width="2" height="2" fill="#fff" stroke="#223" stroke-width="0.8" /><rect x="12" y="2" width="2" height="2" fill="#fff" stroke="#223" stroke-width="0.8" /></g>
<g transform="translate(232.0,1138.0) scale(1.5625)"><path d="M1 13.500l13-9" fill="none" stroke="#223" stroke-width="1" /><path d="M4 0v6M1 3h6M12.500 9v6M9.500 12h6" fill="none" stroke="#223" stroke-width="1" /><rect x="3" y="2" width="2" height="2" fill="#fff" stroke="#223" stroke-width="0.7" /><rect x="11.5" y="11" width="2" height="2" fill="#fff" stroke="#223" stroke-width="0.7" /><path d="M1 13.500l3-4M14 4.500l-3 4" fill="none" stroke="#6a80c8" stroke-width="0.8" /></g>
<g transform="translate(280.0,1138.0) scale(1.5625)"><path d="M1 5.500l6-3.500h8.500l-6 3.500zM1 9l6-3.500h8.500l-6 3.500zM1 12.500l6-3.500h8.500l-6 3.500z" fill="#dfe6ff" stroke="#2840d8" stroke-width="1.3" /></g>
<g transform="translate(526.0,1137.5) scale(1.5625)"><path d="M2 2h6v6.500h6v6h-12z" fill="#9adcf4" stroke="#2840d8" stroke-width="1.5" /><rect x="0.8999999999999999" y="0.8999999999999999" width="2.2" height="2.2" fill="#2030a0" /><rect x="6.9" y="0.8999999999999999" width="2.2" height="2.2" fill="#2030a0" /><rect x="6.9" y="7.4" width="2.2" height="2.2" fill="#2030a0" /><rect x="12.9" y="7.4" width="2.2" height="2.2" fill="#2030a0" /><rect x="12.9" y="13.4" width="2.2" height="2.2" fill="#2030a0" /><rect x="0.8999999999999999" y="13.4" width="2.2" height="2.2" fill="#2030a0" /></g>
<g transform="translate(561.0,1137.5) scale(1.5625)"><path d="M1 5h9v9.500h-9z" fill="#d8dadd" stroke="#a4a6ac" stroke-width="1" /><path d="M4 2h9v9" fill="none" stroke="#a4a6ac" stroke-width="1" /><path d="M7 10l6-7 2 1.500-6 7-2.500 1z" fill="#c4c6ca" stroke="#9c9ea4" stroke-width="0.8" /></g>
<g transform="translate(608.0,1137.5) scale(1.5625)"><path d="M4.500 3v10.500h10" fill="none" stroke="#30a030" stroke-width="1.1" /><path d="M4.500 13.500l-4 2.500" fill="none" stroke="#d04040" stroke-width="1.1" /><circle cx="4.5" cy="13" r="2.6" fill="none" stroke="#6040c0" stroke-width="1" /><path d="M7 5l3 3.500 5.500-7.500" fill="none" stroke="#182090" stroke-width="1.9" /></g>
<g transform="translate(654.5,1137.5) scale(1.5625)"><path d="M2.500 0v16" fill="none" stroke="#141414" stroke-width="1.3" /><rect x="1" y="1.5" width="4" height="2.6" fill="#fff" stroke="#141414" stroke-width="1.1" /><rect x="1" y="6" width="4" height="2.6" fill="#fff" stroke="#141414" stroke-width="1.1" /><rect x="1" y="10.5" width="4" height="2.6" fill="#fff" stroke="#141414" stroke-width="1.1" /><path d="M5 2.800h2.500M5 7.300h2.500M5 11.800h2.500" fill="none" stroke="#141414" stroke-width="1" /><path d="M9 3l1.300 1.500 2.500-3.500M9 8l1.300 1.500 2.500-3.500M9 12.500l1.300 1.500 2.500-3.500" fill="none" stroke="#3050d0" stroke-width="1.1" /></g>
<rect x="266.3" y="1136" width="1.700" height="28" fill="#6c6e74"/><rect x="268" y="1136" width="1.700" height="28" fill="#f2f3f5"/>
<rect x="513.3" y="1136" width="1.700" height="28" fill="#6c6e74"/><rect x="515" y="1136" width="1.700" height="28" fill="#f2f3f5"/>
<rect x="593.8" y="1136" width="1.700" height="28" fill="#6c6e74"/><rect x="595.5" y="1136" width="1.700" height="28" fill="#f2f3f5"/>
<rect x="641.8" y="1136" width="1.700" height="28" fill="#6c6e74"/><rect x="643.5" y="1136" width="1.700" height="28" fill="#f2f3f5"/>
<g transform="translate(18.0,43.0) scale(1.9)"><path d="M3.200 16.200h12.300v-4" fill="none" stroke="#e8e8e8" stroke-width="1" /><path d="M2 3.500h2.500v-1.500M2 3.500v11h12" fill="none" stroke="#141414" stroke-width="1.3" /><path d="M4.500 3.500h5l4.500 4.500v6.500h-9.500z" fill="#e8e8e8" stroke="#141414" stroke-width="1.3" /><circle cx="8.5" cy="9.5" r="2.8" fill="#fff" stroke="#141414" stroke-width="1.1" /><path d="M7 11l3-3" fill="none" stroke="#141414" stroke-width="1.2" /><path d="M14.500 12v3.500h-2" fill="none" stroke="#141414" stroke-width="1" stroke-dasharray="1 1"/></g>
</svg>
<div style="left:0px;top:1168px;width:1600px;height:32px;background:linear-gradient(to bottom,#555 0,#50505a 4px,#45454f 8px,#36363c 12px,#2d2d30 16px,#2b2b2d 100%)"></div>
<div style="left:0px;top:1166px;width:3.2px;height:34px;background:linear-gradient(to right,#1a6ae8,#2a86f4 60%,#1e72e6)"></div>
<div class="t" style="left:8px;top:1179.5px;font-size:16.8px;color:#fff;">Щелкните левой кнопкой мыши на объекте для его выделения (вместе с Ctrl - добавить к выделенным)</div>
<div style="left:1466px;top:1177px;width:1.3px;height:23px;background:#77777b"></div>
<div style="left:1598.5px;top:1177px;width:1.3px;height:23px;background:#77777b"></div>
</body></html>
